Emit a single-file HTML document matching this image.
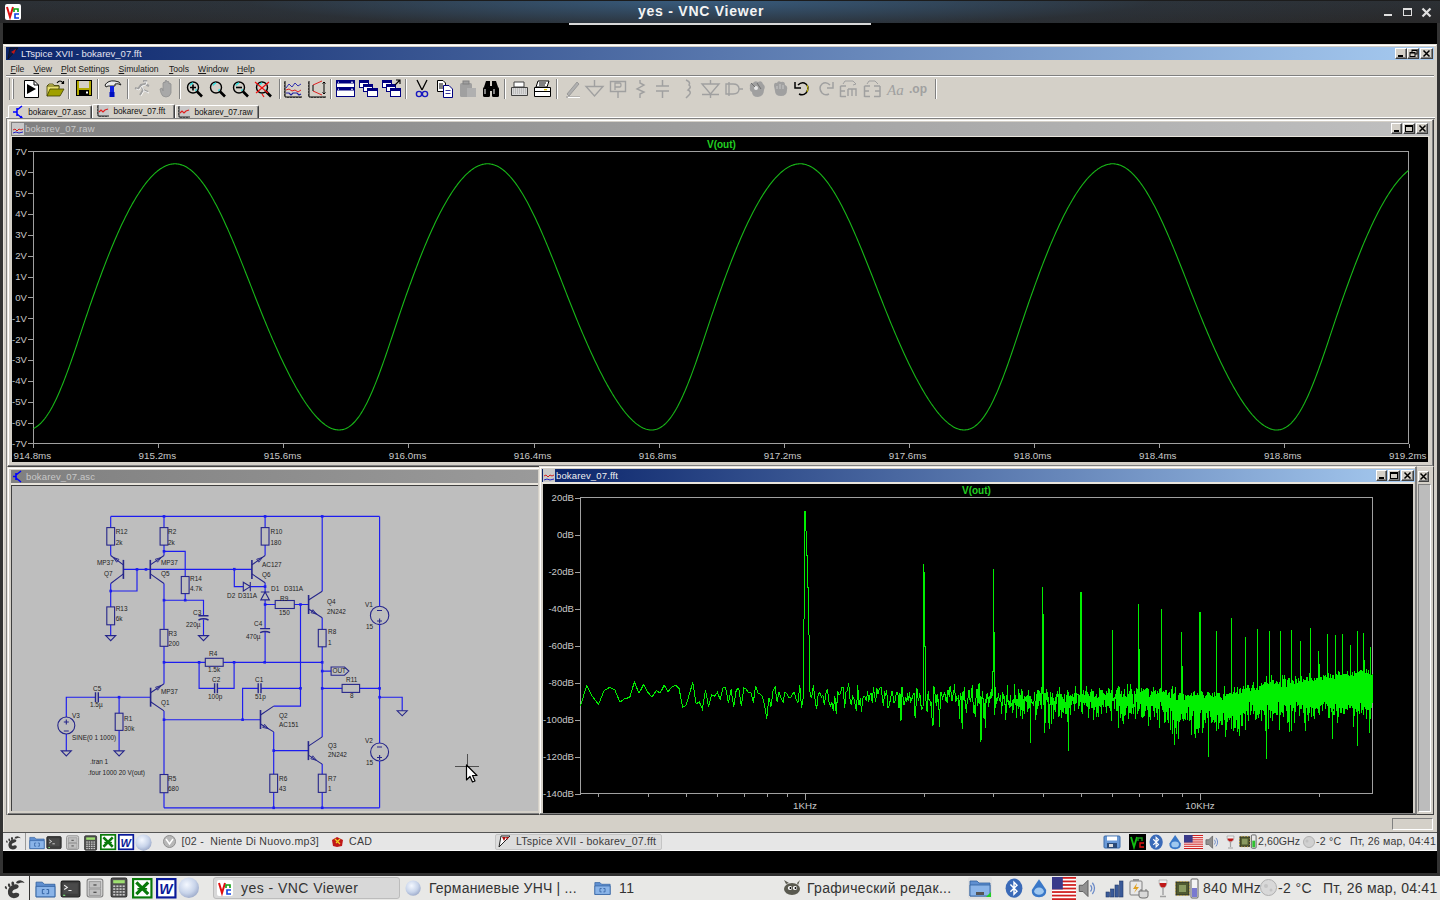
<!DOCTYPE html><html><head><meta charset="utf-8"><style>
*{margin:0;padding:0;box-sizing:border-box}
html,body{width:1440px;height:900px;overflow:hidden;background:#000;font-family:"Liberation Sans",sans-serif;position:relative}
.a{position:absolute;white-space:nowrap}
svg{position:absolute;overflow:visible}
.face{background:#d4d0c8}
.raised{background:#d4d0c8;border-top:1px solid #fff;border-left:1px solid #fff;border-right:1px solid #404040;border-bottom:1px solid #404040;box-shadow:inset -1px -1px 0 #808080}
.wbtn{position:absolute;width:11px;height:10px;background:#d4d0c8;border-top:1px solid #fff;border-left:1px solid #fff;border-right:1px solid #404040;border-bottom:1px solid #404040;box-shadow:inset -1px -1px 0 #808080}
.menu{position:absolute;top:63px;font-size:8.6px;color:#1a1a1a;line-height:12px;white-space:nowrap}
.menu u{text-decoration:underline;text-underline-offset:1px}
.ylab{position:absolute;color:#c8c8c8;font-size:9.6px;line-height:10px;text-align:right;white-space:nowrap}
.xlab{position:absolute;color:#c8c8c8;font-size:9.8px;line-height:10px;text-align:center;white-space:nowrap}
.sch{position:absolute;font-size:6.2px;line-height:7px;color:#303030;white-space:nowrap}
.tb{position:absolute;font-size:11px;line-height:13px;color:#333;white-space:nowrap}
</style></head><body><div class="a" style="left:0;top:0;width:1440px;height:23px;background:radial-gradient(ellipse 760px 46px at 700px 0px,rgba(58,100,140,0.85),rgba(45,60,75,0.3) 60%,rgba(0,0,0,0) 100%),linear-gradient(#2c3035,#29292a)"></div>
<div class="a" style="left:0;top:0;width:1440px;height:1px;background:#1c1c1c"></div>
<div class="a" style="left:638px;top:3px;font-weight:bold;font-size:14px;letter-spacing:0.75px;line-height:16px;color:#f4f4f4">yes - VNC Viewer</div>
<div class="a" style="left:5px;top:4px;width:16px;height:16px;background:#fff;border-radius:2px"></div>
<svg style="left:5px;top:4px" width="16" height="16"><path d="M2,3 L5,13 L8,3" stroke="#e01010" stroke-width="2" fill="none"/><path d="M9,8 V5 H13 V8" stroke="#10a010" stroke-width="1.6" fill="none"/><path d="M14,10 H10 V14 H14" stroke="#1040e0" stroke-width="1.6" fill="none"/></svg>
<div class="a" style="left:1384px;top:14px;width:8px;height:2px;background:#e0e0e0"></div>
<div class="a" style="left:1403px;top:8px;width:9px;height:8px;border:1.5px solid #e0e0e0;border-top-width:2.5px"></div>
<svg style="left:1421px;top:7px" width="11" height="11"><path d="M1.5,1.5 L9.5,9.5 M9.5,1.5 L1.5,9.5" stroke="#e0e0e0" stroke-width="2.2"/></svg>
<div class="a" style="left:569px;top:23px;width:302px;height:2px;background:#d8d8d8"></div>
<div class="a" style="left:0;top:23px;width:3px;height:851px;background:#333"></div>
<div class="a" style="left:1437px;top:23px;width:3px;height:851px;background:#333"></div>
<div class="a" style="left:3px;top:44px;width:1434px;height:788px;background:#d4d0c8;border-top:1px solid #e8e4dc;border-left:1px solid #e8e4dc"></div>
<div class="a" style="left:4px;top:45px;width:1432px;height:1px;background:#fff"></div>
<div class="a" style="left:6px;top:47px;width:1428px;height:13px;background:linear-gradient(to right,#0a246a,#a6caf0)"></div>
<svg style="left:7px;top:47px" width="12" height="13"><path d="M1,12 L3,1 L11,1 Z" fill="#0a1a50" stroke="#111" stroke-width="0.8"/><path d="M4,5 L9,2 L7,7 Z" fill="#c01818"/></svg>
<div class="a" style="left:21px;top:48px;font-size:9.5px;line-height:12px;color:#e4e4f0;letter-spacing:0px">LTspice XVII - bokarev_07.fft</div>
<div class="wbtn" style="left:1395px;top:48px;width:12px;height:11px"></div>
<div class="wbtn" style="left:1407px;top:48px;width:12px;height:11px"></div>
<div class="wbtn" style="left:1420px;top:48px;width:13px;height:11px"></div>
<div class="a" style="left:1398px;top:55px;width:5px;height:2px;background:#000"></div>
<svg style="left:1409px;top:49px" width="9" height="9"><rect x="3" y="1" width="5" height="4" fill="none" stroke="#000" stroke-width="1"/><rect x="1" y="3.5" width="5" height="4" fill="#d4d0c8" stroke="#000" stroke-width="1"/><line x1="3" y1="1.5" x2="8" y2="1.5" stroke="#000"/><line x1="1" y1="4" x2="6" y2="4" stroke="#000"/></svg>
<svg style="left:1422px;top:49px" width="9" height="9"><path d="M1.5,1.5 L7.5,7.5 M7.5,1.5 L1.5,7.5" stroke="#000" stroke-width="1.5"/></svg>
<div class="menu" style="left:10.5px"><u>F</u>ile</div>
<div class="menu" style="left:33.5px"><u>V</u>iew</div>
<div class="menu" style="left:61px"><u>P</u>lot Settings</div>
<div class="menu" style="left:118.5px"><u>S</u>imulation</div>
<div class="menu" style="left:169px"><u>T</u>ools</div>
<div class="menu" style="left:198px"><u>W</u>indow</div>
<div class="menu" style="left:237px"><u>H</u>elp</div>
<div class="a" style="left:6px;top:75px;width:1428px;height:1px;background:#808080"></div>
<div class="a" style="left:6px;top:76px;width:1428px;height:1px;background:#fff"></div>
<div class="a" style="left:9px;top:78px;width:1px;height:22px;background:#808080"></div><div class="a" style="left:12px;top:79px;width:2px;height:20px;background:#fff;border-right:1px solid #808080"></div><div class="a" style="left:68px;top:79px;width:1px;height:20px;background:#808080"></div><div class="a" style="left:69px;top:79px;width:1px;height:20px;background:#fff"></div><div class="a" style="left:97px;top:79px;width:1px;height:20px;background:#808080"></div><div class="a" style="left:98px;top:79px;width:1px;height:20px;background:#fff"></div><div class="a" style="left:127px;top:79px;width:1px;height:20px;background:#808080"></div><div class="a" style="left:128px;top:79px;width:1px;height:20px;background:#fff"></div><div class="a" style="left:179px;top:79px;width:1px;height:20px;background:#808080"></div><div class="a" style="left:180px;top:79px;width:1px;height:20px;background:#fff"></div><div class="a" style="left:279px;top:79px;width:1px;height:20px;background:#808080"></div><div class="a" style="left:280px;top:79px;width:1px;height:20px;background:#fff"></div><div class="a" style="left:330px;top:79px;width:1px;height:20px;background:#808080"></div><div class="a" style="left:331px;top:79px;width:1px;height:20px;background:#fff"></div><div class="a" style="left:405px;top:79px;width:1px;height:20px;background:#808080"></div><div class="a" style="left:406px;top:79px;width:1px;height:20px;background:#fff"></div><div class="a" style="left:504px;top:79px;width:1px;height:20px;background:#808080"></div><div class="a" style="left:505px;top:79px;width:1px;height:20px;background:#fff"></div><div class="a" style="left:556px;top:79px;width:1px;height:20px;background:#808080"></div><div class="a" style="left:557px;top:79px;width:1px;height:20px;background:#fff"></div><div class="a" style="left:935px;top:79px;width:1px;height:20px;background:#808080"></div><div class="a" style="left:936px;top:79px;width:1px;height:20px;background:#fff"></div><svg style="left:23px;top:79px" width="20" height="20" viewBox="0 0 20 20"><path d="M1.5,1.5 H11 L15.5,6 V18.5 H1.5 Z" fill="#fff" stroke="#000"/><path d="M11,1.5 V6 H15.5" fill="none" stroke="#000"/><path d="M4,5 L13,10 L4,15 Z" fill="#000"/></svg><svg style="left:46px;top:79px" width="20" height="20" viewBox="0 0 20 20"><path d="M1,7 L3,5 H7 L8,6.5 H13 V9 Z" fill="#e8e070" stroke="#404000" stroke-width="0.8"/><path d="M1,17 V7 H13 V10 Z" fill="#e8e070" stroke="#404000" stroke-width="0.8"/><path d="M1,17 L4,10 H18 L14,17 Z" fill="#a0a000" stroke="#404000" stroke-width="0.8"/><path d="M11,4 Q14,0 17,4 M15.5,4.5 L17.5,4.5 L17.5,2" fill="none" stroke="#000" stroke-width="1.2"/></svg><svg style="left:76px;top:79px" width="20" height="20" viewBox="0 0 20 20"><rect x="0.5" y="1.5" width="15" height="15" fill="#b0a800" stroke="#000"/><rect x="3" y="2" width="10" height="7" fill="#d4d0c8"/><rect x="3" y="11" width="10" height="5" fill="#000"/><rect x="10" y="12.5" width="2" height="2" fill="#fff"/></svg><svg style="left:103px;top:79px" width="20" height="20" viewBox="0 0 20 20"><path d="M2,6 Q5,1 12,2 Q17,2 18,6 Q15,4 12,5 V7 H5 L3,8 Z" fill="#e8e8e8" stroke="#202020" stroke-width="1"/><rect x="7" y="7" width="4" height="6" fill="#1020e0"/><rect x="6.5" y="13" width="5" height="5" fill="#0010c0"/></svg><svg style="left:132px;top:79px" width="20" height="20" viewBox="0 0 20 20"><path d="M11,2 L14,2 L13,5 L9,6 L6,10 L3,9 M9,6 L11,11 L8,16 M11,11 L16,13 M13,5 L17,7" fill="none" stroke="#a0a0a0" stroke-width="2"/><path d="M12,3 L15,3 L14,6 L10,7 L7,11 L4,10 M10,7 L12,12 L9,17 M12,12 L17,14" fill="none" stroke="#fff" stroke-width="0.8"/></svg><svg style="left:157px;top:79px" width="20" height="20" viewBox="0 0 20 20"><path d="M3,10 L5,9 L6,12 V4 Q7,2 8,4 V2 Q9,0.5 10,2 V3 Q11,1.5 12,3 V5 Q13,3.5 14,5 V14 Q13,18 9,18 Q5,18 4,14 Z" fill="#a8a8a8" stroke="#909090" stroke-width="0.8"/></svg><svg style="left:185px;top:79px" width="20" height="20" viewBox="0 0 20 20"><circle cx="8" cy="8.5" r="5.5" fill="#d4d0c8" stroke="#000" stroke-width="1.4"/><path d="M5,6.5 Q6,4.5 8,4" stroke="#30e0e0" stroke-width="1.5" fill="none"/><path d="M10.5,12 L11.5,10" stroke="#30e0e0" stroke-width="1.3"/><path d="M12,12.5 L17,17.5" stroke="#000" stroke-width="2.6"/><path d="M5,8.5 H11 M8,5.5 V11.5" stroke="#000" stroke-width="1.6"/></svg><svg style="left:208px;top:79px" width="20" height="20" viewBox="0 0 20 20"><circle cx="8" cy="8.5" r="5.5" fill="#d4d0c8" stroke="#000" stroke-width="1.4"/><path d="M5,6.5 Q6,4.5 8,4" stroke="#30e0e0" stroke-width="1.5" fill="none"/><path d="M10.5,12 L11.5,10" stroke="#30e0e0" stroke-width="1.3"/><path d="M12,12.5 L17,17.5" stroke="#000" stroke-width="2.6"/></svg><svg style="left:231px;top:79px" width="20" height="20" viewBox="0 0 20 20"><circle cx="8" cy="8.5" r="5.5" fill="#d4d0c8" stroke="#000" stroke-width="1.4"/><path d="M5,6.5 Q6,4.5 8,4" stroke="#30e0e0" stroke-width="1.5" fill="none"/><path d="M10.5,12 L11.5,10" stroke="#30e0e0" stroke-width="1.3"/><path d="M12,12.5 L17,17.5" stroke="#000" stroke-width="2.6"/><path d="M5,8.5 H11" stroke="#000" stroke-width="1.6"/></svg><svg style="left:254px;top:79px" width="20" height="20" viewBox="0 0 20 20"><circle cx="8" cy="8.5" r="5.5" fill="#d4d0c8" stroke="#000" stroke-width="1.4"/><path d="M5,6.5 Q6,4.5 8,4" stroke="#30e0e0" stroke-width="1.5" fill="none"/><path d="M10.5,12 L11.5,10" stroke="#30e0e0" stroke-width="1.3"/><path d="M12,12.5 L17,17.5" stroke="#000" stroke-width="2.6"/><path d="M1,3 L14,14 M2,14 L15,3 M8,15 L10,18" stroke="#f01010" stroke-width="1.2"/></svg><svg style="left:283px;top:79px" width="20" height="20" viewBox="0 0 20 20"><path d="M2,2 V18 H19" fill="none" stroke="#000"/><path d="M1,4 H2 M1,7 H2 M1,10 H2 M1,13 H2 M1,16 H2 M5,18 V19 M8,18 V19 M11,18 V19 M14,18 V19 M17,18 V19" stroke="#000"/><path d="M3,9 L6,5 L9,8 L12,4 L15,7 L18,5" fill="none" stroke="#3030b0"/><path d="M3,11 L6,10 L9,12 L12,11 L15,13 L18,11" fill="none" stroke="#e02020"/><path d="M3,14 L6,14 L8,16 L10,14 L14,14 L16,16 L18,15" fill="none" stroke="#2020a0" stroke-width="1.2"/></svg><svg style="left:307px;top:79px" width="20" height="20" viewBox="0 0 20 20"><path d="M2,2 V18 H19" fill="none" stroke="#000"/><path d="M1,4 H2 M1,7 H2 M1,10 H2 M1,13 H2 M1,16 H2 M5,18 V19 M8,18 V19 M11,18 V19 M14,18 V19 M17,18 V19" stroke="#000"/><path d="M6,6 L15,2 M6,12 L15,16" stroke="#e02020"/><path d="M6,6 V12 M17,3 V15 M15.5,4.5 L17,3 L18.5,4.5 M15.5,13.5 L17,15 L18.5,13.5" fill="none" stroke="#000"/></svg><svg style="left:336px;top:79px" width="20" height="20" viewBox="0 0 20 20"><rect x="0.5" y="1.5" width="18" height="16" fill="#fff" stroke="#000080"/><rect x="1" y="2" width="17" height="2.5" fill="#000080"/><rect x="2" y="2.7" width="1" height="1" fill="#fff"/><rect x="15" y="2.7" width="2" height="1" fill="#fff"/><line x1="1" y1="8.5" x2="18" y2="8.5" stroke="#000080"/><rect x="1" y="9" width="17" height="2.5" fill="#000080"/><rect x="2" y="9.7" width="1" height="1" fill="#fff"/><rect x="15" y="9.7" width="2" height="1" fill="#fff"/></svg><svg style="left:359px;top:79px" width="20" height="20" viewBox="0 0 20 20"><rect x="0.5" y="1.5" width="9" height="7" fill="#fff" stroke="#000080"/><rect x="1" y="2" width="8" height="2" fill="#000080"/><rect x="4.5" y="5.5" width="9" height="7" fill="#fff" stroke="#000080"/><rect x="5" y="6" width="8" height="2" fill="#000080"/><rect x="8.5" y="9.5" width="10" height="8" fill="#fff" stroke="#000080"/><rect x="9" y="10" width="9" height="2" fill="#000080"/></svg><svg style="left:382px;top:79px" width="20" height="20" viewBox="0 0 20 20"><rect x="0.5" y="1.5" width="9" height="7" fill="#fff" stroke="#000080"/><rect x="1" y="2" width="8" height="2" fill="#000080"/><rect x="4.5" y="5.5" width="9" height="7" fill="#fff" stroke="#000080"/><rect x="5" y="6" width="8" height="2" fill="#000080"/><rect x="8.5" y="9.5" width="10" height="8" fill="#fff" stroke="#000080"/><rect x="9" y="10" width="9" height="2" fill="#000080"/><path d="M13,6 L18,1 M14,1 H18 V5" fill="none" stroke="#000" stroke-width="1.1"/></svg><svg style="left:413px;top:79px" width="20" height="20" viewBox="0 0 20 20"><path d="M4,1 L9,11 M14,1 L9,11" stroke="#000" stroke-width="1.3"/><circle cx="6" cy="15" r="2.6" fill="none" stroke="#1818c0" stroke-width="1.4"/><circle cx="12" cy="15" r="2.6" fill="none" stroke="#1818c0" stroke-width="1.4"/></svg><svg style="left:436px;top:79px" width="20" height="20" viewBox="0 0 20 20"><path d="M1.5,1.5 H7 L9.5,4 V12.5 H1.5 Z" fill="#fff" stroke="#000"/><path d="M3,5 H7 M3,7 H7 M3,9 H7" stroke="#000"/><path d="M7.5,6.5 H13 L16.5,10 V18.5 H7.5 Z" fill="#fff" stroke="#000080"/><path d="M9.5,11.5 H14.5 M9.5,14.5 H14.5" stroke="#000080" stroke-width="0.8"/></svg><svg style="left:459px;top:79px" width="20" height="20" viewBox="0 0 20 20"><rect x="1" y="4" width="12" height="14" rx="1.5" fill="#a0a0a0"/><rect x="4" y="2" width="6" height="3" fill="#a0a0a0" stroke="#808080"/><rect x="8" y="9" width="9" height="9" fill="#b0b0b0"/></svg><svg style="left:482px;top:79px" width="20" height="20" viewBox="0 0 20 20"><path d="M2,8 L4,2 H8 V8 M16,8 L14,2 H10 V8" fill="#000"/><rect x="1" y="8" width="7" height="10" rx="1.5" fill="#000"/><rect x="10" y="8" width="7" height="10" rx="1.5" fill="#000"/><rect x="7" y="7" width="4" height="5" fill="#000"/><path d="M3,10 V15 M12,10 V15" stroke="#fff" stroke-width="1"/></svg><svg style="left:510px;top:79px" width="20" height="20" viewBox="0 0 20 20"><path d="M4,3 H14 V8 H4 Z" fill="#fff" stroke="#404040"/><path d="M1.5,8.5 H17.5 V16.5 H1.5 Z" fill="#d8d8d8" stroke="#404040"/><path d="M3,10 H16 M3,12 H16 M3,14 H16" stroke="#a0a0a0" stroke-dasharray="1 1"/></svg><svg style="left:533px;top:79px" width="20" height="20" viewBox="0 0 20 20"><path d="M5,2 H16 L14,8 H3 Z" fill="#fff" stroke="#000"/><path d="M6,4 H13 M6,6 H12" stroke="#000"/><path d="M1.5,8.5 H17.5 V17.5 H1.5 Z" fill="#fff" stroke="#000"/><path d="M1.5,12.5 H17.5" stroke="#000"/><rect x="11" y="10" width="3" height="1.3" fill="#e0c000"/></svg><svg style="left:563px;top:79px" width="20" height="20" viewBox="0 0 20 20"><path d="M4,15 L14,3 L16,5 L6,17 Z" fill="#b0b0b0" stroke="#909090" stroke-width="0.8"/><path d="M3,18 H17" stroke="#a0a0a0" stroke-width="1.2"/><path d="M5,18.5 H17" stroke="#fff"/></svg><svg style="left:585px;top:79px" width="20" height="20" viewBox="0 0 20 20"><path d="M9.5,1 V7 M1,7.5 H18 L9.5,17 Z" fill="none" stroke="#a0a0a0" stroke-width="1.4"/></svg><svg style="left:609px;top:79px" width="20" height="20" viewBox="0 0 20 20"><path d="M1.5,2.5 H16.5 V12.5 H1.5 Z M9,12.5 V19" fill="none" stroke="#a0a0a0" stroke-width="1.4"/><path d="M6,11 V4 H11 Q12,4 12,6 Q12,8 11,8 H6" fill="none" stroke="#a0a0a0" stroke-width="1.3"/></svg><svg style="left:633px;top:79px" width="20" height="20" viewBox="0 0 20 20"><path d="M7,1 V4 L11,6 L4,10 L11,13 L7,15 V19" fill="none" stroke="#a0a0a0" stroke-width="1.4"/></svg><svg style="left:655px;top:79px" width="20" height="20" viewBox="0 0 20 20"><path d="M7.5,1 V7 M1,7 H14 M1,12 H14 M7.5,12 V19" fill="none" stroke="#a0a0a0" stroke-width="1.5"/></svg><svg style="left:680px;top:79px" width="20" height="20" viewBox="0 0 20 20"><path d="M6,1 Q11,3 9,6 Q12,8 8,11 Q12,13 9,16 L6,19" fill="none" stroke="#a0a0a0" stroke-width="1.5"/></svg><svg style="left:701px;top:79px" width="20" height="20" viewBox="0 0 20 20"><path d="M1,5 H18 L9.5,15 Z M1,15.5 H18 M9.5,1 V5 M9.5,15 V19" fill="none" stroke="#a0a0a0" stroke-width="1.4"/></svg><svg style="left:724px;top:79px" width="20" height="20" viewBox="0 0 20 20"><path d="M2,5 H9 Q15,5 15,10 Q15,15 9,15 H2 Z M5,3 V17 M15,10 H19" fill="none" stroke="#a0a0a0" stroke-width="1.4"/></svg><svg style="left:747px;top:79px" width="20" height="20" viewBox="0 0 20 20"><path d="M3,8 Q2,4 6,4 Q8,1 11,3 Q15,1 16,5 Q19,7 17,11 Q17,17 11,18 Q5,18 5,13 Q2,12 3,8 Z" fill="#a0a0a0"/><circle cx="9" cy="9" r="2" fill="#e8e8e8"/><path d="M4,4 L8,8 M10,4 L14,10" stroke="#707070"/></svg><svg style="left:771px;top:79px" width="20" height="20" viewBox="0 0 20 20"><path d="M3,7 Q3,3 6,4 Q7,1 10,3 Q14,2 14,6 Q17,7 16,11 Q16,17 10,17 Q4,17 4,12 Z" fill="#a0a0a0"/><path d="M6,7 V10 M9,5 V10 M12,6 V10" stroke="#c8c8c8"/></svg><svg style="left:793px;top:79px" width="20" height="20" viewBox="0 0 20 20"><path d="M5,6 Q9,2 13,5 Q17,9 13,14 Q10,17 6,15" fill="none" stroke="#000" stroke-width="1.5"/><path d="M2,3 V9 H8" fill="none" stroke="#000" stroke-width="1.5"/><path d="M14,6 Q16,9 14,13" stroke="#d0c000" fill="none"/></svg><svg style="left:816px;top:79px" width="20" height="20" viewBox="0 0 20 20"><path d="M14,6 Q10,2 6,5 Q2,9 6,14 Q9,17 13,15" fill="none" stroke="#a0a0a0" stroke-width="1.5"/><path d="M17,3 V9 H11" fill="none" stroke="#a0a0a0" stroke-width="1.5"/></svg><svg style="left:839px;top:79px" width="20" height="20" viewBox="0 0 20 20"><path d="M1.5,7 V18 M1.5,7 H7 M1.5,12 H6 M1.5,17.5 H7" stroke="#a0a0a0" stroke-width="1.5" fill="none"/><path d="M9,10 V17 M9,10 H17 V17 M13,10 V17" stroke="#a0a0a0" stroke-width="1.4" fill="none"/><path d="M4,5 L6,2 H14 L17,5 M15,3 L17,5 L14,6" stroke="#a0a0a0" fill="none"/></svg><svg style="left:863px;top:79px" width="20" height="20" viewBox="0 0 20 20"><path d="M1.5,7 V18 M1.5,7 H7 M1.5,12 H6 M1.5,17.5 H7" stroke="#a0a0a0" stroke-width="1.5" fill="none"/><path d="M17,7 V18 M11,7 H17 M12,12 H17 M11,17.5 H17" stroke="#a0a0a0" stroke-width="1.5" fill="none"/><path d="M4,5 L6,2 H12 L15,5 M13,3 L15,5" stroke="#a0a0a0" fill="none"/></svg><svg style="left:886px;top:79px" width="20" height="20" viewBox="0 0 20 20"><text x="1" y="16" font-family="Liberation Serif" font-style="italic" font-size="15" fill="#a0a0a0">Aa</text></svg><svg style="left:909px;top:79px" width="20" height="20" viewBox="0 0 20 20"><text x="0" y="14" font-family="Liberation Sans" font-weight="bold" font-size="12" fill="#a0a0a0">.op</text></svg>
<div class="a" style="left:6px;top:117px;width:1429px;height:1px;background:#fff"></div><div class="a" style="left:7.5px;top:104.5px;width:84px;height:13.5px;background:#d4d0c8;border-top:1px solid #fff;border-left:1px solid #fff;border-right:1px solid #404040;box-shadow:inset -1px 0 0 #808080;border-radius:2px 2px 0 0"></div><svg style="left:13px;top:106.0px" width="12" height="13" viewBox="0 0 12 13"><path d="M4,2 V10 M0,6 H4 M4,4 L9,0 M4,8 L9,12 M7,11 L9,12 L8,10" stroke="#0000ff" stroke-width="1.5" fill="none"/></svg><div class="a" style="left:28.3px;top:107.0px;font-size:8.2px;line-height:12px;color:#111">bokarev_07.asc</div><div class="a" style="left:175px;top:104.5px;width:84px;height:13.5px;background:#d4d0c8;border-top:1px solid #fff;border-left:1px solid #fff;border-right:1px solid #404040;box-shadow:inset -1px 0 0 #808080;border-radius:2px 2px 0 0"></div><svg style="left:178px;top:106.0px" width="12" height="13" viewBox="0 0 12 13"><rect x="0" y="0" width="12" height="12" fill="#c8c8c8"/><path d="M1,0 V11 H12 M0,2 H1 M0,5 H1 M0,8 H1 M3,11 V12 M6,11 V12 M9,11 V12" stroke="#000" stroke-width="0.8" fill="none"/><path d="M2,7 L4,5 L6,7 L8,5 L11,4" stroke="#e02020" stroke-width="1.2" fill="none"/></svg><div class="a" style="left:194.5px;top:107.0px;font-size:8.2px;line-height:12px;color:#111">bokarev_07.raw</div><div class="a" style="left:92px;top:103.5px;width:83px;height:15.5px;background:#d4d0c8;border-top:1px solid #fff;border-left:1px solid #fff;border-right:1px solid #404040;box-shadow:inset -1px 0 0 #808080;border-radius:2px 2px 0 0"></div><svg style="left:97px;top:105.0px" width="12" height="13" viewBox="0 0 12 13"><rect x="0" y="0" width="12" height="12" fill="#c8c8c8"/><path d="M1,0 V11 H12 M0,2 H1 M0,5 H1 M0,8 H1 M3,11 V12 M6,11 V12 M9,11 V12" stroke="#000" stroke-width="0.8" fill="none"/><path d="M2,7 L4,5 L6,7 L8,5 L11,4" stroke="#e02020" stroke-width="1.2" fill="none"/></svg><div class="a" style="left:113.5px;top:106.0px;font-size:8.2px;line-height:12px;color:#111">bokarev_07.fft</div>
<div class="a" style="left:6px;top:118px;width:1429px;height:697px;background:#d4d0c8;border-top:1px solid #808080;border-left:1px solid #808080"></div>
<div class="a" style="left:7px;top:119px;width:1427px;height:348px;background:#d4d0c8;border-top:1px solid #e8e4dc;border-left:1px solid #e8e4dc;border-right:1px solid #404040;border-bottom:1px solid #404040"></div>
<div class="a" style="left:8px;top:120px;width:1425px;height:1px;background:#fff"></div>
<div class="a" style="left:8px;top:120px;width:1px;height:345px;background:#fff"></div>
<div class="a" style="left:1432px;top:120px;width:1px;height:346px;background:#808080"></div>
<div class="a" style="left:8px;top:465px;width:1425px;height:1px;background:#808080"></div>
<div class="a" style="left:11px;top:122px;width:1419px;height:14px;background:linear-gradient(to right,#808080,#c0c0c0)"></div>
<svg style="left:12px;top:122px" width="12" height="14"><rect x="0" y="1" width="12" height="12" fill="#c8c8c8"/><path d="M1,8 L3,7 L5,9 L7,7 L9,8 L11,7" stroke="#d02020" fill="none"/><path d="M1,11 L4,10 L7,11 L11,10" stroke="#2020c0" fill="none"/></svg>
<div class="a" style="left:25px;top:123px;font-size:9.5px;line-height:12px;color:#c8c8c8;letter-spacing:0.15px">bokarev_07.raw</div>
<div class="wbtn" style="left:1391px;top:123px;width:11px;height:11px"></div>
<div class="wbtn" style="left:1403px;top:123px;width:12px;height:11px"></div>
<div class="wbtn" style="left:1416px;top:123px;width:12px;height:11px"></div>
<div class="a" style="left:1394px;top:130px;width:5px;height:2px;background:#000"></div>
<div class="a" style="left:1405px;top:125px;width:8px;height:7px;border:1px solid #000;border-top-width:2px"></div>
<svg style="left:1418px;top:124px" width="9" height="9"><path d="M1.5,1.5 L7.5,7.5 M7.5,1.5 L1.5,7.5" stroke="#000" stroke-width="1.5"/></svg>
<div class="a" style="left:11px;top:136px;width:1418px;height:1px;background:#e8e4dc"></div>
<div class="a" style="left:12px;top:137px;width:1416px;height:325px;background:#000"></div>
<svg style="left:0;top:0" width="1440" height="900" viewBox="0 0 1440 900"><g stroke="#a0a0a0" stroke-width="1" fill="none" shape-rendering="crispEdges"><rect x="33.5" y="151.5" width="1375" height="292"/><line x1="28" y1="151.5" x2="33.5" y2="151.5"/><line x1="28" y1="172.5" x2="33.5" y2="172.5"/><line x1="28" y1="193.5" x2="33.5" y2="193.5"/><line x1="28" y1="214.5" x2="33.5" y2="214.5"/><line x1="28" y1="235.5" x2="33.5" y2="235.5"/><line x1="28" y1="256.5" x2="33.5" y2="256.5"/><line x1="28" y1="277.5" x2="33.5" y2="277.5"/><line x1="28" y1="297.5" x2="33.5" y2="297.5"/><line x1="28" y1="318.5" x2="33.5" y2="318.5"/><line x1="28" y1="339.5" x2="33.5" y2="339.5"/><line x1="28" y1="360.5" x2="33.5" y2="360.5"/><line x1="28" y1="381.5" x2="33.5" y2="381.5"/><line x1="28" y1="402.5" x2="33.5" y2="402.5"/><line x1="28" y1="423.5" x2="33.5" y2="423.5"/><line x1="28" y1="443.5" x2="33.5" y2="443.5"/><line x1="33.5" y1="443.5" x2="33.5" y2="448"/><line x1="158.5" y1="443.5" x2="158.5" y2="448"/><line x1="283.5" y1="443.5" x2="283.5" y2="448"/><line x1="408.5" y1="443.5" x2="408.5" y2="448"/><line x1="534.5" y1="443.5" x2="534.5" y2="448"/><line x1="659.5" y1="443.5" x2="659.5" y2="448"/><line x1="784.5" y1="443.5" x2="784.5" y2="448"/><line x1="909.5" y1="443.5" x2="909.5" y2="448"/><line x1="1034.5" y1="443.5" x2="1034.5" y2="448"/><line x1="1159.5" y1="443.5" x2="1159.5" y2="448"/><line x1="1284.5" y1="443.5" x2="1284.5" y2="448"/><line x1="1409.5" y1="443.5" x2="1409.5" y2="448"/></g><polyline points="33.5,428.4 34.5,427.9 35.5,427.4 36.5,426.7 37.5,426.0 38.5,425.2 39.5,424.4 40.5,423.5 41.5,422.4 42.5,421.4 43.5,420.2 44.5,419.0 45.5,417.7 46.5,416.3 47.5,414.8 48.5,413.3 49.5,411.7 50.5,410.0 51.5,408.2 52.5,406.4 53.5,404.5 54.5,402.5 55.5,400.5 56.5,398.4 57.5,396.2 58.5,394.0 59.5,391.7 60.5,389.3 61.5,386.9 62.5,384.5 63.5,382.0 64.5,379.4 65.5,376.8 66.5,374.1 67.5,371.4 68.5,368.7 69.5,365.9 70.5,363.1 71.5,360.3 72.5,357.4 73.5,354.5 74.5,351.6 75.5,348.6 76.5,345.7 77.5,342.7 78.5,339.7 79.5,336.7 80.5,333.7 81.5,330.7 82.5,327.7 83.5,324.7 84.5,321.7 85.5,318.7 86.5,315.8 87.5,312.8 88.5,309.9 89.5,306.9 90.5,304.0 91.5,301.2 92.5,298.3 93.5,295.5 94.5,292.7 95.5,289.9 96.5,287.1 97.5,284.3 98.5,281.6 99.5,278.9 100.5,276.2 101.5,273.5 102.5,270.8 103.5,268.2 104.5,265.6 105.5,263.0 106.5,260.4 107.5,257.9 108.5,255.4 109.5,252.9 110.5,250.4 111.5,248.0 112.5,245.5 113.5,243.2 114.5,240.8 115.5,238.5 116.5,236.2 117.5,233.9 118.5,231.7 119.5,229.4 120.5,227.3 121.5,225.1 122.5,223.0 123.5,220.9 124.5,218.9 125.5,216.8 126.5,214.9 127.5,212.9 128.5,211.0 129.5,209.1 130.5,207.2 131.5,205.4 132.5,203.6 133.5,201.9 134.5,200.2 135.5,198.5 136.5,196.8 137.5,195.2 138.5,193.7 139.5,192.1 140.5,190.6 141.5,189.2 142.5,187.7 143.5,186.3 144.5,185.0 145.5,183.7 146.5,182.4 147.5,181.2 148.5,180.0 149.5,178.8 150.5,177.7 151.5,176.6 152.5,175.6 153.5,174.6 154.5,173.7 155.5,172.7 156.5,171.9 157.5,171.0 158.5,170.3 159.5,169.5 160.5,168.8 161.5,168.2 162.5,167.6 163.5,167.0 164.5,166.5 165.5,166.0 166.5,165.6 167.5,165.2 168.5,164.8 169.5,164.5 170.5,164.3 171.5,164.1 172.5,164.0 173.5,163.9 174.5,163.8 175.5,163.8 176.5,163.9 177.5,164.0 178.5,164.1 179.5,164.3 180.5,164.6 181.5,164.9 182.5,165.2 183.5,165.6 184.5,166.1 185.5,166.6 186.5,167.1 187.5,167.7 188.5,168.4 189.5,169.1 190.5,169.8 191.5,170.6 192.5,171.5 193.5,172.4 194.5,173.3 195.5,174.3 196.5,175.4 197.5,176.5 198.5,177.6 199.5,178.8 200.5,180.0 201.5,181.3 202.5,182.6 203.5,184.0 204.5,185.4 205.5,186.9 206.5,188.4 207.5,189.9 208.5,191.5 209.5,193.1 210.5,194.8 211.5,196.5 212.5,198.3 213.5,200.0 214.5,201.9 215.5,203.7 216.5,205.6 217.5,207.6 218.5,209.5 219.5,211.5 220.5,213.5 221.5,215.6 222.5,217.7 223.5,219.8 224.5,222.0 225.5,224.2 226.5,226.4 227.5,228.6 228.5,230.9 229.5,233.1 230.5,235.5 231.5,237.8 232.5,240.1 233.5,242.5 234.5,244.9 235.5,247.3 236.5,249.7 237.5,252.2 238.5,254.6 239.5,257.1 240.5,259.6 241.5,262.1 242.5,264.6 243.5,267.1 244.5,269.6 245.5,272.2 246.5,274.7 247.5,277.2 248.5,279.8 249.5,282.3 250.5,284.9 251.5,287.4 252.5,290.0 253.5,292.6 254.5,295.1 255.5,297.7 256.5,300.2 257.5,302.7 258.5,305.3 259.5,307.8 260.5,310.3 261.5,312.7 262.5,315.2 263.5,317.7 264.5,320.1 265.5,322.5 266.5,325.0 267.5,327.4 268.5,329.7 269.5,332.1 270.5,334.4 271.5,336.8 272.5,339.1 273.5,341.4 274.5,343.6 275.5,345.9 276.5,348.1 277.5,350.3 278.5,352.5 279.5,354.7 280.5,356.9 281.5,359.0 282.5,361.1 283.5,363.2 284.5,365.3 285.5,367.3 286.5,369.3 287.5,371.3 288.5,373.3 289.5,375.2 290.5,377.2 291.5,379.1 292.5,380.9 293.5,382.8 294.5,384.6 295.5,386.4 296.5,388.2 297.5,389.9 298.5,391.6 299.5,393.3 300.5,394.9 301.5,396.6 302.5,398.1 303.5,399.7 304.5,401.2 305.5,402.7 306.5,404.2 307.5,405.6 308.5,407.0 309.5,408.4 310.5,409.7 311.5,411.0 312.5,412.3 313.5,413.5 314.5,414.7 315.5,415.8 316.5,416.9 317.5,418.0 318.5,419.0 319.5,420.0 320.5,421.0 321.5,421.9 322.5,422.7 323.5,423.5 324.5,424.3 325.5,425.1 326.5,425.7 327.5,426.4 328.5,427.0 329.5,427.5 330.5,428.0 331.5,428.4 332.5,428.8 333.5,429.1 334.5,429.4 335.5,429.6 336.5,429.8 337.5,429.9 338.5,430.0 339.5,430.0 340.5,429.9 341.5,429.8 342.5,429.6 343.5,429.4 344.5,429.1 345.5,428.7 346.5,428.2 347.5,427.7 348.5,427.1 349.5,426.4 350.5,425.7 351.5,424.9 352.5,424.0 353.5,423.0 354.5,422.0 355.5,420.9 356.5,419.7 357.5,418.4 358.5,417.1 359.5,415.7 360.5,414.2 361.5,412.6 362.5,411.0 363.5,409.2 364.5,407.5 365.5,405.6 366.5,403.7 367.5,401.7 368.5,399.6 369.5,397.5 370.5,395.3 371.5,393.0 372.5,390.7 373.5,388.3 374.5,385.9 375.5,383.4 376.5,380.9 377.5,378.3 378.5,375.7 379.5,373.0 380.5,370.3 381.5,367.5 382.5,364.7 383.5,361.9 384.5,359.1 385.5,356.2 386.5,353.3 387.5,350.3 388.5,347.4 389.5,344.4 390.5,341.4 391.5,338.5 392.5,335.5 393.5,332.5 394.5,329.5 395.5,326.5 396.5,323.5 397.5,320.5 398.5,317.5 399.5,314.5 400.5,311.6 401.5,308.6 402.5,305.7 403.5,302.8 404.5,300.0 405.5,297.1 406.5,294.3 407.5,291.5 408.5,288.7 409.5,285.9 410.5,283.2 411.5,280.5 412.5,277.7 413.5,275.0 414.5,272.4 415.5,269.7 416.5,267.1 417.5,264.5 418.5,261.9 419.5,259.3 420.5,256.8 421.5,254.3 422.5,251.8 423.5,249.4 424.5,246.9 425.5,244.5 426.5,242.2 427.5,239.8 428.5,237.5 429.5,235.2 430.5,233.0 431.5,230.7 432.5,228.5 433.5,226.4 434.5,224.2 435.5,222.1 436.5,220.1 437.5,218.0 438.5,216.0 439.5,214.0 440.5,212.1 441.5,210.2 442.5,208.3 443.5,206.5 444.5,204.7 445.5,202.9 446.5,201.2 447.5,199.5 448.5,197.8 449.5,196.2 450.5,194.6 451.5,193.0 452.5,191.5 453.5,190.0 454.5,188.6 455.5,187.1 456.5,185.8 457.5,184.4 458.5,183.1 459.5,181.9 460.5,180.7 461.5,179.5 462.5,178.4 463.5,177.3 464.5,176.2 465.5,175.2 466.5,174.2 467.5,173.3 468.5,172.4 469.5,171.5 470.5,170.7 471.5,169.9 472.5,169.2 473.5,168.5 474.5,167.9 475.5,167.3 476.5,166.8 477.5,166.3 478.5,165.8 479.5,165.4 480.5,165.0 481.5,164.7 482.5,164.4 483.5,164.2 484.5,164.0 485.5,163.9 486.5,163.8 487.5,163.8 488.5,163.8 489.5,163.9 490.5,164.0 491.5,164.2 492.5,164.4 493.5,164.7 494.5,165.0 495.5,165.4 496.5,165.8 497.5,166.3 498.5,166.8 499.5,167.4 500.5,168.0 501.5,168.7 502.5,169.4 503.5,170.2 504.5,171.0 505.5,171.9 506.5,172.8 507.5,173.8 508.5,174.8 509.5,175.8 510.5,177.0 511.5,178.1 512.5,179.3 513.5,180.6 514.5,181.9 515.5,183.2 516.5,184.6 517.5,186.0 518.5,187.5 519.5,189.0 520.5,190.6 521.5,192.2 522.5,193.8 523.5,195.5 524.5,197.2 525.5,199.0 526.5,200.8 527.5,202.6 528.5,204.5 529.5,206.4 530.5,208.4 531.5,210.4 532.5,212.4 533.5,214.4 534.5,216.5 535.5,218.6 536.5,220.7 537.5,222.9 538.5,225.1 539.5,227.3 540.5,229.5 541.5,231.8 542.5,234.1 543.5,236.4 544.5,238.8 545.5,241.1 546.5,243.5 547.5,245.9 548.5,248.3 549.5,250.8 550.5,253.2 551.5,255.7 552.5,258.1 553.5,260.6 554.5,263.1 555.5,265.6 556.5,268.2 557.5,270.7 558.5,273.2 559.5,275.8 560.5,278.3 561.5,280.9 562.5,283.4 563.5,286.0 564.5,288.5 565.5,291.1 566.5,293.6 567.5,296.2 568.5,298.7 569.5,301.3 570.5,303.8 571.5,306.3 572.5,308.8 573.5,311.3 574.5,313.8 575.5,316.3 576.5,318.7 577.5,321.1 578.5,323.6 579.5,326.0 580.5,328.4 581.5,330.7 582.5,333.1 583.5,335.4 584.5,337.7 585.5,340.0 586.5,342.3 587.5,344.6 588.5,346.8 589.5,349.1 590.5,351.3 591.5,353.5 592.5,355.6 593.5,357.8 594.5,359.9 595.5,362.0 596.5,364.1 597.5,366.1 598.5,368.2 599.5,370.2 600.5,372.2 601.5,374.1 602.5,376.1 603.5,378.0 604.5,379.9 605.5,381.7 606.5,383.5 607.5,385.4 608.5,387.1 609.5,388.9 610.5,390.6 611.5,392.3 612.5,394.0 613.5,395.6 614.5,397.2 615.5,398.8 616.5,400.3 617.5,401.9 618.5,403.3 619.5,404.8 620.5,406.2 621.5,407.6 622.5,408.9 623.5,410.3 624.5,411.5 625.5,412.8 626.5,414.0 627.5,415.2 628.5,416.3 629.5,417.4 630.5,418.4 631.5,419.4 632.5,420.4 633.5,421.3 634.5,422.2 635.5,423.1 636.5,423.9 637.5,424.6 638.5,425.3 639.5,426.0 640.5,426.6 641.5,427.2 642.5,427.7 643.5,428.2 644.5,428.6 645.5,429.0 646.5,429.3 647.5,429.5 648.5,429.7 649.5,429.9 650.5,430.0 651.5,430.0 652.5,430.0 653.5,429.9 654.5,429.7 655.5,429.5 656.5,429.3 657.5,428.9 658.5,428.5 659.5,428.0 660.5,427.5 661.5,426.8 662.5,426.1 663.5,425.4 664.5,424.5 665.5,423.6 666.5,422.6 667.5,421.5 668.5,420.4 669.5,419.2 670.5,417.9 671.5,416.5 672.5,415.0 673.5,413.5 674.5,411.9 675.5,410.2 676.5,408.5 677.5,406.7 678.5,404.8 679.5,402.8 680.5,400.8 681.5,398.7 682.5,396.6 683.5,394.3 684.5,392.1 685.5,389.7 686.5,387.3 687.5,384.9 688.5,382.4 689.5,379.8 690.5,377.2 691.5,374.6 692.5,371.9 693.5,369.1 694.5,366.4 695.5,363.6 696.5,360.7 697.5,357.8 698.5,355.0 699.5,352.0 700.5,349.1 701.5,346.1 702.5,343.2 703.5,340.2 704.5,337.2 705.5,334.2 706.5,331.2 707.5,328.2 708.5,325.2 709.5,322.2 710.5,319.2 711.5,316.2 712.5,313.3 713.5,310.3 714.5,307.4 715.5,304.5 716.5,301.6 717.5,298.8 718.5,295.9 719.5,293.1 720.5,290.3 721.5,287.6 722.5,284.8 723.5,282.0 724.5,279.3 725.5,276.6 726.5,273.9 727.5,271.3 728.5,268.6 729.5,266.0 730.5,263.4 731.5,260.8 732.5,258.3 733.5,255.8 734.5,253.3 735.5,250.8 736.5,248.3 737.5,245.9 738.5,243.5 739.5,241.2 740.5,238.8 741.5,236.5 742.5,234.3 743.5,232.0 744.5,229.8 745.5,227.6 746.5,225.5 747.5,223.3 748.5,221.2 749.5,219.2 750.5,217.2 751.5,215.2 752.5,213.2 753.5,211.3 754.5,209.4 755.5,207.5 756.5,205.7 757.5,203.9 758.5,202.2 759.5,200.4 760.5,198.7 761.5,197.1 762.5,195.5 763.5,193.9 764.5,192.4 765.5,190.9 766.5,189.4 767.5,188.0 768.5,186.6 769.5,185.2 770.5,183.9 771.5,182.6 772.5,181.4 773.5,180.2 774.5,179.0 775.5,177.9 776.5,176.8 777.5,175.8 778.5,174.8 779.5,173.8 780.5,172.9 781.5,172.0 782.5,171.2 783.5,170.4 784.5,169.6 785.5,168.9 786.5,168.3 787.5,167.6 788.5,167.1 789.5,166.5 790.5,166.1 791.5,165.6 792.5,165.2 793.5,164.9 794.5,164.6 795.5,164.3 796.5,164.1 797.5,164.0 798.5,163.9 799.5,163.8 800.5,163.8 801.5,163.8 802.5,163.9 803.5,164.1 804.5,164.3 805.5,164.5 806.5,164.8 807.5,165.2 808.5,165.5 809.5,166.0 810.5,166.5 811.5,167.0 812.5,167.6 813.5,168.3 814.5,169.0 815.5,169.7 816.5,170.5 817.5,171.4 818.5,172.2 819.5,173.2 820.5,174.2 821.5,175.2 822.5,176.3 823.5,177.4 824.5,178.6 825.5,179.8 826.5,181.1 827.5,182.4 828.5,183.8 829.5,185.2 830.5,186.7 831.5,188.1 832.5,189.7 833.5,191.3 834.5,192.9 835.5,194.5 836.5,196.2 837.5,198.0 838.5,199.8 839.5,201.6 840.5,203.4 841.5,205.3 842.5,207.2 843.5,209.2 844.5,211.2 845.5,213.2 846.5,215.3 847.5,217.4 848.5,219.5 849.5,221.6 850.5,223.8 851.5,226.0 852.5,228.2 853.5,230.5 854.5,232.8 855.5,235.1 856.5,237.4 857.5,239.8 858.5,242.1 859.5,244.5 860.5,246.9 861.5,249.3 862.5,251.8 863.5,254.2 864.5,256.7 865.5,259.2 866.5,261.7 867.5,264.2 868.5,266.7 869.5,269.2 870.5,271.7 871.5,274.3 872.5,276.8 873.5,279.4 874.5,281.9 875.5,284.5 876.5,287.0 877.5,289.6 878.5,292.2 879.5,294.7 880.5,297.3 881.5,299.8 882.5,302.3 883.5,304.9 884.5,307.4 885.5,309.9 886.5,312.4 887.5,314.8 888.5,317.3 889.5,319.7 890.5,322.2 891.5,324.6 892.5,327.0 893.5,329.4 894.5,331.7 895.5,334.1 896.5,336.4 897.5,338.7 898.5,341.0 899.5,343.3 900.5,345.5 901.5,347.8 902.5,350.0 903.5,352.2 904.5,354.4 905.5,356.5 906.5,358.7 907.5,360.8 908.5,362.9 909.5,364.9 910.5,367.0 911.5,369.0 912.5,371.0 913.5,373.0 914.5,374.9 915.5,376.9 916.5,378.8 917.5,380.6 918.5,382.5 919.5,384.3 920.5,386.1 921.5,387.9 922.5,389.6 923.5,391.3 924.5,393.0 925.5,394.7 926.5,396.3 927.5,397.9 928.5,399.5 929.5,401.0 930.5,402.5 931.5,404.0 932.5,405.4 933.5,406.8 934.5,408.2 935.5,409.5 936.5,410.8 937.5,412.1 938.5,413.3 939.5,414.5 940.5,415.6 941.5,416.8 942.5,417.8 943.5,418.9 944.5,419.9 945.5,420.8 946.5,421.7 947.5,422.6 948.5,423.4 949.5,424.2 950.5,424.9 951.5,425.6 952.5,426.3 953.5,426.9 954.5,427.4 955.5,427.9 956.5,428.4 957.5,428.7 958.5,429.1 959.5,429.4 960.5,429.6 961.5,429.8 962.5,429.9 963.5,430.0 964.5,430.0 965.5,429.9 966.5,429.8 967.5,429.7 968.5,429.4 969.5,429.1 970.5,428.7 971.5,428.3 972.5,427.8 973.5,427.2 974.5,426.6 975.5,425.8 976.5,425.0 977.5,424.2 978.5,423.2 979.5,422.2 980.5,421.1 981.5,419.9 982.5,418.6 983.5,417.3 984.5,415.9 985.5,414.4 986.5,412.9 987.5,411.2 988.5,409.5 989.5,407.7 990.5,405.9 991.5,404.0 992.5,402.0 993.5,399.9 994.5,397.8 995.5,395.6 996.5,393.4 997.5,391.1 998.5,388.7 999.5,386.3 1000.5,383.8 1001.5,381.3 1002.5,378.7 1003.5,376.1 1004.5,373.4 1005.5,370.7 1006.5,368.0 1007.5,365.2 1008.5,362.4 1009.5,359.5 1010.5,356.6 1011.5,353.7 1012.5,350.8 1013.5,347.9 1014.5,344.9 1015.5,341.9 1016.5,338.9 1017.5,335.9 1018.5,332.9 1019.5,329.9 1020.5,326.9 1021.5,323.9 1022.5,321.0 1023.5,318.0 1024.5,315.0 1025.5,312.0 1026.5,309.1 1027.5,306.2 1028.5,303.3 1029.5,300.4 1030.5,297.6 1031.5,294.8 1032.5,292.0 1033.5,289.2 1034.5,286.4 1035.5,283.6 1036.5,280.9 1037.5,278.2 1038.5,275.5 1039.5,272.8 1040.5,270.1 1041.5,267.5 1042.5,264.9 1043.5,262.3 1044.5,259.8 1045.5,257.2 1046.5,254.7 1047.5,252.2 1048.5,249.8 1049.5,247.3 1050.5,244.9 1051.5,242.5 1052.5,240.2 1053.5,237.9 1054.5,235.6 1055.5,233.3 1056.5,231.1 1057.5,228.9 1058.5,226.7 1059.5,224.6 1060.5,222.5 1061.5,220.4 1062.5,218.3 1063.5,216.3 1064.5,214.3 1065.5,212.4 1066.5,210.5 1067.5,208.6 1068.5,206.8 1069.5,204.9 1070.5,203.2 1071.5,201.4 1072.5,199.7 1073.5,198.1 1074.5,196.4 1075.5,194.8 1076.5,193.3 1077.5,191.7 1078.5,190.2 1079.5,188.8 1080.5,187.4 1081.5,186.0 1082.5,184.7 1083.5,183.3 1084.5,182.1 1085.5,180.9 1086.5,179.7 1087.5,178.5 1088.5,177.4 1089.5,176.4 1090.5,175.3 1091.5,174.4 1092.5,173.4 1093.5,172.5 1094.5,171.7 1095.5,170.8 1096.5,170.1 1097.5,169.3 1098.5,168.6 1099.5,168.0 1100.5,167.4 1101.5,166.8 1102.5,166.3 1103.5,165.9 1104.5,165.5 1105.5,165.1 1106.5,164.8 1107.5,164.5 1108.5,164.2 1109.5,164.1 1110.5,163.9 1111.5,163.8 1112.5,163.8 1113.5,163.8 1114.5,163.9 1115.5,164.0 1116.5,164.2 1117.5,164.4 1118.5,164.6 1119.5,164.9 1120.5,165.3 1121.5,165.7 1122.5,166.2 1123.5,166.7 1124.5,167.3 1125.5,167.9 1126.5,168.6 1127.5,169.3 1128.5,170.0 1129.5,170.9 1130.5,171.7 1131.5,172.6 1132.5,173.6 1133.5,174.6 1134.5,175.7 1135.5,176.8 1136.5,177.9 1137.5,179.1 1138.5,180.4 1139.5,181.7 1140.5,183.0 1141.5,184.4 1142.5,185.8 1143.5,187.3 1144.5,188.8 1145.5,190.3 1146.5,191.9 1147.5,193.6 1148.5,195.3 1149.5,197.0 1150.5,198.7 1151.5,200.5 1152.5,202.4 1153.5,204.2 1154.5,206.1 1155.5,208.1 1156.5,210.0 1157.5,212.0 1158.5,214.1 1159.5,216.2 1160.5,218.3 1161.5,220.4 1162.5,222.5 1163.5,224.7 1164.5,226.9 1165.5,229.2 1166.5,231.5 1167.5,233.7 1168.5,236.1 1169.5,238.4 1170.5,240.7 1171.5,243.1 1172.5,245.5 1173.5,247.9 1174.5,250.4 1175.5,252.8 1176.5,255.3 1177.5,257.7 1178.5,260.2 1179.5,262.7 1180.5,265.2 1181.5,267.8 1182.5,270.3 1183.5,272.8 1184.5,275.4 1185.5,277.9 1186.5,280.4 1187.5,283.0 1188.5,285.6 1189.5,288.1 1190.5,290.7 1191.5,293.2 1192.5,295.8 1193.5,298.3 1194.5,300.9 1195.5,303.4 1196.5,305.9 1197.5,308.4 1198.5,310.9 1199.5,313.4 1200.5,315.9 1201.5,318.3 1202.5,320.7 1203.5,323.2 1204.5,325.6 1205.5,328.0 1206.5,330.3 1207.5,332.7 1208.5,335.0 1209.5,337.4 1210.5,339.7 1211.5,342.0 1212.5,344.2 1213.5,346.5 1214.5,348.7 1215.5,350.9 1216.5,353.1 1217.5,355.3 1218.5,357.4 1219.5,359.6 1220.5,361.7 1221.5,363.7 1222.5,365.8 1223.5,367.8 1224.5,369.9 1225.5,371.8 1226.5,373.8 1227.5,375.7 1228.5,377.7 1229.5,379.6 1230.5,381.4 1231.5,383.3 1232.5,385.1 1233.5,386.9 1234.5,388.6 1235.5,390.3 1236.5,392.0 1237.5,393.7 1238.5,395.4 1239.5,397.0 1240.5,398.6 1241.5,400.1 1242.5,401.6 1243.5,403.1 1244.5,404.6 1245.5,406.0 1246.5,407.4 1247.5,408.7 1248.5,410.1 1249.5,411.3 1250.5,412.6 1251.5,413.8 1252.5,415.0 1253.5,416.1 1254.5,417.2 1255.5,418.3 1256.5,419.3 1257.5,420.3 1258.5,421.2 1259.5,422.1 1260.5,422.9 1261.5,423.8 1262.5,424.5 1263.5,425.2 1264.5,425.9 1265.5,426.5 1266.5,427.1 1267.5,427.6 1268.5,428.1 1269.5,428.5 1270.5,428.9 1271.5,429.2 1272.5,429.5 1273.5,429.7 1274.5,429.9 1275.5,430.0 1276.5,430.0 1277.5,430.0 1278.5,429.9 1279.5,429.8 1280.5,429.6 1281.5,429.3 1282.5,429.0 1283.5,428.6 1284.5,428.1 1285.5,427.6 1286.5,426.9 1287.5,426.3 1288.5,425.5 1289.5,424.7 1290.5,423.8 1291.5,422.8 1292.5,421.7 1293.5,420.6 1294.5,419.4 1295.5,418.1 1296.5,416.7 1297.5,415.3 1298.5,413.8 1299.5,412.2 1300.5,410.5 1301.5,408.8 1302.5,407.0 1303.5,405.1 1304.5,403.2 1305.5,401.1 1306.5,399.1 1307.5,396.9 1308.5,394.7 1309.5,392.4 1310.5,390.1 1311.5,387.7 1312.5,385.3 1313.5,382.8 1314.5,380.2 1315.5,377.6 1316.5,375.0 1317.5,372.3 1318.5,369.6 1319.5,366.8 1320.5,364.0 1321.5,361.2 1322.5,358.3 1323.5,355.4 1324.5,352.5 1325.5,349.6 1326.5,346.6 1327.5,343.7 1328.5,340.7 1329.5,337.7 1330.5,334.7 1331.5,331.7 1332.5,328.7 1333.5,325.7 1334.5,322.7 1335.5,319.7 1336.5,316.7 1337.5,313.8 1338.5,310.8 1339.5,307.9 1340.5,305.0 1341.5,302.1 1342.5,299.2 1343.5,296.4 1344.5,293.6 1345.5,290.8 1346.5,288.0 1347.5,285.2 1348.5,282.5 1349.5,279.8 1350.5,277.0 1351.5,274.4 1352.5,271.7 1353.5,269.0 1354.5,266.4 1355.5,263.8 1356.5,261.2 1357.5,258.7 1358.5,256.2 1359.5,253.7 1360.5,251.2 1361.5,248.7 1362.5,246.3 1363.5,243.9 1364.5,241.5 1365.5,239.2 1366.5,236.9 1367.5,234.6 1368.5,232.4 1369.5,230.2 1370.5,228.0 1371.5,225.8 1372.5,223.7 1373.5,221.6 1374.5,219.5 1375.5,217.5 1376.5,215.5 1377.5,213.5 1378.5,211.6 1379.5,209.7 1380.5,207.8 1381.5,206.0 1382.5,204.2 1383.5,202.4 1384.5,200.7 1385.5,199.0 1386.5,197.4 1387.5,195.7 1388.5,194.2 1389.5,192.6 1390.5,191.1 1391.5,189.6 1392.5,188.2 1393.5,186.8 1394.5,185.4 1395.5,184.1 1396.5,182.8 1397.5,181.6 1398.5,180.4 1399.5,179.2 1400.5,178.1 1401.5,177.0 1402.5,175.9 1403.5,174.9 1404.5,174.0 1405.5,173.0 1406.5,172.1 1407.5,171.3 1408.5,170.5" fill="none" stroke="#18b818" stroke-width="1.1"/></svg>
<div class="ylab" style="left:0px;width:27px;top:146.8px">7V</div>
<div class="ylab" style="left:0px;width:27px;top:167.7px">6V</div>
<div class="ylab" style="left:0px;width:27px;top:188.5px">5V</div>
<div class="ylab" style="left:0px;width:27px;top:209.4px">4V</div>
<div class="ylab" style="left:0px;width:27px;top:230.2px">3V</div>
<div class="ylab" style="left:0px;width:27px;top:251.1px">2V</div>
<div class="ylab" style="left:0px;width:27px;top:271.9px">1V</div>
<div class="ylab" style="left:0px;width:27px;top:292.8px">0V</div>
<div class="ylab" style="left:0px;width:27px;top:313.7px">-1V</div>
<div class="ylab" style="left:0px;width:27px;top:334.5px">-2V</div>
<div class="ylab" style="left:0px;width:27px;top:355.4px">-3V</div>
<div class="ylab" style="left:0px;width:27px;top:376.2px">-4V</div>
<div class="ylab" style="left:0px;width:27px;top:397.1px">-5V</div>
<div class="ylab" style="left:0px;width:27px;top:417.9px">-6V</div>
<div class="ylab" style="left:0px;width:27px;top:438.8px">-7V</div>
<div class="xlab" style="left:2.4px;width:60px;top:451px">914.8ms</div>
<div class="xlab" style="left:127.4px;width:60px;top:451px">915.2ms</div>
<div class="xlab" style="left:252.5px;width:60px;top:451px">915.6ms</div>
<div class="xlab" style="left:377.5px;width:60px;top:451px">916.0ms</div>
<div class="xlab" style="left:502.5px;width:60px;top:451px">916.4ms</div>
<div class="xlab" style="left:627.5px;width:60px;top:451px">916.8ms</div>
<div class="xlab" style="left:752.6px;width:60px;top:451px">917.2ms</div>
<div class="xlab" style="left:877.6px;width:60px;top:451px">917.6ms</div>
<div class="xlab" style="left:1002.6px;width:60px;top:451px">918.0ms</div>
<div class="xlab" style="left:1127.7px;width:60px;top:451px">918.4ms</div>
<div class="xlab" style="left:1252.7px;width:60px;top:451px">918.8ms</div>
<div class="xlab" style="left:1377.7px;width:60px;top:451px">919.2ms</div>
<div class="a" style="left:707px;top:139px;font-size:10px;line-height:11px;font-weight:bold;color:#22d022">V(out)</div>
<div class="a" style="left:7px;top:467px;width:534px;height:348px;background:#d4d0c8;border-top:1px solid #e8e4dc;border-left:1px solid #e8e4dc;border-right:1px solid #404040;border-bottom:1px solid #404040"></div>
<div class="a" style="left:8px;top:468px;width:532px;height:1px;background:#fff"></div>
<div class="a" style="left:8px;top:468px;width:1px;height:345px;background:#fff"></div>
<div class="a" style="left:539px;top:468px;width:1px;height:346px;background:#808080"></div>
<div class="a" style="left:8px;top:813px;width:532px;height:1px;background:#808080"></div>
<div class="a" style="left:11px;top:470px;width:527px;height:13px;background:linear-gradient(to right,#808080,#9a9a9a)"></div>
<svg style="left:12px;top:470px" width="12" height="13"><path d="M4,3 V10 M1,6.5 H4 M4,5 L9,1 M4,8 L9,12" stroke="#0000ff" stroke-width="1.6" fill="none"/></svg>
<div class="a" style="left:26px;top:471px;font-size:9.5px;line-height:12px;color:#c8c8c8;letter-spacing:0.15px">bokarev_07.asc</div>
<div class="a" style="left:11px;top:483px;width:527px;height:2px;background:#e8e4dc"></div>
<div class="a" style="left:11px;top:485px;width:527px;height:326px;background:#bebebe;border-top:1px solid #404040;border-left:1px solid #404040"></div>
<svg style="left:0;top:0" width="1440" height="900" viewBox="0 0 1440 900"><defs><clipPath id="schclip"><rect x="12" y="486" width="526" height="325"/></clipPath></defs><g clip-path="url(#schclip)"><path d="M110.7,516.4 L379.6,516.4 M164,807.8 L379.6,807.8 M110.7,516.4 L110.7,527.6 M110.7,545.1 L110.7,555.5 M110.7,583.5 L110.7,606.9 M110.7,624.8 L110.7,635.6 M110.7,591 L137,591 L137,569.4 M123.4,569.4 L251.9,569.4 M164,516.4 L164,527.6 M164,545.1 L164,555.5 M164,551.3 L185.2,551.3 L185.2,576.5 M185.2,593.6 L185.2,600.2 M164,583.5 L164,629.4 M164,600.2 L203.5,600.2 L203.5,615.2 M203.5,619.5 L203.5,635.6 M164,646.3 L164,683.7 M164,710.9 L164,774.5 M164,792.7 L164,807.8 M164,662.3 L205.3,662.3 M223.2,662.3 L322.2,662.3 M199.1,662.3 L199.1,688.3 L214.6,688.3 M217.4,688.3 L234.1,688.3 L234.1,662.3 M66.3,717 L66.3,697.2 L95.5,697.2 M98.3,697.2 L150.6,697.2 M119.1,697.2 L119.1,713.2 M119.1,730.4 L119.1,750.9 M66.3,734 L66.3,750.9 M164,719.7 L260.5,719.7 M242.6,719.7 L242.6,688.3 L258.2,688.3 M261,688.3 L300.5,688.3 M273.7,706.1 L300.5,706.1 L300.5,604.5 M273.7,731.9 L273.7,774.2 M273.7,792.4 L273.7,807.8 M273.7,750.6 L308.4,750.6 M265.1,516.4 L265.1,527.6 M265.1,545.1 L265.1,555.5 M265.1,582.8 L265.1,592 M265.1,599.9 L265.1,628.3 M265.1,632 L265.1,662.3 M234.3,569.2 L234.3,586.6 L243.3,586.6 M250.3,586.6 L265.1,586.6 M265.1,604.5 L275.2,604.5 M294.3,604.5 L308.6,604.5 M322.2,516.4 L322.2,591.3 M322.2,617.8 L322.2,629.4 M322.2,646.8 L322.2,736.9 M322.2,764.1 L322.2,774.2 M322.2,792.4 L322.2,807.8 M322.2,671.1 L331.1,671.1 M322.2,688.4 L342.1,688.4 M359.6,688.4 L379.6,688.4 M379.6,697.2 L402.2,697.2 L402.2,710.8" stroke="#1c1cf0" stroke-width="1.15" fill="none"/><g fill="#1c1cf0"><rect x="162.7" y="515.1" width="2.6" height="2.6"/><rect x="263.8" y="515.1" width="2.6" height="2.6"/><rect x="320.9" y="515.1" width="2.6" height="2.6"/><rect x="109.4" y="589.7" width="2.6" height="2.6"/><rect x="135.7" y="568.1" width="2.6" height="2.6"/><rect x="144.7" y="568.1" width="2.6" height="2.6"/><rect x="233.0" y="567.9000000000001" width="2.6" height="2.6"/><rect x="162.7" y="550.0" width="2.6" height="2.6"/><rect x="162.7" y="598.9000000000001" width="2.6" height="2.6"/><rect x="183.89999999999998" y="598.9000000000001" width="2.6" height="2.6"/><rect x="162.7" y="661.0" width="2.6" height="2.6"/><rect x="162.7" y="718.4000000000001" width="2.6" height="2.6"/><rect x="197.79999999999998" y="661.0" width="2.6" height="2.6"/><rect x="232.79999999999998" y="661.0" width="2.6" height="2.6"/><rect x="263.4" y="661.0" width="2.6" height="2.6"/><rect x="320.9" y="661.0" width="2.6" height="2.6"/><rect x="117.8" y="695.9000000000001" width="2.6" height="2.6"/><rect x="241.29999999999998" y="718.4000000000001" width="2.6" height="2.6"/><rect x="299.2" y="687.0" width="2.6" height="2.6"/><rect x="299.2" y="603.2" width="2.6" height="2.6"/><rect x="272.4" y="749.3000000000001" width="2.6" height="2.6"/><rect x="272.4" y="806.5" width="2.6" height="2.6"/><rect x="263.8" y="585.3000000000001" width="2.6" height="2.6"/><rect x="263.8" y="603.2" width="2.6" height="2.6"/><rect x="320.9" y="669.8000000000001" width="2.6" height="2.6"/><rect x="320.9" y="687.1" width="2.6" height="2.6"/><rect x="320.9" y="806.5" width="2.6" height="2.6"/><rect x="378.3" y="687.1" width="2.6" height="2.6"/><rect x="378.3" y="695.9000000000001" width="2.6" height="2.6"/></g><g stroke="#26268a" stroke-width="1.1" fill="none"><rect x="106.8" y="527.6" width="7.8" height="17.5"/><rect x="160.1" y="527.6" width="7.8" height="17.5"/><rect x="261.20000000000005" y="527.6" width="7.8" height="17.5"/><rect x="106.8" y="606.9" width="7.8" height="17.899999999999977"/><rect x="181.29999999999998" y="576.5" width="7.8" height="17.100000000000023"/><rect x="160.1" y="629.4" width="7.8" height="16.899999999999977"/><rect x="160.1" y="774.5" width="7.8" height="18.200000000000045"/><rect x="269.8" y="774.2" width="7.8" height="18.199999999999932"/><rect x="318.3" y="774.2" width="7.8" height="18.199999999999932"/><rect x="318.3" y="629.4" width="7.8" height="17.399999999999977"/><rect x="115.19999999999999" y="713.2" width="7.8" height="17.199999999999932"/><rect x="205.3" y="658.3" width="17.899999999999977" height="8"/><rect x="275.2" y="600.5" width="19.100000000000023" height="8"/><rect x="342.1" y="684.4" width="17.5" height="8"/><path d="M105.7,635.6 H115.7 L110.7,640.6 Z" fill="none"/><path d="M198.5,635.6 H208.5 L203.5,640.6 Z" fill="none"/><path d="M61.3,750.9 H71.3 L66.3,755.9 Z" fill="none"/><path d="M114.1,750.9 H124.1 L119.1,755.9 Z" fill="none"/><path d="M397.2,710.8 H407.2 L402.2,715.8 Z" fill="none"/><path d="M123.4,559.9 V578.9" stroke-width="1.6"/><path d="M123.4,564.9 L110.7,555.5 M123.4,573.9 L110.7,583.5"/><path d="M118.9,559.3 L113.4,557.5 L116.7,562.2 Z" fill="none" stroke-width="0.9"/><path d="M150.3,559.9 V578.9" stroke-width="1.6"/><path d="M150.3,564.9 L164,555.5 M150.3,573.9 L164,583.5"/><path d="M157.5,562.2 L161.0,557.6 L155.4,559.2 Z" fill="none" stroke-width="0.9"/><path d="M251.9,559.9 V578.9" stroke-width="1.6"/><path d="M251.9,564.9 L265.1,555.5 M251.9,573.9 L265.1,582.8"/><path d="M258.8,562.2 L262.3,557.5 L256.7,559.2 Z" fill="none" stroke-width="0.9"/><path d="M308.6,595.0 V614.0" stroke-width="1.6"/><path d="M308.6,600.0 L322.2,591.3 M308.6,609.0 L322.2,617.8"/><path d="M311.0,612.7 L316.6,614.1 L312.9,609.7 Z" fill="none" stroke-width="0.9"/><path d="M150.6,687.7 V706.7" stroke-width="1.6"/><path d="M150.6,692.7 L164,683.7 M150.6,701.7 L164,710.9"/><path d="M157.6,690.2 L161.1,685.6 L155.6,687.2 Z" fill="none" stroke-width="0.9"/><path d="M260.5,710.0 V729.0" stroke-width="1.6"/><path d="M260.5,715.0 L273.7,706.1 M260.5,724.0 L273.7,731.9"/><path d="M262.7,727.4 L268.4,728.7 L264.6,724.3 Z" fill="none" stroke-width="0.9"/><path d="M308.4,741.1 V760.1" stroke-width="1.6"/><path d="M308.4,746.1 L322.2,736.9 M308.4,755.1 L322.2,764.1"/><path d="M310.8,758.8 L316.4,760.3 L312.8,755.8 Z" fill="none" stroke-width="0.9"/><path d="M243.3,582.3 L250.3,586.6 L243.3,590.9 Z M250.3,582 V591.2" fill="none"/><path d="M260.8,599.9 L269.4,599.9 L265.1,592 Z M260.8,592 H269.4" fill="none"/><path d="M198.5,615.7 H208.5 M198.5,620 Q203.5,617.5 208.5,620" stroke-width="1.4" fill="none"/><path d="M260.1,628.6 H270.1 M260.1,632.7 Q265.1,630.2 270.1,632.7" stroke-width="1.4" fill="none"/><path d="M214.6,683.3 V693.3 M217.4,683.3 V693.3" stroke-width="1.4"/><path d="M258.2,683.3 V693.3 M261,683.3 V693.3" stroke-width="1.4"/><path d="M95.5,692.2 V702.2 M98.3,692.2 V702.2" stroke-width="1.4"/><circle cx="379.6" cy="615.4" r="9.2" fill="none"/><circle cx="379.6" cy="752" r="9.0" fill="none"/><circle cx="66.3" cy="725.5" r="8.5" fill="none"/><path d="M379.6,516.4 V606.2 M379.6,624.6 V743 M379.6,761 V807.8" stroke="#1c1cf0" stroke-width="1.15"/><path d="M377,610.5 H382 M377,621 H382 M379.6,618.5 V623.5 M377,747 H382 M377,757.5 H382 M379.6,755 V760 M63.8,722 H68.8 M66.3,719.5 V724.5 M63.8,731 H68.8" stroke-width="1.1"/><path d="M331.1,667 H344.5 L348.9,671.1 L344.5,675.2 H331.1 Z" fill="none"/></g><g font-family="Liberation Sans" font-size="7.3" fill="#222222"><text transform="translate(115.7,533.8) scale(0.88,1)">R12</text><text transform="translate(115.7,544.8) scale(0.88,1)">2k</text><text transform="translate(168,533.8) scale(0.88,1)">R2</text><text transform="translate(168,544.8) scale(0.88,1)">2k</text><text transform="translate(270.5,533.8) scale(0.88,1)">R10</text><text transform="translate(270.5,544.8) scale(0.88,1)">180</text><text transform="translate(97,564.8) scale(0.88,1)">MP37</text><text transform="translate(104,575.8) scale(0.88,1)">Q7</text><text transform="translate(161,564.8) scale(0.88,1)">MP37</text><text transform="translate(161,575.8) scale(0.88,1)">Q5</text><text transform="translate(262,566.8) scale(0.88,1)">AC127</text><text transform="translate(262,576.8) scale(0.88,1)">Q6</text><text transform="translate(190,580.8) scale(0.88,1)">R14</text><text transform="translate(190,591.3) scale(0.88,1)">4.7k</text><text transform="translate(115.7,610.8) scale(0.88,1)">R13</text><text transform="translate(115.7,621.3) scale(0.88,1)">6k</text><text transform="translate(193,614.8) scale(0.88,1)">C3</text><text transform="translate(186,626.8) scale(0.88,1)">220µ</text><text transform="translate(271,590.8) scale(0.88,1)">D1</text><text transform="translate(284,590.8) scale(0.88,1)">D311A</text><text transform="translate(227,597.8) scale(0.88,1)">D2</text><text transform="translate(238,597.8) scale(0.88,1)">D311A</text><text transform="translate(280,600.8) scale(0.88,1)">R9</text><text transform="translate(279,614.8) scale(0.88,1)">150</text><text transform="translate(327,603.8) scale(0.88,1)">Q4</text><text transform="translate(327,613.8) scale(0.88,1)">2N242</text><text transform="translate(328,633.8) scale(0.88,1)">R8</text><text transform="translate(328,644.8) scale(0.88,1)">1</text><text transform="translate(365,606.8) scale(0.88,1)">V1</text><text transform="translate(366,628.8) scale(0.88,1)">15</text><text transform="translate(254,625.8) scale(0.88,1)">C4</text><text transform="translate(246,638.8) scale(0.88,1)">470µ</text><text transform="translate(168.6,635.8) scale(0.88,1)">R3</text><text transform="translate(168.6,645.8) scale(0.88,1)">200</text><text transform="translate(209,655.8) scale(0.88,1)">R4</text><text transform="translate(208,671.8) scale(0.88,1)">1.5k</text><text transform="translate(212,681.8) scale(0.88,1)">C2</text><text transform="translate(208,698.8) scale(0.88,1)">100p</text><text transform="translate(255,681.8) scale(0.88,1)">C1</text><text transform="translate(255,698.8) scale(0.88,1)">51p</text><text transform="translate(161,693.8) scale(0.88,1)">MP37</text><text transform="translate(161,704.8) scale(0.88,1)">Q1</text><text transform="translate(279,717.8) scale(0.88,1)">Q2</text><text transform="translate(279,726.8) scale(0.88,1)">AC151</text><text transform="translate(328,747.8) scale(0.88,1)">Q3</text><text transform="translate(328,756.8) scale(0.88,1)">2N242</text><text transform="translate(279,780.8) scale(0.88,1)">R6</text><text transform="translate(279,791.3) scale(0.88,1)">43</text><text transform="translate(328,780.8) scale(0.88,1)">R7</text><text transform="translate(328,791.3) scale(0.88,1)">1</text><text transform="translate(365,742.8) scale(0.88,1)">V2</text><text transform="translate(366,764.8) scale(0.88,1)">15</text><text transform="translate(346,682.3) scale(0.88,1)">R11</text><text transform="translate(350,697.8) scale(0.88,1)">8</text><text transform="translate(93,690.8) scale(0.88,1)">C5</text><text transform="translate(90,706.8) scale(0.88,1)">1.5µ</text><text transform="translate(72,717.8) scale(0.88,1)">V3</text><text transform="translate(124,720.8) scale(0.88,1)">R1</text><text transform="translate(124,730.8) scale(0.88,1)">30k</text><text transform="translate(72,739.8) scale(0.88,1)">SINE(0 1 1000)</text><text transform="translate(90,763.8) scale(0.88,1)">.tran 1</text><text transform="translate(88,774.8) scale(0.88,1)">.four 1000 20 V(out)</text><text transform="translate(168,780.8) scale(0.88,1)">R5</text><text transform="translate(168,790.8) scale(0.88,1)">680</text><text transform="translate(332.5,673.3) scale(0.88,1)">OUT</text></g></g></svg>
<div class="a" style="left:539px;top:466px;width:878px;height:349px;background:#d4d0c8;border-top:1px solid #e8e4dc;border-left:1px solid #e8e4dc;border-right:1px solid #404040;border-bottom:1px solid #404040"></div>
<div class="a" style="left:540px;top:467px;width:876px;height:1px;background:#fff"></div>
<div class="a" style="left:540px;top:467px;width:1px;height:346px;background:#fff"></div>
<div class="a" style="left:1415px;top:467px;width:1px;height:347px;background:#808080"></div>
<div class="a" style="left:540px;top:813px;width:876px;height:1px;background:#808080"></div>
<div class="a" style="left:542px;top:469px;width:873px;height:13px;background:linear-gradient(to right,#0a246a,#a6caf0)"></div>
<svg style="left:543px;top:469px" width="12" height="13"><rect x="0" y="0" width="12" height="13" fill="#c8c8c8"/><path d="M1,7 L3,6 L5,8 L7,6 L9,7 L11,6" stroke="#d02020" fill="none"/><path d="M1,11 L4,10 L7,11 L11,10" stroke="#2020c0" fill="none"/></svg>
<div class="a" style="left:556px;top:470px;font-size:9.5px;line-height:12px;color:#f0f0f0;letter-spacing:0.15px">bokarev_07.fft</div>
<div class="wbtn" style="left:1376px;top:470px;width:11px;height:11px"></div>
<div class="wbtn" style="left:1388px;top:470px;width:12px;height:11px"></div>
<div class="wbtn" style="left:1401px;top:470px;width:13px;height:11px"></div>
<div class="a" style="left:1379px;top:477px;width:5px;height:2px;background:#000"></div>
<div class="a" style="left:1390px;top:472px;width:8px;height:7px;border:1px solid #000;border-top-width:2px"></div>
<svg style="left:1403px;top:471px" width="9" height="9"><path d="M1.5,1.5 L7.5,7.5 M7.5,1.5 L1.5,7.5" stroke="#000" stroke-width="1.5"/></svg>
<div class="a" style="left:542px;top:482px;width:872px;height:2px;background:#e8e4dc"></div>
<div class="a" style="left:543px;top:484px;width:870px;height:329px;background:#000"></div>
<svg style="left:0;top:0" width="1440" height="900" viewBox="0 0 1440 900"><g stroke="#a0a0a0" stroke-width="1" fill="none" shape-rendering="crispEdges"><rect x="580.5" y="497.5" width="792" height="296"/><line x1="575" y1="498.5" x2="580.5" y2="498.5"/><line x1="575" y1="535.5" x2="580.5" y2="535.5"/><line x1="575" y1="572.5" x2="580.5" y2="572.5"/><line x1="575" y1="609.5" x2="580.5" y2="609.5"/><line x1="575" y1="646.5" x2="580.5" y2="646.5"/><line x1="575" y1="683.5" x2="580.5" y2="683.5"/><line x1="575" y1="720.5" x2="580.5" y2="720.5"/><line x1="575" y1="757.5" x2="580.5" y2="757.5"/><line x1="575" y1="794.5" x2="580.5" y2="794.5"/><line x1="598.5" y1="793.5" x2="598.5" y2="796.5"/><line x1="648.5" y1="793.5" x2="648.5" y2="796.5"/><line x1="686.5" y1="793.5" x2="686.5" y2="796.5"/><line x1="717.5" y1="793.5" x2="717.5" y2="796.5"/><line x1="744.5" y1="793.5" x2="744.5" y2="796.5"/><line x1="767.5" y1="793.5" x2="767.5" y2="796.5"/><line x1="787.5" y1="793.5" x2="787.5" y2="796.5"/><line x1="805.5" y1="793.5" x2="805.5" y2="799.5"/><line x1="924.5" y1="793.5" x2="924.5" y2="796.5"/><line x1="993.5" y1="793.5" x2="993.5" y2="796.5"/><line x1="1043.5" y1="793.5" x2="1043.5" y2="796.5"/><line x1="1081.5" y1="793.5" x2="1081.5" y2="796.5"/><line x1="1112.5" y1="793.5" x2="1112.5" y2="796.5"/><line x1="1139.5" y1="793.5" x2="1139.5" y2="796.5"/><line x1="1162.5" y1="793.5" x2="1162.5" y2="796.5"/><line x1="1182.5" y1="793.5" x2="1182.5" y2="796.5"/><line x1="1200.5" y1="793.5" x2="1200.5" y2="799.5"/><line x1="1319.5" y1="793.5" x2="1319.5" y2="796.5"/></g><polyline points="580.6,705.7 586.6,685.8 592.6,696.7 598.5,704.4 604.1,690.5 609.5,687.4 614.8,689.7 619.9,702.1 624.9,698.6 629.7,697.5 634.4,682.0 639.0,693.3 643.5,684.7 647.8,692.3 652.0,696.9 656.2,690.7 660.2,693.0 664.2,685.1 668.0,691.8 671.8,687.1 675.5,685.1 679.1,688.6 682.6,707.5 686.1,705.1 689.5,693.8 692.8,682.3 696.1,703.8 699.3,701.9 702.4,709.2 705.5,690.3 708.6,706.7 711.6,695.0 714.5,696.0 717.4,692.3 720.2,699.6 723.0,687.9 725.7,688.0 728.4,702.7 731.1,689.5 733.7,706.8 736.3,689.7 738.8,688.2 741.3,706.3 743.8,688.0 746.2,689.3 748.6,692.7 751.0,692.6 753.3,702.6 755.6,686.3 757.9,692.8 760.2,694.0 762.4,696.5 764.6,704.8 766.7,719.2 768.9,697.7 771.0,706.6 773.0,691.3 775.1,687.2 777.1,701.6 779.1,691.7 781.1,698.5 783.1,702.3 785.0,692.0 786.9,693.6 788.8,697.7 790.7,697.7 792.6,693.5 794.4,692.6 796.2,699.8 798.0,702.5 799.8,685.3 801.5,707.8 803.3,697.2 805.0,511.0 806.7,545.0 808.4,600.0 810.1,696.3 811.7,697.3 813.4,685.5 815.0,698.7 816.6,709.4 818.2,694.5 819.8,692.4 821.4,697.3 822.9,694.9 824.4,705.1 826.0,693.2 827.5,689.1 829.0,702.0 830.5,705.8 831.9,702.6 833.4,710.7 834.8,695.8 836.3,714.2 837.7,691.5 839.1,695.0 840.5,693.1 841.9,687.3 843.3,687.5 844.6,708.4 846.0,691.8 847.3,690.5 848.7,683.4 850.0,699.3 851.3,704.6 852.6,696.4 853.9,698.6 855.2,705.3 856.5,711.2 857.7,685.4 859.0,704.8 860.3,698.3 861.5,711.8 862.7,698.8 863.9,696.2 865.2,697.0 866.4,700.9 867.6,691.4 868.7,701.7 869.9,695.1 871.1,693.5 872.3,703.2 873.4,687.0 874.6,696.4 875.7,701.7 876.8,687.8 878.0,694.2 879.1,689.8 880.2,687.4 881.3,687.9 882.4,698.9 883.5,705.7 884.6,690.8 885.6,696.1 886.7,689.6 887.8,707.4 888.8,706.7 889.9,702.1 890.9,696.7 891.9,690.8 893.0,695.7 894.0,702.6 895.0,701.2 896.0,695.4 897.0,691.9 898.0,695.1 899.0,708.4 900.0,693.5 901.0,720.7 902.0,687.2 902.9,695.7 903.9,705.2 904.9,701.9 905.8,696.7 906.8,701.7 907.7,693.5 908.7,701.1 909.6,691.7 910.5,702.6 911.5,699.1 912.4,698.4 913.3,693.3 914.2,693.5 915.1,718.1 916.0,706.1 916.9,687.9 917.8,697.0 918.7,701.1 919.6,693.0 920.4,697.5 921.3,709.2 922.2,707.9 923.0,709.2 923.9,564.4 924.8,628.5 925.6,695.6 926.5,707.8 927.3,712.4 928.1,691.3 929.0,700.2 929.8,699.1 930.6,704.6 931.5,703.3 932.3,725.9 933.1,724.2 933.9,686.2 934.7,690.2 935.5,699.6 936.3,705.5 937.1,694.1 937.9,700.9 938.7,699.1 939.5,727.2 940.3,699.1 941.0,692.4 941.8,694.6 942.6,700.4 943.3,694.5 944.1,694.3 944.9,692.7 945.6,700.5 946.4,698.6 947.1,702.5 947.9,689.8 948.6,693.8 949.4,696.8 950.1,685.8 950.8,688.9 951.6,700.2 952.3,700.4 953.0,694.7 953.7,693.5 954.5,684.2 955.2,696.1 955.9,702.0 956.6,696.1 957.3,698.9 958.0,699.1 958.7,694.7 959.4,719.0 960.1,697.1 960.8,693.0 961.5,702.9 962.2,729.2 962.9,691.8 963.6,700.3 964.2,687.0 964.9,700.2 965.6,702.2 966.3,713.4 966.9,704.4 967.6,702.2 968.3,695.3 968.9,689.7 969.6,694.9 970.2,701.9 970.9,698.3 971.5,696.7 972.2,684.8 972.8,701.3 973.5,703.5 974.1,714.0 974.8,705.5 975.4,716.9 976.0,698.2 976.7,689.9 977.3,689.4 977.9,705.8 978.5,689.1 979.2,682.8 979.8,704.0 980.4,696.3 981.0,741.8 981.6,697.0 982.2,699.4 982.8,690.6 983.5,714.1 984.1,718.9 984.7,703.4 985.3,728.3 985.9,700.7 986.5,701.6 987.1,692.9 987.6,698.2 988.2,698.0 988.8,706.7 989.4,696.4 990.0,696.0 990.6,699.0 991.2,688.6 991.7,697.5 992.3,693.5 992.9,696.3 993.5,569.5 994.0,632.2 994.6,714.9 995.2,686.6 995.7,707.8 996.3,700.0 996.9,698.3 997.4,699.7 998.0,696.6 998.5,693.5 999.1,698.4 999.6,701.2 1000.2,696.4 1000.7,695.7 1001.3,707.1 1001.8,714.0 1002.4,692.3 1002.9,692.3 1003.5,698.8 1004.0,695.8 1004.5,703.4 1005.1,704.7 1005.6,719.7 1006.1,703.0 1006.7,712.5 1007.2,685.4 1007.7,695.7 1008.2,704.6 1008.8,699.8 1009.3,702.5 1009.8,707.9 1010.3,694.8 1010.8,707.3 1011.4,704.1 1011.9,704.1 1012.4,699.8 1012.9,713.0 1013.4,699.1 1013.9,703.8 1014.4,684.4 1014.9,702.9 1015.4,705.1 1015.9,694.9 1016.4,718.3 1016.9,698.6 1017.4,700.7 1017.9,705.1 1018.4,709.2 1018.9,689.0 1019.4,706.8 1019.9,707.1 1020.4,695.3 1020.9,716.2 1021.4,689.4 1021.9,708.8 1022.3,691.0 1022.8,719.0 1023.3,700.8 1023.8,699.9 1024.3,713.8 1024.7,695.7 1025.2,699.4 1025.7,698.3 1026.2,702.4 1026.6,700.3 1027.1,695.4 1027.6,710.5 1028.0,709.8 1028.5,690.1 1029.0,698.4 1029.4,696.8 1029.9,697.4 1030.4,743.1 1030.8,696.2 1031.3,702.3 1031.7,702.5 1032.2,703.8 1032.7,702.4 1033.1,702.0 1033.6,706.2 1034.0,701.0 1034.5,691.9 1034.9,700.4 1035.4,701.8 1035.8,720.4 1036.3,707.1 1036.7,708.1 1037.1,690.3 1037.6,708.8 1038.0,689.8 1038.5,693.6 1038.9,705.5 1039.3,691.3 1039.8,694.4 1040.2,699.1 1040.7,693.5 1041.1,708.5 1041.5,686.8 1042.0,688.5 1042.4,694.2 1042.8,586.6 1043.2,637.7 1043.7,705.1 1044.1,697.7 1044.5,693.2 1044.9,733.0 1045.4,693.1 1045.8,699.6 1046.2,688.8 1046.6,696.9 1047.0,699.6 1047.5,700.6 1047.9,692.2 1048.3,710.1 1048.7,698.5 1049.1,729.3 1049.5,704.0 1049.9,708.5 1050.3,696.8 1050.7,692.3 1051.1,698.7 1051.5,723.6 1051.9,707.7 1052.3,699.8 1052.7,693.5 1053.1,699.4 1053.5,718.8 1053.9,706.0 1054.3,701.4 1054.7,701.3 1055.1,712.1 1055.5,696.6 1055.9,701.5 1056.3,702.2 1056.7,703.7 1057.1,691.2 1057.4,697.0 1057.8,694.6 1058.2,697.2 1058.6,694.5 1059.0,717.1 1059.4,695.7 1059.7,687.5 1060.1,700.1 1060.5,694.0 1060.9,705.2 1061.2,718.1 1061.6,693.6 1062.0,712.4 1062.4,701.9 1062.7,697.5 1063.1,699.8 1063.5,712.8 1063.8,701.1 1064.2,707.8 1064.6,694.3 1064.9,705.5 1065.3,702.4 1065.7,704.0 1066.0,714.1 1066.4,701.0 1066.7,695.5 1067.1,706.8 1067.5,702.7 1067.8,689.7 1068.2,750.6 1068.5,698.3 1068.9,691.6 1069.2,702.3 1069.6,707.8 1069.9,696.0 1070.3,704.7 1070.6,714.6 1071.0,695.2 1071.3,704.9 1071.7,701.3 1072.0,699.8 1072.4,700.0 1072.7,694.0 1073.1,698.2 1073.4,702.0 1073.7,704.0 1074.1,698.5 1074.4,701.7 1074.8,710.6 1075.1,685.6 1075.4,703.5 1075.8,700.4 1076.1,693.0 1076.4,702.7 1076.8,695.1 1077.1,694.6 1077.4,694.6 1077.8,694.4 1078.1,694.4 1078.4,708.7 1078.7,699.0 1079.1,706.0 1079.4,695.3 1079.7,701.6 1080.0,700.3 1080.4,701.6 1080.7,695.0 1081.0,592.0 1081.3,642.3 1081.7,712.4 1082.0,693.0 1082.3,704.8 1082.6,714.4 1082.9,708.9 1083.3,690.4 1083.6,698.4 1083.9,694.4 1084.2,701.1 1084.5,697.8 1084.8,705.4 1085.1,691.5 1085.4,694.6 1085.8,695.5 1086.1,706.1 1086.4,689.7 1086.7,685.8 1087.0,696.1 1087.3,691.9 1087.6,699.7 1087.9,700.3 1088.2,718.0 1088.5,693.8 1088.8,697.4 1089.1,696.7 1089.4,699.3 1089.7,709.0 1090.0,703.3 1090.3,691.9 1090.6,697.1 1090.9,696.0 1091.2,689.0 1091.5,707.8 1091.8,698.6 1092.1,697.4 1092.4,708.1 1092.7,693.0 1093.0,691.1 1093.3,719.8 1093.6,697.8 1093.9,710.4 1094.2,708.3 1094.5,705.1 1094.7,697.3 1095.0,699.8 1095.3,696.1 1095.6,707.4 1095.9,699.2 1096.2,716.6 1096.5,703.4 1096.7,693.9 1097.0,697.4 1097.3,709.7 1097.6,712.5 1097.9,703.5 1098.2,697.5 1098.4,717.0 1098.7,697.4 1099.0,708.1 1099.3,690.5 1099.6,687.9 1099.8,700.4 1100.1,690.1 1100.4,702.4 1100.7,702.9 1100.9,707.1 1101.2,697.9 1101.5,714.0 1101.8,700.5 1102.0,689.7 1102.3,697.8 1102.6,691.5 1102.8,701.6 1103.1,706.7 1103.4,701.2 1103.7,704.6 1103.9,693.1 1104.2,694.6 1104.5,699.9 1104.7,699.4 1105.0,695.7 1105.3,702.2 1105.5,702.0 1105.8,695.4 1106.1,712.8 1106.3,708.7 1106.6,691.5 1106.8,705.4 1107.1,699.6 1107.4,701.3 1107.6,706.1 1107.9,693.5 1108.1,698.4 1108.4,706.4 1108.7,687.6 1108.9,691.2 1109.2,689.2 1109.4,697.6 1109.7,707.7 1109.9,693.6 1110.2,703.6 1110.5,711.4 1110.7,693.6 1111.0,693.7 1111.2,721.0 1111.5,695.2 1111.7,697.4 1112.0,690.6 1112.2,689.0 1112.5,630.0 1112.7,664.4 1113.0,701.2 1113.2,698.5 1113.5,698.3 1113.7,698.6 1114.0,700.5 1114.2,697.1 1114.5,708.9 1114.7,708.4 1114.9,698.9 1115.2,695.9 1115.4,694.1 1115.7,699.2 1115.9,697.5 1116.2,693.3 1116.4,689.6 1116.7,710.5 1116.9,705.6 1117.1,703.7 1117.4,688.1 1117.6,711.0 1117.9,696.9 1118.1,710.8 1118.3,690.3 1118.6,728.2 1118.8,697.3 1119.0,686.2 1119.3,704.9 1119.5,705.9 1119.7,701.8 1120.0,694.0 1120.2,697.1 1120.5,714.8 1120.7,717.7 1120.9,696.2 1121.2,693.9 1121.4,713.5 1121.6,699.5 1121.8,690.7 1122.1,720.9 1122.3,697.2 1122.5,714.6 1122.8,697.7 1123.0,705.4 1123.2,693.9 1123.5,701.6 1123.7,724.2 1123.9,722.2 1124.1,692.6 1124.4,701.0 1124.6,689.4 1124.8,695.6 1125.0,716.4 1125.3,700.4 1125.5,695.8 1125.7,697.9 1125.9,709.6 1126.2,701.3 1126.4,706.6 1126.6,701.3 1126.8,708.3 1127.0,697.4 1127.3,683.6 1127.5,703.0 1127.7,693.0 1127.9,706.2 1128.1,700.3 1128.4,719.1 1128.6,694.5 1128.8,694.0 1129.0,714.2 1129.2,702.9 1129.4,691.5 1129.7,705.1 1129.9,699.1 1130.1,689.2 1130.3,690.5 1130.5,683.8 1130.7,712.6 1131.0,688.7 1131.2,702.6 1131.4,701.2 1131.6,714.2 1131.8,712.4 1132.0,697.8 1132.2,693.7 1132.4,695.9 1132.6,695.9 1132.9,700.3 1133.1,713.9 1133.3,703.6 1133.5,705.0 1133.7,711.9 1133.9,711.2 1134.1,702.9 1134.3,690.9 1134.5,699.3 1134.7,699.0 1134.9,706.1 1135.1,699.2 1135.4,714.2 1135.6,719.3 1135.8,704.0 1136.0,694.1 1136.2,696.5 1136.4,699.3 1136.6,687.6 1136.8,702.1 1137.0,688.8 1137.2,698.0 1137.4,690.9 1137.6,702.9 1137.8,714.4 1138.0,697.4 1138.2,710.6 1138.4,701.6 1138.6,697.3 1138.8,604.4 1139.0,649.1 1139.2,709.4 1139.4,704.9 1139.6,691.2 1139.8,698.2 1140.0,705.3 1140.2,693.5 1140.4,692.8 1140.6,697.9 1140.8,691.9 1141.0,695.4 1141.2,701.3 1141.4,716.7 1141.5,691.9 1141.7,700.1 1141.9,688.1 1142.1,698.7 1142.3,718.4 1142.5,697.0 1142.7,691.2 1142.9,712.2 1143.1,690.8 1143.3,695.9 1143.5,692.8 1143.7,706.4 1143.9,716.9 1144.0,689.0 1144.2,699.6 1144.4,695.9 1144.6,715.6 1144.8,694.5 1145.0,708.2 1145.2,710.5 1145.4,697.9 1145.6,700.3 1145.7,689.1 1145.9,698.0 1146.1,688.1 1146.3,688.5 1146.5,697.4 1146.7,697.3 1146.9,706.2 1147.0,695.9 1147.2,709.6 1147.4,687.7 1147.6,689.8 1147.8,698.9 1148.0,700.4 1148.1,725.5 1148.3,691.3 1148.5,708.3 1148.7,688.6 1148.9,720.3 1149.1,714.0 1149.2,706.8 1149.4,697.1 1149.6,700.1 1149.8,709.3 1150.0,702.9 1150.1,712.1 1150.3,702.9 1150.5,695.3 1150.7,705.9 1150.9,720.4 1151.0,701.0 1151.2,695.5 1151.4,690.6 1151.6,694.2 1151.7,705.6 1151.9,703.6 1152.1,701.9 1152.3,695.0 1152.4,691.9 1152.6,700.6 1152.8,705.6 1153.0,698.4 1153.1,710.6 1153.3,701.8 1153.5,687.4 1153.7,696.5 1153.8,689.3 1154.0,707.2 1154.2,715.9 1154.4,717.1 1154.5,694.2 1154.7,691.5 1154.9,696.0 1155.1,703.5 1155.2,692.3 1155.4,699.6 1155.6,703.1 1155.7,707.5 1155.9,690.1 1156.1,707.6 1156.2,696.8 1156.4,712.5 1156.6,701.9 1156.8,704.2 1156.9,696.7 1157.1,691.5 1157.3,712.2 1157.4,703.5 1157.6,692.6 1157.8,697.7 1157.9,719.9 1158.1,701.2 1158.3,702.8 1158.4,698.3 1158.6,695.0 1158.8,708.0 1158.9,699.1 1159.1,689.0 1159.3,706.3 1159.4,727.9 1159.6,705.9 1159.7,714.8 1159.9,694.1 1160.1,696.2 1160.2,693.3 1160.4,701.4 1160.6,701.1 1160.7,688.1 1160.9,696.9 1161.1,705.5 1161.2,693.2 1161.4,693.0 1161.5,697.1 1161.7,609.0 1161.9,666.5 1162.0,702.7 1162.2,703.1 1162.3,707.0 1162.5,691.7 1162.7,694.2 1162.8,709.7 1163.0,705.3 1163.1,700.0 1163.3,695.3 1163.5,708.2 1163.6,705.2 1163.8,691.1 1163.9,711.9 1164.1,697.0 1164.2,700.8 1164.4,696.6 1164.6,692.1 1164.7,706.0 1164.9,698.2 1165.0,723.2 1165.2,696.5 1165.3,703.9 1165.5,696.0 1165.6,707.8 1165.8,707.1 1166.0,690.2 1166.1,702.3 1166.3,707.1 1166.4,711.8 1166.6,707.8 1166.7,693.2 1166.9,701.1 1167.0,695.8 1167.2,710.1 1167.3,720.4 1167.5,694.6 1167.6,698.7 1167.8,707.3 1167.9,707.0 1168.1,696.1 1168.2,706.4 1168.4,692.9 1168.5,705.1 1168.7,722.5 1168.8,708.6 1169.0,695.6 1169.1,696.8 1169.3,692.0 1169.4,703.2 1169.6,706.2 1169.7,698.3 1169.9,707.8 1170.0,701.7 1170.2,730.4 1170.3,705.9 1170.5,702.0 1170.6,728.5 1170.8,706.5 1170.9,704.3 1171.1,693.3 1171.2,710.5 1171.4,699.9 1171.5,705.7 1171.7,701.0 1171.8,697.6 1171.9,688.6 1172.1,693.0 1172.2,704.0 1172.4,700.9 1172.5,733.9 1172.7,723.2 1172.8,686.4 1173.0,700.2 1173.1,694.3 1173.2,696.7 1173.4,699.5 1173.5,719.8 1173.7,706.9 1173.8,698.1 1174.0,695.8 1174.1,744.7 1174.2,705.5 1174.4,700.7 1174.5,694.1 1174.7,694.4 1174.8,699.9 1174.9,713.4 1175.1,690.9 1175.2,704.9 1175.4,712.5 1175.5,709.1 1175.7,727.6 1175.8,687.2 1175.9,701.0 1176.1,699.6 1176.2,710.8 1176.3,703.8 1176.5,702.1 1176.6,733.5 1176.8,699.9 1176.9,717.3 1177.0,699.9 1177.2,703.3 1177.3,711.9 1177.5,712.4 1177.6,701.7 1177.7,705.8 1177.9,705.2 1178.0,721.4 1178.1,695.2 1178.3,698.9 1178.4,739.2 1178.5,707.5 1178.7,707.8 1178.8,700.3 1179.0,703.1 1179.1,721.4 1179.2,705.8 1179.4,703.6 1179.5,711.6 1179.6,693.4 1179.8,706.9 1179.9,704.2 1180.0,721.6 1180.2,695.8 1180.3,692.7 1180.4,695.2 1180.6,698.3 1180.7,697.0 1180.8,708.9 1181.0,710.4 1181.1,703.1 1181.2,713.8 1181.4,706.2 1181.5,701.0 1181.6,704.3 1181.8,693.9 1181.9,632.0 1182.0,666.3 1182.1,705.2 1182.3,700.7 1182.4,698.6 1182.5,719.2 1182.7,701.2 1182.8,699.7 1182.9,696.8 1183.1,712.5 1183.2,694.5 1183.3,701.8 1183.4,721.3 1183.6,700.3 1183.7,694.5 1183.8,706.7 1184.0,714.3 1184.1,706.1 1184.2,705.2 1184.3,719.0 1184.5,705.3 1184.6,707.3 1184.7,706.9 1184.9,700.2 1185.0,700.0 1185.1,702.3 1185.2,705.5 1185.4,717.1 1185.5,719.8 1185.6,708.6 1185.7,695.4 1185.9,717.1 1186.0,698.4 1186.1,707.7 1186.2,706.4 1186.4,710.3 1186.5,712.5 1186.6,696.5 1186.7,695.8 1186.9,707.3 1187.0,698.4 1187.1,719.5 1187.2,694.9 1187.4,706.4 1187.5,710.4 1187.6,711.3 1187.7,713.0 1187.9,701.9 1188.0,702.1 1188.1,698.5 1188.2,705.3 1188.3,696.9 1188.5,695.1 1188.6,700.8 1188.7,706.7 1188.8,703.1 1189.0,695.7 1189.1,716.8 1189.2,709.5 1189.3,717.3 1189.4,712.4 1189.6,698.5 1189.7,720.5 1189.8,701.9 1189.9,708.0 1190.0,713.2 1190.2,712.6 1190.3,708.5 1190.4,720.4 1190.5,697.9 1190.6,695.2 1190.8,710.5 1190.9,703.5 1191.0,715.3 1191.1,706.4 1191.2,708.9 1191.4,702.8 1191.5,735.1 1191.6,694.3 1191.7,692.9 1191.8,706.4 1191.9,709.1 1192.1,716.1 1192.2,707.7 1192.3,709.9 1192.4,703.9 1192.5,696.2 1192.6,709.0 1192.8,700.6 1192.9,705.9 1193.0,701.5 1193.1,703.7 1193.2,692.2 1193.3,710.3 1193.5,710.2 1193.6,704.6 1193.7,697.3 1193.8,705.6 1193.9,694.8 1194.0,709.7 1194.1,705.8 1194.3,708.0 1194.4,707.7 1194.5,733.7 1194.6,699.6 1194.7,701.7 1194.8,691.1 1194.9,706.4 1195.1,701.4 1195.2,725.3 1195.3,720.3 1195.4,707.6 1195.5,702.8 1195.6,703.6 1195.7,695.4 1195.9,738.3 1196.0,705.4 1196.1,707.4 1196.2,728.5 1196.3,708.9 1196.4,711.2 1196.5,711.1 1196.6,716.9 1196.7,710.5 1196.9,697.0 1197.0,695.3 1197.1,701.1 1197.2,702.0 1197.3,693.4 1197.4,708.9 1197.5,728.5 1197.6,705.4 1197.7,699.6 1197.9,726.9 1198.0,695.5 1198.1,704.5 1198.2,713.9 1198.3,695.4 1198.4,696.0 1198.5,732.8 1198.6,709.4 1198.7,729.0 1198.8,704.2 1198.9,696.2 1199.1,716.6 1199.2,708.9 1199.3,700.5 1199.4,714.3 1199.5,717.9 1199.6,703.2 1199.7,706.7 1199.8,702.4 1199.9,727.6 1200.0,612.0 1200.1,659.4 1200.2,712.9 1200.3,707.7 1200.5,707.4 1200.6,702.4 1200.7,710.0 1200.8,695.7 1200.9,708.3 1201.0,697.6 1201.1,702.0 1201.2,705.1 1201.3,706.2 1201.4,701.4 1201.5,699.5 1201.6,699.3 1201.7,710.4 1201.8,701.4 1201.9,706.8 1202.0,691.2 1202.1,696.5 1202.2,711.2 1202.4,698.8 1202.5,707.3 1202.6,707.1 1202.7,701.8 1202.8,723.1 1202.9,707.6 1203.0,732.5 1203.1,703.8 1203.2,694.8 1203.3,706.8 1203.4,717.5 1203.5,712.0 1203.6,710.3 1203.7,706.4 1203.8,714.5 1203.9,707.8 1204.0,700.6 1204.1,703.7 1204.2,698.1 1204.3,705.6 1204.4,703.1 1204.5,705.6 1204.6,704.1 1204.7,714.4 1204.8,709.3 1204.9,720.3 1205.0,699.3 1205.1,705.2 1205.2,700.5 1205.3,696.3 1205.4,704.7 1205.5,715.9 1205.6,721.5 1205.7,710.9 1205.8,722.7 1205.9,712.5 1206.0,715.2 1206.1,698.8 1206.2,701.3 1206.3,695.1 1206.4,697.7 1206.5,701.9 1206.6,698.4 1206.7,708.0 1206.8,701.9 1206.9,707.7 1207.0,697.8 1207.1,696.6 1207.2,700.7 1207.3,695.1 1207.4,714.1 1207.5,706.9 1207.6,702.9 1207.7,718.0 1207.8,703.5 1207.9,704.3 1208.0,691.9 1208.1,707.7 1208.2,757.2 1208.3,706.8 1208.4,708.2 1208.5,727.4 1208.6,719.3 1208.7,702.9 1208.8,703.0 1208.9,711.7 1209.0,713.5 1209.1,692.9 1209.2,707.3 1209.3,695.2 1209.4,708.3 1209.4,703.0 1209.5,699.8 1209.6,704.6 1209.7,696.8 1209.8,702.1 1209.9,699.9 1210.0,704.6 1210.1,705.7 1210.2,711.8 1210.3,703.7 1210.4,716.6 1210.5,712.3 1210.6,700.5 1210.7,695.5 1210.8,703.8 1210.9,703.6 1211.0,713.7 1211.1,701.9 1211.2,705.5 1211.2,723.2 1211.3,716.6 1211.4,708.3 1211.5,705.4 1211.6,709.3 1211.7,696.2 1211.8,706.3 1211.9,708.0 1212.0,708.8 1212.1,706.5 1212.2,714.1 1212.3,693.4 1212.4,699.1 1212.5,699.5 1212.5,708.0 1212.6,722.4 1212.7,694.8 1212.8,718.0 1212.9,705.0 1213.0,697.8 1213.1,704.7 1213.2,704.3 1213.3,720.2 1213.4,718.3 1213.5,711.9 1213.6,703.4 1213.6,697.2 1213.7,709.3 1213.8,720.0 1213.9,711.1 1214.0,697.7 1214.1,710.8 1214.2,711.1 1214.3,692.5 1214.4,710.5 1214.5,696.9 1214.5,720.3 1214.6,699.6 1214.7,706.3 1214.8,709.2 1214.9,705.1 1215.0,723.1 1215.1,715.1 1215.2,696.3 1215.3,713.4 1215.4,704.5 1215.4,702.5 1215.5,712.3 1215.6,707.4 1215.7,701.5 1215.8,710.8 1215.9,696.2 1216.0,706.1 1216.1,703.0 1216.1,701.6 1216.2,710.3 1216.3,631.0 1216.4,671.4 1216.5,697.6 1216.6,690.3 1216.7,721.8 1216.8,707.0 1216.8,698.0 1216.9,731.3 1217.0,700.1 1217.1,714.8 1217.2,700.7 1217.3,694.9 1217.4,714.5 1217.5,703.6 1217.5,705.4 1217.6,706.7 1217.7,708.2 1217.8,693.5 1217.9,698.5 1218.0,707.0 1218.1,702.4 1218.1,702.9 1218.2,717.4 1218.3,693.1 1218.4,712.1 1218.5,728.9 1218.6,702.1 1218.7,699.2 1218.7,707.6 1218.8,700.7 1218.9,703.1 1219.0,699.8 1219.1,723.1 1219.2,701.5 1219.3,700.9 1219.3,710.1 1219.4,693.1 1219.5,701.5 1219.6,704.1 1219.7,716.5 1219.8,708.4 1219.8,704.5 1219.9,703.2 1220.0,717.3 1220.1,720.2 1220.2,706.8 1220.3,718.6 1220.3,721.4 1220.4,709.6 1220.5,697.3 1220.6,704.9 1220.7,703.6 1220.8,702.0 1220.8,705.3 1220.9,705.4 1221.0,699.4 1221.1,701.6 1221.2,698.4 1221.3,725.1 1221.3,719.7 1221.4,698.1 1221.5,699.7 1221.6,707.2 1221.7,709.2 1221.7,702.7 1221.8,718.5 1221.9,700.7 1222.0,699.3 1222.1,705.6 1222.2,704.8 1222.2,705.0 1222.3,724.5 1222.4,704.2 1222.5,708.4 1222.6,702.4 1222.6,706.5 1222.7,711.5 1222.8,714.2 1222.9,705.7 1223.0,699.9 1223.0,703.0 1223.1,713.1 1223.2,706.6 1223.3,696.8 1223.4,702.2 1223.4,696.1 1223.5,701.6 1223.6,696.2 1223.7,693.9 1223.8,705.7 1223.8,708.1 1223.9,705.6 1224.0,707.0 1224.1,720.2 1224.2,704.5 1224.2,706.2 1224.3,706.1 1224.4,693.9 1224.5,686.0 1224.6,706.3 1224.6,699.7 1224.7,709.3 1224.8,697.2 1224.9,697.0 1224.9,701.9 1225.0,716.5 1225.1,705.9 1225.2,723.4 1225.3,696.0 1225.3,700.1 1225.4,721.0 1225.5,701.2 1225.6,715.6 1225.6,737.3 1225.7,696.9 1225.8,699.6 1225.9,708.2 1226.0,696.9 1226.0,705.8 1226.1,709.4 1226.2,709.6 1226.3,700.4 1226.3,724.7 1226.4,700.6 1226.5,729.9 1226.6,694.0 1226.6,701.8 1226.7,714.3 1226.8,710.1 1226.9,706.7 1226.9,705.3 1227.0,703.2 1227.1,694.1 1227.2,711.4 1227.3,706.5 1227.3,700.3 1227.4,705.4 1227.5,707.6 1227.6,721.7 1227.6,705.1 1227.7,712.8 1227.8,705.5 1227.9,720.9 1227.9,698.3 1228.0,715.5 1228.1,694.0 1228.2,714.7 1228.2,702.1 1228.3,717.0 1228.4,717.7 1228.5,703.0 1228.5,709.2 1228.6,701.1 1228.7,703.1 1228.8,699.4 1228.8,700.9 1228.9,702.5 1229.0,703.3 1229.0,702.5 1229.1,703.0 1229.2,711.4 1229.3,693.1 1229.3,693.8 1229.4,702.2 1229.5,702.8 1229.6,706.0 1229.6,704.5 1229.7,719.5 1229.8,703.2 1229.9,700.6 1229.9,710.8 1230.0,709.5 1230.1,705.7 1230.1,710.3 1230.2,693.4 1230.3,712.8 1230.4,706.5 1230.4,698.6 1230.5,697.6 1230.6,704.1 1230.7,708.5 1230.7,711.4 1230.8,711.7 1230.9,707.0 1230.9,709.1 1231.0,717.4 1231.1,717.5 1231.2,704.8 1231.2,707.1 1231.3,618.0 1231.4,663.4 1231.4,723.0 1231.5,729.2 1231.6,698.5 1231.7,688.5 1231.7,710.3 1231.8,720.9 1231.9,705.3 1231.9,704.1 1232.0,708.0 1232.1,703.6 1232.2,716.3 1232.2,698.6 1232.3,711.0 1232.4,705.5 1232.4,711.7 1232.5,702.8 1232.6,694.0 1232.7,715.9 1232.7,698.0 1232.8,709.1 1232.9,699.1 1232.9,716.3 1233.0,699.7 1233.1,692.4 1233.1,701.1 1233.2,702.3 1233.3,699.5 1233.4,694.2 1233.4,701.4 1233.5,698.6 1233.6,702.6 1233.6,698.3 1233.7,700.4 1233.8,705.6 1233.9,704.6 1233.9,720.4 1234.0,731.0 1234.1,708.5 1234.1,701.9 1234.2,696.5 1234.3,704.6 1234.3,702.4 1234.4,710.3 1234.5,698.9 1234.6,713.6 1234.6,709.5 1234.7,697.8 1234.8,708.1 1234.8,687.5 1234.9,697.3 1235.0,699.9 1235.0,709.2 1235.1,708.8 1235.2,700.0 1235.3,703.4 1235.3,721.2 1235.4,692.8 1235.5,728.4 1235.5,704.4 1235.6,706.1 1235.7,707.3 1235.7,699.9 1235.8,707.5 1235.9,702.2 1236.0,702.9 1236.0,711.1 1236.1,718.8 1236.2,691.6 1236.2,720.4 1236.3,701.9 1236.4,706.9 1236.4,699.1 1236.5,695.6 1236.6,702.5 1236.6,700.4 1236.7,692.9 1236.8,699.2 1236.9,712.9 1236.9,705.7 1237.0,705.4 1237.1,694.2 1237.1,698.1 1237.2,728.3 1237.3,701.6 1237.3,701.8 1237.4,703.3 1237.5,687.3 1237.5,707.7 1237.6,703.7 1237.7,704.0 1237.8,709.6 1237.8,701.1 1237.9,731.7 1238.0,701.9 1238.0,723.6 1238.1,697.8 1238.2,694.8 1238.2,703.5 1238.3,704.0 1238.4,716.3 1238.4,702.3 1238.5,711.0 1238.6,728.8 1238.6,693.8 1238.7,705.5 1238.8,711.7 1238.8,706.9 1238.9,717.2 1239.0,700.6 1239.1,711.0 1239.1,710.9 1239.2,694.9 1239.3,722.4 1239.3,720.8 1239.4,709.1 1239.5,697.7 1239.5,700.9 1239.6,689.3 1239.7,735.8 1239.7,694.9 1239.8,703.6 1239.9,697.3 1239.9,709.9 1240.0,696.6 1240.1,708.5 1240.1,710.0 1240.2,698.0 1240.3,698.3 1240.3,712.4 1240.4,715.1 1240.5,700.9 1240.6,688.4 1240.6,706.2 1240.7,703.8 1240.8,703.3 1240.8,706.4 1240.9,705.8 1241.0,705.8 1241.0,692.8 1241.1,695.6 1241.2,714.3 1241.2,706.4 1241.3,725.6 1241.4,694.9 1241.4,717.9 1241.5,707.7 1241.6,703.6 1241.6,705.3 1241.7,714.3 1241.8,703.9 1241.8,703.3 1241.9,703.4 1242.0,701.6 1242.0,707.5 1242.1,714.6 1242.2,703.6 1242.2,706.1 1242.3,702.8 1242.4,691.6 1242.4,704.9 1242.5,712.1 1242.6,705.1 1242.6,702.9 1242.7,706.7 1242.8,725.6 1242.8,689.4 1242.9,692.0 1243.0,696.4 1243.0,708.3 1243.1,696.5 1243.2,691.4 1243.2,712.3 1243.3,706.6 1243.4,696.1 1243.4,686.2 1243.5,705.3 1243.6,713.0 1243.6,706.9 1243.7,706.5 1243.8,697.1 1243.8,696.9 1243.9,694.7 1244.0,704.4 1244.0,706.0 1244.1,699.0 1244.2,696.2 1244.2,704.3 1244.3,705.5 1244.4,711.9 1244.4,697.4 1244.5,702.1 1244.6,688.6 1244.6,703.6 1244.7,713.5 1244.8,701.6 1244.8,697.6 1244.9,695.0 1245.0,698.8 1245.0,636.6 1245.1,668.6 1245.2,706.5 1245.2,696.6 1245.3,691.6 1245.4,695.4 1245.4,689.4 1245.5,694.6 1245.6,701.3 1245.6,700.7 1245.7,697.2 1245.8,696.8 1245.8,729.9 1245.9,706.2 1245.9,703.6 1246.0,698.0 1246.1,700.9 1246.1,703.9 1246.2,694.0 1246.3,691.3 1246.3,699.0 1246.4,707.7 1246.5,703.7 1246.5,705.5 1246.6,702.1 1246.7,699.7 1246.7,687.6 1246.8,711.1 1246.9,698.8 1246.9,692.1 1247.0,698.4 1247.1,695.2 1247.1,700.8 1247.2,707.5 1247.3,701.5 1247.3,712.4 1247.4,704.0 1247.5,695.6 1247.5,707.3 1247.6,701.2 1247.6,715.2 1247.7,684.7 1247.8,709.1 1247.8,708.1 1247.9,699.4 1248.0,698.2 1248.0,685.4 1248.1,692.3 1248.2,702.7 1248.2,693.9 1248.3,693.0 1248.4,695.9 1248.4,721.4 1248.5,704.1 1248.6,701.3 1248.6,699.7 1248.7,688.4 1248.7,702.7 1248.8,702.1 1248.9,713.4 1248.9,697.0 1249.0,695.5 1249.1,692.6 1249.1,701.4 1249.2,691.9 1249.3,692.9 1249.3,694.8 1249.4,693.0 1249.5,699.6 1249.5,698.9 1249.6,692.9 1249.6,697.1 1249.7,696.5 1249.8,693.9 1249.8,688.9 1249.9,688.9 1250.0,701.8 1250.0,699.2 1250.1,701.6 1250.2,690.9 1250.2,694.4 1250.3,697.8 1250.4,714.5 1250.4,696.5 1250.5,709.9 1250.5,701.0 1250.6,698.4 1250.7,698.6 1250.7,698.8 1250.8,695.7 1250.9,704.9 1250.9,694.7 1251.0,705.9 1251.1,693.9 1251.1,688.0 1251.2,694.3 1251.2,698.6 1251.3,699.0 1251.4,688.1 1251.4,697.6 1251.5,694.5 1251.6,698.7 1251.6,693.1 1251.7,690.4 1251.8,688.2 1251.8,700.3 1251.9,701.1 1251.9,711.0 1252.0,694.6 1252.1,687.6 1252.1,696.2 1252.2,703.8 1252.3,699.1 1252.3,685.5 1252.4,704.0 1252.5,695.3 1252.5,697.9 1252.6,704.4 1252.6,700.1 1252.7,693.7 1252.8,690.3 1252.8,688.6 1252.9,698.1 1253.0,705.4 1253.0,682.0 1253.1,695.9 1253.1,694.7 1253.2,703.4 1253.3,697.7 1253.3,699.4 1253.4,714.0 1253.5,686.1 1253.5,710.3 1253.6,702.3 1253.6,684.7 1253.7,711.7 1253.8,701.8 1253.8,702.5 1253.9,693.5 1254.0,697.4 1254.0,694.8 1254.1,705.8 1254.1,698.5 1254.2,703.2 1254.3,695.4 1254.3,698.8 1254.4,705.7 1254.5,687.7 1254.5,711.1 1254.6,702.7 1254.6,707.6 1254.7,698.1 1254.8,693.1 1254.8,701.9 1254.9,707.4 1255.0,696.6 1255.0,690.4 1255.1,697.2 1255.1,703.8 1255.2,691.6 1255.3,720.2 1255.3,697.6 1255.4,696.0 1255.5,693.1 1255.5,706.3 1255.6,690.5 1255.6,696.7 1255.7,691.6 1255.8,692.8 1255.8,703.7 1255.9,696.8 1256.0,694.5 1256.0,699.6 1256.1,708.5 1256.1,703.2 1256.2,718.6 1256.3,702.7 1256.3,694.1 1256.4,701.6 1256.4,687.7 1256.5,713.4 1256.6,698.1 1256.6,695.0 1256.7,700.3 1256.8,688.1 1256.8,696.4 1256.9,691.1 1256.9,702.8 1257.0,705.9 1257.1,683.5 1257.1,715.1 1257.2,694.8 1257.2,698.0 1257.3,706.1 1257.4,700.2 1257.4,686.8 1257.5,703.6 1257.6,701.3 1257.6,700.5 1257.7,694.6 1257.7,629.0 1257.8,672.0 1257.9,685.7 1257.9,705.0 1258.0,706.1 1258.0,697.7 1258.1,692.6 1258.2,692.4 1258.2,697.0 1258.3,691.1 1258.4,691.0 1258.4,696.2 1258.5,697.2 1258.5,717.2 1258.6,709.1 1258.7,701.4 1258.7,690.2 1258.8,691.9 1258.8,705.7 1258.9,718.1 1259.0,711.8 1259.0,696.1 1259.1,695.7 1259.1,696.1 1259.2,713.6 1259.3,705.0 1259.3,693.0 1259.4,697.6 1259.4,687.6 1259.5,694.0 1259.6,706.3 1259.6,689.6 1259.7,686.1 1259.7,707.2 1259.8,690.2 1259.9,704.5 1259.9,704.0 1260.0,687.5 1260.1,697.2 1260.1,686.5 1260.2,697.9 1260.2,702.4 1260.3,697.5 1260.4,687.5 1260.4,699.6 1260.5,710.1 1260.5,698.7 1260.6,687.2 1260.7,693.5 1260.7,704.2 1260.8,689.6 1260.8,693.6 1260.9,694.5 1261.0,700.4 1261.0,691.4 1261.1,709.4 1261.1,697.4 1261.2,685.8 1261.3,691.2 1261.3,683.4 1261.4,720.7 1261.4,709.4 1261.5,698.5 1261.6,693.8 1261.6,711.6 1261.7,695.3 1261.7,699.3 1261.8,692.0 1261.9,715.6 1261.9,686.4 1262.0,701.1 1262.0,690.7 1262.1,700.1 1262.2,700.2 1262.2,708.7 1262.3,697.2 1262.3,685.9 1262.4,694.8 1262.5,692.8 1262.5,691.0 1262.6,691.3 1262.6,699.0 1262.7,685.5 1262.8,701.3 1262.8,704.9 1262.9,689.8 1262.9,710.1 1263.0,693.7 1263.0,693.2 1263.1,697.8 1263.2,701.8 1263.2,684.4 1263.3,703.2 1263.3,697.1 1263.4,698.5 1263.5,710.6 1263.5,697.7 1263.6,688.5 1263.6,694.3 1263.7,695.8 1263.8,691.0 1263.8,696.8 1263.9,697.2 1263.9,688.2 1264.0,690.5 1264.1,705.4 1264.1,707.1 1264.2,693.6 1264.2,702.8 1264.3,699.4 1264.3,682.0 1264.4,714.2 1264.5,686.1 1264.5,685.4 1264.6,714.6 1264.6,688.2 1264.7,690.4 1264.8,690.8 1264.8,689.7 1264.9,700.2 1264.9,696.8 1265.0,694.4 1265.1,704.5 1265.1,700.7 1265.2,689.8 1265.2,697.2 1265.3,700.3 1265.3,684.0 1265.4,731.0 1265.5,684.4 1265.5,681.7 1265.6,693.4 1265.6,695.5 1265.7,690.1 1265.8,695.6 1265.8,704.1 1265.9,688.8 1265.9,692.4 1266.0,693.0 1266.1,689.0 1266.1,713.5 1266.2,693.9 1266.2,703.5 1266.3,704.3 1266.3,758.9 1266.4,703.0 1266.5,686.5 1266.5,694.3 1266.6,685.4 1266.6,694.9 1266.7,686.9 1266.7,692.6 1266.8,701.0 1266.9,676.3 1266.9,699.2 1267.0,703.7 1267.0,703.8 1267.1,683.4 1267.2,703.4 1267.2,700.5 1267.3,686.8 1267.3,690.9 1267.4,700.2 1267.4,700.5 1267.5,694.7 1267.6,700.4 1267.6,688.8 1267.7,685.8 1267.7,685.7 1267.8,704.2 1267.8,705.2 1267.9,690.7 1268.0,684.3 1268.0,687.6 1268.1,689.7 1268.1,701.9 1268.2,692.3 1268.3,708.4 1268.3,699.6 1268.4,690.5 1268.4,696.1 1268.5,694.0 1268.5,705.5 1268.6,691.0 1268.7,692.6 1268.7,698.1 1268.8,688.5 1268.8,696.7 1268.9,729.2 1268.9,698.8 1269.0,694.6 1269.1,692.1 1269.1,685.2 1269.2,692.2 1269.2,690.3 1269.3,690.0 1269.3,709.9 1269.4,689.7 1269.5,692.9 1269.5,688.0 1269.6,631.0 1269.6,663.6 1269.7,695.8 1269.7,692.1 1269.8,683.6 1269.9,695.4 1269.9,695.6 1270.0,684.9 1270.0,682.4 1270.1,698.8 1270.1,682.6 1270.2,718.1 1270.3,695.8 1270.3,686.8 1270.4,709.7 1270.4,707.1 1270.5,699.9 1270.5,684.8 1270.6,703.4 1270.7,692.3 1270.7,705.2 1270.8,712.8 1270.8,684.8 1270.9,684.8 1270.9,694.5 1271.0,684.7 1271.1,691.5 1271.1,693.9 1271.2,675.4 1271.2,710.9 1271.3,686.6 1271.3,692.8 1271.4,702.2 1271.5,698.1 1271.5,688.9 1271.6,696.2 1271.6,703.5 1271.7,704.7 1271.7,684.7 1271.8,694.7 1271.8,710.3 1271.9,701.7 1272.0,690.7 1272.0,699.8 1272.1,680.4 1272.1,720.6 1272.2,689.5 1272.2,695.3 1272.3,682.4 1272.4,690.4 1272.4,695.4 1272.5,708.8 1272.5,689.1 1272.6,701.2 1272.6,691.0 1272.7,692.7 1272.7,688.5 1272.8,694.1 1272.9,697.4 1272.9,692.1 1273.0,700.7 1273.0,680.0 1273.1,684.0 1273.1,706.6 1273.2,714.4 1273.3,690.7 1273.3,692.0 1273.4,682.1 1273.4,691.1 1273.5,693.2 1273.5,706.2 1273.6,685.3 1273.6,693.4 1273.7,696.0 1273.8,696.0 1273.8,686.0 1273.9,685.7 1273.9,691.7 1274.0,706.2 1274.0,712.7 1274.1,696.3 1274.1,686.0 1274.2,700.0 1274.3,700.7 1274.3,704.6 1274.4,690.5 1274.4,688.7 1274.5,688.2 1274.5,704.2 1274.6,695.7 1274.6,698.8 1274.7,688.8 1274.8,683.6 1274.8,685.5 1274.9,712.4 1274.9,686.5 1275.0,713.0 1275.0,682.7 1275.1,705.3 1275.1,683.7 1275.2,699.0 1275.3,691.9 1275.3,684.3 1275.4,690.9 1275.4,688.0 1275.5,683.7 1275.5,698.3 1275.6,692.4 1275.6,696.6 1275.7,698.3 1275.8,688.0 1275.8,697.1 1275.9,687.3 1275.9,695.6 1276.0,694.9 1276.0,693.1 1276.1,693.8 1276.1,691.0 1276.2,690.0 1276.2,699.2 1276.3,680.8 1276.4,695.1 1276.4,688.4 1276.5,713.9 1276.5,686.4 1276.6,713.0 1276.6,714.0 1276.7,692.4 1276.7,684.6 1276.8,680.6 1276.9,691.6 1276.9,690.7 1277.0,691.4 1277.0,715.2 1277.1,697.3 1277.1,701.6 1277.2,707.4 1277.2,689.8 1277.3,684.5 1277.3,689.4 1277.4,682.5 1277.5,694.5 1277.5,693.6 1277.6,683.0 1277.6,694.3 1277.7,698.3 1277.7,700.0 1277.8,692.5 1277.8,697.2 1277.9,704.2 1277.9,682.3 1278.0,694.5 1278.1,693.5 1278.1,699.2 1278.2,697.4 1278.2,685.5 1278.3,692.1 1278.3,693.7 1278.4,695.9 1278.4,688.2 1278.5,684.3 1278.5,696.5 1278.6,692.1 1278.6,694.1 1278.7,692.3 1278.8,692.1 1278.8,690.2 1278.9,690.6 1278.9,702.4 1279.0,696.8 1279.0,689.4 1279.1,684.5 1279.1,690.3 1279.2,693.0 1279.2,703.9 1279.3,698.0 1279.4,689.8 1279.4,692.3 1279.5,690.3 1279.5,686.6 1279.6,693.2 1279.6,685.4 1279.7,682.0 1279.7,699.3 1279.8,692.5 1279.8,702.0 1279.9,730.1 1279.9,693.8 1280.0,689.9 1280.1,693.1 1280.1,698.1 1280.2,700.5 1280.2,686.4 1280.3,682.7 1280.3,694.1 1280.4,694.2 1280.4,694.5 1280.5,700.4 1280.5,714.5 1280.6,695.2 1280.6,631.0 1280.7,669.1 1280.8,697.7 1280.8,692.3 1280.9,688.5 1280.9,685.8 1281.0,705.7 1281.0,704.3 1281.1,708.9 1281.1,703.7 1281.2,703.3 1281.2,688.1 1281.3,712.0 1281.3,688.8 1281.4,691.1 1281.4,687.1 1281.5,697.8 1281.6,697.6 1281.6,697.6 1281.7,692.7 1281.7,711.0 1281.8,693.0 1281.8,705.8 1281.9,692.8 1281.9,694.2 1282.0,696.5 1282.0,697.7 1282.1,700.6 1282.1,674.9 1282.2,696.6 1282.2,682.9 1282.3,713.3 1282.4,683.3 1282.4,704.7 1282.5,697.5 1282.5,692.1 1282.6,703.0 1282.6,695.8 1282.7,699.7 1282.7,695.3 1282.8,690.2 1282.8,690.6 1282.9,693.7 1282.9,711.4 1283.0,691.1 1283.0,703.6 1283.1,702.3 1283.1,696.4 1283.2,700.7 1283.3,700.0 1283.3,687.2 1283.4,687.4 1283.4,710.0 1283.5,704.0 1283.5,678.7 1283.6,685.4 1283.6,698.9 1283.7,698.3 1283.7,681.1 1283.8,706.2 1283.8,702.3 1283.9,717.3 1283.9,687.4 1284.0,688.5 1284.0,701.1 1284.1,704.8 1284.1,683.5 1284.2,692.5 1284.3,685.3 1284.3,698.8 1284.4,689.3 1284.4,686.9 1284.5,690.1 1284.5,677.6 1284.6,688.6 1284.6,699.8 1284.7,681.1 1284.7,675.3 1284.8,690.0 1284.8,705.3 1284.9,694.8 1284.9,686.8 1285.0,690.0 1285.0,687.8 1285.1,698.6 1285.1,689.1 1285.2,693.1 1285.2,692.9 1285.3,684.0 1285.3,685.8 1285.4,690.9 1285.5,693.3 1285.5,691.2 1285.6,704.7 1285.6,693.8 1285.7,696.9 1285.7,695.6 1285.8,679.5 1285.8,705.6 1285.9,686.1 1285.9,691.6 1286.0,700.7 1286.0,699.3 1286.1,700.2 1286.1,691.9 1286.2,700.9 1286.2,710.6 1286.3,701.1 1286.3,687.6 1286.4,695.7 1286.4,693.6 1286.5,688.0 1286.5,703.7 1286.6,687.1 1286.6,695.2 1286.7,703.4 1286.8,694.7 1286.8,689.4 1286.9,690.6 1286.9,688.4 1287.0,692.3 1287.0,699.8 1287.1,687.4 1287.1,696.1 1287.2,722.8 1287.2,694.7 1287.3,715.4 1287.3,702.2 1287.4,685.5 1287.4,699.1 1287.5,693.3 1287.5,695.8 1287.6,688.2 1287.6,701.4 1287.7,680.1 1287.7,694.2 1287.8,685.0 1287.8,687.4 1287.9,679.8 1287.9,705.8 1288.0,698.2 1288.0,686.1 1288.1,705.8 1288.1,696.7 1288.2,687.9 1288.2,686.8 1288.3,699.3 1288.3,722.4 1288.4,687.0 1288.5,712.6 1288.5,694.3 1288.6,679.4 1288.6,692.3 1288.7,700.3 1288.7,681.2 1288.8,693.9 1288.8,682.5 1288.9,678.5 1288.9,689.6 1289.0,712.4 1289.0,684.8 1289.1,697.2 1289.1,693.8 1289.2,689.5 1289.2,680.9 1289.3,699.4 1289.3,682.5 1289.4,703.9 1289.4,731.7 1289.5,686.2 1289.5,696.2 1289.6,696.0 1289.6,696.5 1289.7,686.4 1289.7,677.7 1289.8,680.7 1289.8,687.8 1289.9,698.2 1289.9,689.6 1290.0,688.3 1290.0,695.7 1290.1,691.9 1290.1,690.0 1290.2,696.8 1290.2,697.6 1290.3,688.3 1290.3,692.5 1290.4,693.3 1290.4,705.1 1290.5,701.6 1290.5,682.9 1290.6,690.4 1290.6,701.2 1290.7,699.7 1290.7,692.1 1290.8,691.3 1290.8,693.1 1290.9,690.4 1290.9,691.6 1291.0,690.0 1291.0,630.0 1291.1,659.5 1291.1,691.1 1291.2,707.7 1291.2,730.6 1291.3,695.3 1291.3,692.0 1291.4,686.2 1291.4,707.1 1291.5,695.6 1291.5,684.5 1291.6,690.4 1291.6,690.5 1291.7,675.7 1291.7,688.3 1291.8,711.3 1291.8,688.6 1291.9,702.0 1291.9,686.3 1292.0,679.8 1292.0,691.7 1292.1,683.3 1292.1,700.0 1292.2,698.5 1292.2,683.3 1292.3,689.1 1292.3,681.5 1292.4,711.1 1292.4,686.8 1292.5,697.4 1292.5,682.1 1292.6,689.3 1292.6,686.2 1292.7,683.1 1292.7,691.4 1292.8,694.5 1292.8,680.0 1292.9,687.4 1292.9,706.9 1293.0,691.2 1293.0,693.3 1293.1,688.1 1293.1,682.9 1293.2,702.5 1293.2,684.0 1293.3,680.7 1293.3,686.1 1293.4,691.9 1293.4,702.4 1293.5,684.1 1293.5,687.2 1293.6,688.7 1293.6,690.5 1293.7,695.0 1293.7,690.9 1293.8,681.5 1293.8,695.6 1293.9,694.5 1293.9,684.9 1294.0,707.7 1294.0,694.1 1294.1,689.3 1294.1,702.4 1294.2,712.9 1294.2,688.7 1294.3,722.5 1294.3,696.7 1294.4,693.6 1294.4,712.9 1294.5,690.0 1294.5,683.6 1294.6,689.2 1294.6,699.8 1294.7,686.8 1294.7,709.7 1294.8,695.3 1294.8,688.2 1294.9,694.1 1294.9,704.4 1295.0,711.9 1295.0,687.3 1295.1,681.4 1295.1,708.6 1295.2,686.3 1295.2,696.2 1295.3,704.5 1295.3,684.8 1295.4,688.9 1295.4,679.8 1295.5,684.3 1295.5,687.7 1295.6,685.0 1295.6,703.3 1295.7,685.5 1295.7,676.5 1295.8,690.3 1295.8,694.8 1295.9,695.8 1295.9,693.5 1296.0,679.5 1296.0,700.4 1296.1,686.4 1296.1,690.8 1296.2,688.6 1296.2,692.4 1296.3,689.3 1296.3,686.7 1296.4,689.5 1296.4,699.8 1296.5,692.4 1296.5,697.4 1296.6,701.8 1296.6,682.1 1296.7,686.1 1296.7,681.5 1296.7,686.4 1296.8,686.1 1296.8,697.4 1296.9,690.0 1296.9,690.3 1297.0,700.0 1297.0,697.0 1297.1,690.2 1297.1,694.6 1297.2,691.0 1297.2,686.8 1297.3,688.1 1297.3,697.8 1297.4,693.4 1297.4,696.8 1297.5,684.1 1297.5,693.5 1297.6,689.4 1297.6,691.1 1297.7,692.5 1297.7,691.1 1297.8,685.4 1297.8,693.7 1297.9,696.0 1297.9,705.6 1298.0,682.7 1298.0,692.7 1298.1,700.9 1298.1,704.8 1298.2,691.0 1298.2,688.4 1298.3,684.1 1298.3,691.6 1298.4,703.0 1298.4,681.7 1298.4,691.5 1298.5,690.9 1298.5,693.2 1298.6,695.2 1298.6,684.7 1298.7,677.8 1298.7,686.4 1298.8,694.0 1298.8,691.6 1298.9,683.9 1298.9,689.0 1299.0,689.1 1299.0,690.1 1299.1,688.3 1299.1,687.3 1299.2,683.2 1299.2,689.6 1299.3,713.0 1299.3,702.7 1299.4,683.0 1299.4,686.6 1299.5,696.1 1299.5,702.1 1299.6,691.1 1299.6,688.1 1299.7,688.4 1299.7,693.8 1299.7,683.3 1299.8,681.3 1299.8,681.0 1299.9,700.5 1299.9,715.5 1300.0,690.0 1300.0,692.3 1300.1,686.1 1300.1,685.8 1300.2,698.2 1300.2,688.2 1300.3,689.2 1300.3,696.1 1300.4,708.6 1300.4,695.6 1300.5,675.1 1300.5,696.1 1300.6,686.4 1300.6,676.4 1300.7,695.4 1300.7,685.2 1300.8,686.2 1300.8,688.9 1300.8,641.0 1300.9,667.8 1300.9,690.9 1301.0,683.8 1301.0,688.4 1301.1,700.8 1301.1,708.5 1301.2,690.7 1301.2,686.9 1301.3,699.2 1301.3,691.4 1301.4,686.8 1301.4,679.0 1301.5,685.5 1301.5,706.6 1301.6,676.4 1301.6,690.7 1301.7,682.6 1301.7,693.4 1301.8,696.5 1301.8,685.0 1301.8,686.9 1301.9,691.7 1301.9,692.0 1302.0,704.5 1302.0,700.9 1302.1,686.5 1302.1,702.7 1302.2,683.7 1302.2,682.8 1302.3,689.0 1302.3,682.0 1302.4,690.0 1302.4,695.9 1302.5,690.1 1302.5,687.7 1302.6,685.3 1302.6,690.2 1302.6,688.1 1302.7,689.8 1302.7,695.0 1302.8,683.8 1302.8,700.6 1302.9,699.3 1302.9,683.0 1303.0,684.2 1303.0,699.8 1303.1,686.0 1303.1,679.4 1303.2,681.5 1303.2,688.2 1303.3,690.8 1303.3,707.2 1303.4,690.8 1303.4,696.2 1303.4,685.1 1303.5,688.7 1303.5,689.7 1303.6,684.7 1303.6,702.7 1303.7,679.3 1303.7,699.3 1303.8,680.8 1303.8,689.4 1303.9,697.5 1303.9,712.8 1304.0,702.7 1304.0,691.4 1304.1,692.2 1304.1,708.1 1304.2,682.9 1304.2,679.6 1304.2,696.5 1304.3,690.2 1304.3,690.4 1304.4,689.8 1304.4,689.5 1304.5,690.0 1304.5,722.4 1304.6,708.6 1304.6,683.6 1304.7,696.9 1304.7,682.0 1304.8,692.2 1304.8,723.3 1304.9,683.1 1304.9,683.9 1304.9,686.3 1305.0,688.0 1305.0,686.7 1305.1,683.5 1305.1,681.7 1305.2,714.4 1305.2,689.4 1305.3,700.5 1305.3,687.4 1305.4,731.2 1305.4,692.3 1305.5,688.6 1305.5,688.2 1305.5,691.5 1305.6,694.5 1305.6,696.9 1305.7,689.4 1305.7,687.9 1305.8,691.2 1305.8,695.1 1305.9,684.1 1305.9,688.8 1306.0,679.9 1306.0,707.9 1306.1,681.9 1306.1,696.4 1306.1,689.6 1306.2,699.7 1306.2,693.6 1306.3,685.2 1306.3,689.8 1306.4,688.2 1306.4,693.6 1306.5,707.9 1306.5,691.4 1306.6,697.8 1306.6,695.9 1306.7,694.8 1306.7,685.8 1306.7,686.3 1306.8,677.2 1306.8,686.4 1306.9,691.0 1306.9,678.8 1307.0,698.9 1307.0,679.7 1307.1,683.0 1307.1,698.9 1307.2,690.9 1307.2,696.4 1307.3,688.2 1307.3,677.2 1307.3,695.0 1307.4,690.0 1307.4,692.3 1307.5,696.8 1307.5,684.4 1307.6,688.5 1307.6,679.7 1307.7,693.9 1307.7,694.6 1307.8,694.3 1307.8,681.9 1307.8,682.8 1307.9,714.5 1307.9,692.3 1308.0,683.0 1308.0,698.5 1308.1,691.3 1308.1,695.7 1308.2,720.8 1308.2,681.2 1308.3,686.3 1308.3,696.2 1308.4,686.0 1308.4,696.9 1308.4,694.2 1308.5,687.8 1308.5,690.4 1308.6,687.3 1308.6,688.0 1308.7,699.6 1308.7,689.1 1308.8,701.0 1308.8,699.8 1308.9,698.1 1308.9,691.7 1308.9,684.2 1309.0,705.1 1309.0,713.0 1309.1,686.4 1309.1,687.0 1309.2,702.6 1309.2,688.1 1309.3,689.8 1309.3,696.2 1309.4,679.3 1309.4,687.9 1309.4,673.3 1309.5,696.3 1309.5,694.6 1309.6,689.0 1309.6,688.4 1309.7,699.6 1309.7,691.2 1309.8,681.7 1309.8,703.7 1309.9,692.5 1309.9,691.9 1309.9,695.3 1310.0,693.6 1310.0,699.2 1310.1,689.7 1310.1,628.0 1310.2,662.5 1310.2,682.8 1310.3,694.5 1310.3,694.2 1310.3,689.7 1310.4,684.3 1310.4,694.7 1310.5,684.7 1310.5,676.9 1310.6,692.2 1310.6,692.7 1310.7,684.8 1310.7,676.9 1310.8,676.6 1310.8,685.7 1310.8,684.7 1310.9,691.4 1310.9,707.1 1311.0,688.2 1311.0,692.7 1311.1,693.4 1311.1,689.7 1311.2,683.5 1311.2,680.1 1311.2,690.2 1311.3,700.7 1311.3,716.5 1311.4,677.8 1311.4,685.5 1311.5,695.5 1311.5,683.8 1311.6,703.1 1311.6,694.0 1311.6,697.7 1311.7,715.5 1311.7,694.1 1311.8,690.4 1311.8,684.6 1311.9,687.7 1311.9,715.0 1312.0,681.4 1312.0,690.2 1312.1,690.5 1312.1,689.8 1312.1,696.0 1312.2,690.5 1312.2,679.7 1312.3,686.5 1312.3,691.1 1312.4,693.3 1312.4,704.8 1312.5,687.5 1312.5,686.7 1312.5,691.1 1312.6,686.2 1312.6,690.6 1312.7,686.6 1312.7,699.1 1312.8,708.4 1312.8,688.7 1312.9,698.1 1312.9,684.8 1312.9,694.8 1313.0,680.9 1313.0,683.7 1313.1,685.9 1313.1,687.2 1313.2,691.2 1313.2,695.8 1313.3,705.4 1313.3,703.5 1313.3,683.0 1313.4,700.1 1313.4,686.2 1313.5,706.5 1313.5,691.9 1313.6,716.2 1313.6,681.2 1313.7,694.4 1313.7,692.0 1313.7,707.6 1313.8,694.3 1313.8,691.7 1313.9,687.6 1313.9,686.4 1314.0,691.0 1314.0,695.7 1314.0,686.7 1314.1,692.3 1314.1,688.8 1314.2,688.3 1314.2,681.5 1314.3,682.5 1314.3,684.5 1314.4,684.2 1314.4,700.3 1314.4,682.2 1314.5,677.8 1314.5,685.1 1314.6,707.4 1314.6,718.7 1314.7,703.2 1314.7,708.9 1314.8,698.0 1314.8,680.7 1314.8,699.6 1314.9,687.8 1314.9,688.9 1315.0,699.7 1315.0,702.0 1315.1,696.0 1315.1,682.4 1315.1,698.9 1315.2,680.2 1315.2,689.6 1315.3,683.7 1315.3,709.2 1315.4,696.7 1315.4,685.4 1315.5,689.3 1315.5,689.1 1315.5,694.4 1315.6,690.0 1315.6,692.2 1315.7,696.7 1315.7,683.2 1315.8,697.7 1315.8,702.7 1315.8,691.1 1315.9,698.4 1315.9,683.6 1316.0,686.7 1316.0,684.4 1316.1,694.5 1316.1,687.0 1316.2,708.0 1316.2,696.6 1316.2,678.4 1316.3,697.1 1316.3,684.0 1316.4,677.6 1316.4,679.6 1316.5,679.2 1316.5,683.8 1316.5,682.6 1316.6,695.7 1316.6,680.3 1316.7,687.1 1316.7,695.9 1316.8,699.7 1316.8,699.6 1316.8,690.2 1316.9,693.0 1316.9,687.9 1317.0,688.6 1317.0,697.1 1317.1,689.5 1317.1,684.0 1317.2,685.8 1317.2,683.1 1317.2,681.7 1317.3,685.5 1317.3,687.1 1317.4,690.1 1317.4,695.5 1317.5,699.4 1317.5,687.7 1317.5,708.6 1317.6,683.7 1317.6,681.0 1317.7,694.3 1317.7,679.3 1317.8,679.4 1317.8,693.9 1317.8,702.9 1317.9,690.1 1317.9,687.1 1318.0,679.6 1318.0,694.1 1318.1,679.6 1318.1,699.9 1318.1,680.5 1318.2,693.2 1318.2,692.0 1318.3,689.3 1318.3,694.1 1318.4,688.2 1318.4,712.8 1318.4,685.0 1318.5,693.5 1318.5,687.2 1318.6,687.9 1318.6,687.7 1318.7,693.1 1318.7,702.2 1318.7,685.0 1318.8,684.3 1318.8,696.4 1318.9,691.4 1318.9,651.0 1319.0,664.3 1319.0,693.4 1319.0,673.7 1319.1,691.2 1319.1,697.9 1319.2,686.0 1319.2,675.0 1319.3,715.4 1319.3,713.4 1319.3,678.8 1319.4,686.1 1319.4,682.0 1319.5,705.5 1319.5,694.1 1319.6,677.4 1319.6,695.8 1319.6,706.1 1319.7,686.7 1319.7,696.2 1319.8,689.5 1319.8,684.4 1319.9,696.3 1319.9,693.1 1319.9,684.5 1320.0,687.9 1320.0,701.5 1320.1,679.6 1320.1,681.7 1320.2,685.7 1320.2,692.0 1320.2,687.2 1320.3,702.8 1320.3,706.3 1320.4,698.2 1320.4,702.8 1320.5,683.7 1320.5,677.1 1320.5,690.2 1320.6,693.2 1320.6,686.8 1320.7,683.8 1320.7,689.8 1320.8,689.4 1320.8,705.1 1320.8,691.2 1320.9,699.8 1320.9,680.6 1321.0,682.4 1321.0,704.8 1321.1,677.1 1321.1,689.6 1321.1,699.3 1321.2,684.0 1321.2,688.6 1321.3,685.8 1321.3,681.8 1321.3,697.3 1321.4,704.8 1321.4,680.0 1321.5,691.2 1321.5,690.4 1321.6,695.4 1321.6,694.3 1321.6,685.1 1321.7,692.8 1321.7,692.1 1321.8,701.3 1321.8,691.8 1321.9,690.7 1321.9,679.1 1321.9,690.2 1322.0,692.6 1322.0,683.6 1322.1,683.7 1322.1,710.5 1322.1,686.3 1322.2,687.4 1322.2,691.4 1322.3,695.7 1322.3,695.7 1322.4,685.6 1322.4,684.5 1322.4,690.8 1322.5,688.9 1322.5,696.5 1322.6,680.0 1322.6,696.4 1322.7,698.9 1322.7,695.1 1322.7,692.4 1322.8,695.2 1322.8,705.7 1322.9,682.3 1322.9,697.2 1322.9,699.7 1323.0,690.2 1323.0,684.2 1323.1,693.6 1323.1,692.1 1323.2,687.2 1323.2,691.2 1323.2,682.0 1323.3,686.1 1323.3,680.5 1323.4,689.8 1323.4,692.7 1323.4,695.7 1323.5,689.0 1323.5,692.7 1323.6,700.7 1323.6,674.8 1323.7,703.9 1323.7,687.1 1323.7,675.7 1323.8,686.0 1323.8,675.9 1323.9,702.5 1323.9,690.3 1323.9,682.2 1324.0,677.3 1324.0,685.8 1324.1,685.3 1324.1,696.6 1324.2,702.4 1324.2,677.0 1324.2,692.1 1324.3,684.6 1324.3,697.8 1324.4,702.1 1324.4,684.6 1324.4,692.6 1324.5,689.9 1324.5,690.0 1324.6,682.5 1324.6,698.6 1324.7,694.3 1324.7,685.1 1324.7,697.9 1324.8,689.6 1324.8,680.1 1324.9,692.9 1324.9,675.6 1324.9,688.6 1325.0,696.5 1325.0,695.2 1325.1,691.3 1325.1,675.3 1325.2,686.8 1325.2,682.6 1325.2,690.0 1325.3,688.7 1325.3,681.3 1325.4,688.9 1325.4,678.1 1325.4,681.4 1325.5,696.9 1325.5,691.6 1325.6,709.3 1325.6,680.5 1325.6,686.2 1325.7,681.3 1325.7,682.1 1325.8,699.6 1325.8,682.2 1325.9,685.7 1325.9,684.6 1325.9,687.5 1326.0,689.3 1326.0,684.5 1326.1,684.7 1326.1,699.1 1326.1,682.9 1326.2,693.9 1326.2,685.7 1326.3,691.8 1326.3,684.5 1326.3,688.0 1326.4,681.5 1326.4,692.6 1326.5,696.5 1326.5,701.6 1326.6,677.2 1326.6,682.9 1326.6,691.4 1326.7,692.9 1326.7,679.8 1326.8,680.4 1326.8,690.3 1326.8,681.5 1326.9,694.5 1326.9,696.7 1327.0,703.8 1327.0,683.9 1327.0,686.4 1327.1,689.8 1327.1,696.3 1327.2,686.6 1327.2,691.7 1327.2,687.9 1327.3,633.6 1327.3,656.0 1327.4,684.6 1327.4,694.9 1327.5,685.5 1327.5,682.9 1327.5,676.7 1327.6,690.6 1327.6,684.3 1327.7,686.0 1327.7,678.3 1327.7,684.3 1327.8,706.1 1327.8,696.6 1327.9,686.4 1327.9,679.7 1327.9,685.9 1328.0,687.9 1328.0,685.3 1328.1,691.0 1328.1,692.0 1328.1,703.5 1328.2,681.9 1328.2,691.3 1328.3,687.5 1328.3,684.4 1328.3,673.5 1328.4,699.2 1328.4,695.8 1328.5,682.6 1328.5,680.3 1328.6,702.7 1328.6,681.2 1328.6,718.4 1328.7,694.9 1328.7,692.2 1328.8,679.1 1328.8,701.3 1328.8,697.3 1328.9,688.2 1328.9,689.8 1329.0,691.8 1329.0,686.5 1329.0,693.2 1329.1,699.8 1329.1,690.8 1329.2,689.0 1329.2,693.4 1329.2,688.7 1329.3,694.2 1329.3,691.3 1329.4,689.2 1329.4,689.3 1329.4,699.3 1329.5,682.3 1329.5,683.3 1329.6,718.0 1329.6,712.0 1329.6,689.7 1329.7,680.0 1329.7,687.7 1329.8,678.5 1329.8,689.5 1329.8,693.4 1329.9,687.2 1329.9,686.3 1330.0,699.9 1330.0,687.9 1330.0,674.5 1330.1,685.3 1330.1,697.3 1330.2,686.6 1330.2,687.3 1330.2,683.2 1330.3,691.8 1330.3,693.7 1330.4,701.6 1330.4,687.9 1330.4,685.3 1330.5,686.8 1330.5,689.8 1330.6,685.9 1330.6,707.9 1330.6,692.0 1330.7,700.5 1330.7,689.2 1330.8,687.0 1330.8,682.4 1330.8,676.6 1330.9,692.0 1330.9,703.1 1331.0,689.1 1331.0,685.6 1331.0,686.0 1331.1,692.1 1331.1,683.0 1331.2,700.2 1331.2,686.5 1331.2,693.5 1331.3,691.1 1331.3,685.9 1331.4,696.9 1331.4,689.4 1331.4,694.6 1331.5,690.4 1331.5,685.7 1331.6,696.1 1331.6,695.0 1331.6,686.2 1331.7,711.6 1331.7,686.4 1331.8,680.2 1331.8,697.0 1331.8,684.3 1331.9,685.7 1331.9,678.0 1332.0,690.7 1332.0,681.6 1332.0,683.0 1332.1,683.3 1332.1,703.4 1332.2,685.7 1332.2,681.6 1332.2,682.5 1332.3,695.5 1332.3,697.0 1332.4,679.5 1332.4,704.6 1332.4,739.1 1332.5,695.5 1332.5,701.8 1332.6,680.7 1332.6,691.7 1332.6,712.9 1332.7,690.9 1332.7,684.7 1332.8,681.7 1332.8,689.2 1332.8,689.2 1332.9,686.8 1332.9,682.8 1333.0,674.9 1333.0,675.1 1333.0,686.1 1333.1,695.1 1333.1,676.7 1333.2,679.2 1333.2,686.2 1333.2,679.6 1333.3,691.4 1333.3,683.4 1333.3,691.0 1333.4,682.3 1333.4,704.2 1333.5,675.7 1333.5,685.1 1333.5,708.9 1333.6,683.4 1333.6,680.5 1333.7,696.3 1333.7,698.5 1333.7,684.3 1333.8,684.4 1333.8,679.0 1333.9,689.3 1333.9,677.2 1333.9,680.7 1334.0,684.7 1334.0,715.2 1334.1,687.8 1334.1,700.2 1334.1,700.1 1334.2,694.5 1334.2,692.2 1334.3,705.2 1334.3,693.4 1334.3,681.2 1334.4,705.9 1334.4,686.2 1334.4,683.9 1334.5,700.8 1334.5,698.0 1334.6,680.7 1334.6,688.9 1334.6,690.9 1334.7,680.0 1334.7,679.3 1334.8,687.5 1334.8,683.6 1334.8,692.2 1334.9,699.4 1334.9,707.7 1335.0,684.7 1335.0,681.4 1335.0,678.2 1335.1,691.4 1335.1,693.4 1335.2,684.1 1335.2,690.0 1335.2,677.7 1335.3,635.0 1335.3,667.0 1335.3,681.2 1335.4,691.2 1335.4,679.6 1335.5,689.9 1335.5,681.8 1335.5,692.4 1335.6,697.4 1335.6,688.7 1335.7,704.1 1335.7,696.5 1335.7,699.9 1335.8,703.3 1335.8,691.8 1335.9,694.4 1335.9,690.6 1335.9,690.8 1336.0,701.5 1336.0,705.0 1336.0,687.5 1336.1,681.8 1336.1,698.2 1336.2,704.0 1336.2,678.3 1336.2,711.4 1336.3,691.5 1336.3,676.0 1336.4,691.1 1336.4,697.3 1336.4,687.9 1336.5,699.6 1336.5,690.6 1336.6,694.0 1336.6,673.5 1336.6,689.9 1336.7,678.5 1336.7,704.5 1336.7,694.0 1336.8,678.4 1336.8,687.3 1336.9,689.5 1336.9,686.7 1336.9,687.8 1337.0,683.7 1337.0,687.1 1337.1,688.1 1337.1,682.9 1337.1,674.9 1337.2,683.2 1337.2,689.4 1337.2,684.7 1337.3,692.9 1337.3,692.2 1337.4,686.0 1337.4,723.0 1337.4,704.2 1337.5,690.1 1337.5,714.5 1337.6,692.6 1337.6,705.0 1337.6,689.8 1337.7,678.8 1337.7,690.8 1337.7,695.3 1337.8,706.3 1337.8,687.8 1337.9,692.3 1337.9,685.7 1337.9,711.4 1338.0,716.8 1338.0,688.9 1338.1,690.4 1338.1,695.9 1338.1,678.2 1338.2,687.0 1338.2,703.8 1338.2,684.3 1338.3,700.6 1338.3,681.8 1338.4,688.2 1338.4,689.4 1338.4,670.9 1338.5,697.8 1338.5,685.1 1338.6,703.7 1338.6,687.5 1338.6,686.5 1338.7,706.7 1338.7,711.9 1338.7,695.4 1338.8,695.2 1338.8,695.8 1338.9,691.0 1338.9,677.6 1338.9,687.4 1339.0,685.6 1339.0,690.2 1339.0,680.7 1339.1,678.9 1339.1,696.1 1339.2,677.1 1339.2,693.7 1339.2,688.5 1339.3,700.7 1339.3,681.2 1339.4,707.6 1339.4,685.6 1339.4,706.4 1339.5,695.9 1339.5,671.8 1339.5,693.5 1339.6,691.2 1339.6,679.0 1339.7,695.1 1339.7,693.7 1339.7,682.0 1339.8,702.7 1339.8,685.3 1339.8,695.6 1339.9,706.2 1339.9,707.0 1340.0,683.7 1340.0,695.1 1340.0,693.4 1340.1,698.0 1340.1,683.6 1340.2,690.4 1340.2,688.0 1340.2,679.6 1340.3,693.5 1340.3,692.2 1340.3,689.1 1340.4,674.9 1340.4,692.9 1340.5,682.9 1340.5,701.0 1340.5,684.5 1340.6,695.0 1340.6,706.2 1340.6,687.4 1340.7,679.9 1340.7,682.9 1340.8,687.8 1340.8,684.3 1340.8,687.6 1340.9,685.7 1340.9,712.5 1340.9,676.1 1341.0,698.7 1341.0,683.7 1341.1,693.6 1341.1,713.1 1341.1,688.0 1341.2,695.6 1341.2,688.9 1341.2,678.0 1341.3,687.7 1341.3,684.9 1341.4,689.6 1341.4,697.5 1341.4,695.1 1341.5,675.0 1341.5,686.0 1341.5,684.0 1341.6,709.1 1341.6,694.7 1341.7,683.5 1341.7,698.4 1341.7,691.3 1341.8,684.6 1341.8,689.4 1341.8,682.6 1341.9,684.0 1341.9,688.8 1342.0,679.1 1342.0,697.7 1342.0,683.0 1342.1,677.9 1342.1,682.1 1342.1,678.0 1342.2,682.3 1342.2,698.7 1342.3,683.7 1342.3,690.8 1342.3,683.1 1342.4,693.5 1342.4,690.1 1342.4,676.8 1342.5,682.2 1342.5,695.0 1342.6,688.1 1342.6,687.0 1342.6,698.4 1342.7,689.1 1342.7,699.9 1342.7,675.2 1342.8,707.5 1342.8,687.1 1342.9,675.0 1342.9,633.6 1342.9,658.9 1343.0,690.0 1343.0,686.3 1343.0,683.6 1343.1,673.8 1343.1,680.1 1343.2,684.8 1343.2,686.8 1343.2,706.4 1343.3,686.2 1343.3,696.3 1343.3,692.7 1343.4,677.4 1343.4,696.2 1343.5,714.0 1343.5,688.5 1343.5,687.1 1343.6,688.2 1343.6,688.0 1343.6,688.5 1343.7,680.6 1343.7,700.5 1343.7,686.3 1343.8,680.9 1343.8,678.9 1343.9,693.3 1343.9,680.4 1343.9,689.1 1344.0,687.5 1344.0,680.6 1344.0,679.2 1344.1,677.3 1344.1,693.6 1344.2,689.1 1344.2,689.3 1344.2,694.4 1344.3,688.5 1344.3,683.0 1344.3,689.9 1344.4,688.4 1344.4,692.9 1344.5,674.0 1344.5,679.6 1344.5,685.8 1344.6,692.1 1344.6,680.3 1344.6,697.4 1344.7,680.9 1344.7,692.8 1344.7,713.6 1344.8,689.8 1344.8,675.9 1344.9,695.2 1344.9,699.9 1344.9,677.4 1345.0,684.2 1345.0,692.2 1345.0,687.7 1345.1,705.8 1345.1,690.9 1345.2,677.4 1345.2,683.4 1345.2,693.1 1345.3,688.2 1345.3,679.7 1345.3,677.1 1345.4,695.7 1345.4,691.8 1345.4,700.8 1345.5,685.8 1345.5,698.6 1345.6,687.9 1345.6,673.5 1345.6,677.5 1345.7,689.6 1345.7,705.7 1345.7,709.0 1345.8,680.8 1345.8,681.2 1345.9,683.7 1345.9,686.3 1345.9,687.5 1346.0,694.0 1346.0,689.3 1346.0,681.3 1346.1,682.9 1346.1,700.5 1346.1,708.8 1346.2,702.3 1346.2,697.9 1346.3,685.5 1346.3,693.5 1346.3,674.1 1346.4,689.9 1346.4,704.2 1346.4,688.4 1346.5,703.1 1346.5,679.6 1346.5,689.7 1346.6,695.4 1346.6,700.3 1346.7,693.7 1346.7,693.4 1346.7,691.8 1346.8,679.6 1346.8,681.8 1346.8,688.2 1346.9,680.5 1346.9,694.9 1346.9,702.8 1347.0,684.9 1347.0,684.7 1347.1,695.5 1347.1,689.0 1347.1,681.2 1347.2,680.4 1347.2,690.4 1347.2,681.2 1347.3,703.3 1347.3,671.4 1347.3,677.6 1347.4,698.3 1347.4,706.8 1347.5,692.2 1347.5,695.5 1347.5,698.3 1347.6,681.7 1347.6,688.6 1347.6,684.1 1347.7,691.1 1347.7,678.0 1347.7,684.8 1347.8,703.3 1347.8,680.6 1347.9,709.9 1347.9,698.2 1347.9,683.0 1348.0,683.9 1348.0,689.6 1348.0,686.5 1348.1,676.4 1348.1,691.9 1348.1,682.6 1348.2,677.5 1348.2,684.4 1348.3,694.3 1348.3,691.7 1348.3,683.8 1348.4,676.5 1348.4,705.1 1348.4,689.0 1348.5,699.0 1348.5,693.4 1348.5,680.2 1348.6,690.9 1348.6,684.3 1348.7,675.0 1348.7,684.1 1348.7,683.5 1348.8,686.6 1348.8,681.3 1348.8,688.4 1348.9,691.4 1348.9,692.5 1348.9,677.2 1349.0,679.2 1349.0,680.4 1349.0,687.1 1349.1,676.4 1349.1,682.8 1349.2,687.5 1349.2,707.9 1349.2,685.7 1349.3,684.4 1349.3,684.0 1349.3,687.9 1349.4,685.2 1349.4,699.1 1349.4,707.8 1349.5,698.5 1349.5,683.2 1349.6,692.2 1349.6,682.4 1349.6,691.3 1349.7,689.7 1349.7,703.2 1349.7,688.7 1349.8,684.4 1349.8,678.6 1349.8,686.2 1349.9,685.7 1349.9,689.0 1349.9,693.5 1350.0,688.8 1350.0,691.1 1350.1,680.7 1350.1,707.5 1350.1,681.7 1350.2,692.0 1350.2,645.0 1350.2,673.9 1350.3,681.0 1350.3,700.6 1350.3,698.5 1350.4,679.4 1350.4,694.2 1350.4,679.5 1350.5,681.3 1350.5,682.4 1350.6,686.9 1350.6,703.2 1350.6,687.4 1350.7,695.3 1350.7,688.7 1350.7,682.3 1350.8,702.1 1350.8,687.9 1350.8,674.6 1350.9,705.3 1350.9,699.6 1350.9,685.2 1351.0,696.4 1351.0,684.9 1351.1,689.5 1351.1,705.8 1351.1,697.2 1351.2,694.7 1351.2,698.3 1351.2,679.5 1351.3,683.8 1351.3,680.2 1351.3,697.3 1351.4,687.2 1351.4,700.3 1351.4,690.3 1351.5,689.2 1351.5,682.9 1351.5,675.8 1351.6,683.8 1351.6,681.5 1351.7,689.4 1351.7,698.5 1351.7,690.7 1351.8,704.9 1351.8,684.9 1351.8,684.2 1351.9,690.5 1351.9,674.6 1351.9,691.2 1352.0,680.9 1352.0,671.6 1352.0,696.2 1352.1,708.4 1352.1,694.4 1352.1,688.0 1352.2,678.1 1352.2,688.7 1352.3,677.3 1352.3,696.9 1352.3,678.2 1352.4,680.1 1352.4,690.2 1352.4,701.2 1352.5,689.4 1352.5,697.4 1352.5,692.7 1352.6,688.8 1352.6,680.2 1352.6,689.5 1352.7,678.3 1352.7,680.1 1352.7,691.5 1352.8,675.9 1352.8,691.2 1352.9,691.9 1352.9,680.5 1352.9,679.1 1353.0,686.2 1353.0,690.5 1353.0,687.2 1353.1,694.3 1353.1,709.1 1353.1,682.1 1353.2,726.6 1353.2,685.9 1353.2,688.6 1353.3,681.9 1353.3,684.2 1353.3,711.3 1353.4,680.5 1353.4,677.2 1353.5,696.3 1353.5,681.4 1353.5,681.0 1353.6,701.6 1353.6,684.3 1353.6,695.0 1353.7,676.0 1353.7,680.6 1353.7,695.4 1353.8,676.5 1353.8,686.3 1353.8,696.1 1353.9,683.4 1353.9,694.8 1353.9,688.5 1354.0,682.1 1354.0,697.1 1354.0,671.3 1354.1,674.9 1354.1,692.7 1354.2,686.3 1354.2,684.8 1354.2,700.0 1354.3,679.0 1354.3,700.7 1354.3,693.1 1354.4,676.4 1354.4,676.8 1354.4,685.7 1354.5,680.9 1354.5,686.5 1354.5,710.7 1354.6,683.5 1354.6,716.1 1354.6,691.8 1354.7,708.8 1354.7,685.6 1354.7,698.3 1354.8,684.8 1354.8,682.9 1354.8,685.7 1354.9,688.3 1354.9,695.7 1355.0,703.9 1355.0,687.4 1355.0,682.1 1355.1,675.7 1355.1,697.4 1355.1,672.9 1355.2,700.8 1355.2,689.4 1355.2,679.7 1355.3,698.8 1355.3,704.2 1355.3,677.4 1355.4,688.6 1355.4,679.4 1355.4,685.0 1355.5,694.7 1355.5,691.7 1355.5,685.8 1355.6,695.1 1355.6,708.5 1355.6,701.4 1355.7,686.0 1355.7,694.6 1355.7,684.4 1355.8,682.3 1355.8,698.0 1355.9,681.1 1355.9,682.3 1355.9,676.8 1356.0,692.9 1356.0,698.0 1356.0,685.2 1356.1,686.9 1356.1,698.2 1356.1,680.2 1356.2,684.2 1356.2,674.5 1356.2,690.9 1356.3,678.4 1356.3,686.4 1356.3,712.0 1356.4,700.5 1356.4,686.7 1356.4,690.5 1356.5,684.7 1356.5,678.2 1356.5,678.7 1356.6,681.7 1356.6,676.3 1356.6,680.0 1356.7,698.8 1356.7,681.3 1356.8,699.2 1356.8,687.9 1356.8,690.3 1356.9,684.5 1356.9,689.4 1356.9,682.2 1357.0,673.5 1357.0,700.2 1357.0,690.5 1357.1,683.2 1357.1,683.0 1357.1,689.1 1357.2,686.4 1357.2,630.6 1357.2,657.7 1357.3,678.0 1357.3,695.8 1357.3,697.3 1357.4,745.9 1357.4,686.6 1357.4,697.7 1357.5,696.2 1357.5,680.5 1357.5,674.1 1357.6,690.3 1357.6,689.2 1357.6,682.1 1357.7,684.6 1357.7,687.3 1357.7,679.7 1357.8,684.6 1357.8,690.0 1357.8,682.2 1357.9,679.2 1357.9,682.8 1358.0,684.8 1358.0,695.1 1358.0,694.1 1358.1,676.9 1358.1,672.0 1358.1,693.5 1358.2,693.8 1358.2,694.6 1358.2,680.2 1358.3,683.0 1358.3,676.7 1358.3,709.1 1358.4,684.8 1358.4,690.5 1358.4,690.0 1358.5,685.4 1358.5,698.9 1358.5,682.8 1358.6,693.4 1358.6,678.9 1358.6,680.1 1358.7,680.9 1358.7,681.5 1358.7,681.1 1358.8,694.4 1358.8,676.1 1358.8,699.0 1358.9,681.2 1358.9,680.1 1358.9,682.9 1359.0,707.0 1359.0,714.3 1359.0,710.6 1359.1,694.2 1359.1,681.2 1359.1,677.6 1359.2,705.3 1359.2,685.2 1359.2,686.0 1359.3,692.5 1359.3,690.7 1359.3,696.1 1359.4,683.6 1359.4,688.2 1359.4,700.0 1359.5,691.9 1359.5,679.4 1359.5,671.1 1359.6,690.9 1359.6,684.9 1359.6,683.2 1359.7,670.8 1359.7,679.8 1359.8,678.7 1359.8,675.1 1359.8,693.1 1359.9,689.8 1359.9,698.5 1359.9,692.9 1360.0,679.1 1360.0,685.7 1360.0,684.2 1360.1,676.8 1360.1,675.4 1360.1,669.8 1360.2,683.4 1360.2,693.6 1360.2,691.5 1360.3,692.9 1360.3,690.5 1360.3,679.3 1360.4,690.2 1360.4,687.0 1360.4,702.9 1360.5,673.7 1360.5,677.3 1360.5,694.7 1360.6,682.9 1360.6,699.5 1360.6,677.8 1360.7,684.8 1360.7,703.2 1360.7,675.7 1360.8,682.0 1360.8,684.1 1360.8,692.4 1360.9,688.9 1360.9,695.9 1360.9,681.4 1361.0,686.4 1361.0,675.0 1361.0,681.6 1361.1,698.4 1361.1,687.9 1361.1,676.4 1361.2,682.6 1361.2,683.2 1361.2,688.3 1361.3,699.1 1361.3,693.2 1361.3,684.7 1361.4,696.9 1361.4,679.2 1361.4,688.5 1361.5,713.0 1361.5,680.7 1361.5,674.0 1361.6,680.9 1361.6,676.8 1361.6,689.0 1361.7,688.2 1361.7,670.1 1361.7,697.4 1361.8,692.0 1361.8,691.1 1361.8,685.3 1361.9,695.4 1361.9,693.3 1361.9,669.8 1362.0,692.4 1362.0,684.5 1362.0,701.2 1362.1,709.9 1362.1,695.3 1362.1,694.5 1362.2,687.2 1362.2,688.5 1362.2,685.3 1362.3,671.4 1362.3,684.1 1362.3,678.7 1362.4,677.8 1362.4,678.9 1362.4,688.5 1362.5,679.2 1362.5,689.9 1362.5,687.1 1362.6,688.9 1362.6,687.2 1362.6,680.4 1362.7,681.5 1362.7,682.8 1362.7,686.9 1362.8,682.1 1362.8,684.6 1362.8,686.8 1362.9,676.1 1362.9,685.2 1362.9,693.8 1363.0,690.7 1363.0,690.6 1363.0,680.0 1363.1,697.6 1363.1,714.5 1363.1,684.1 1363.2,685.4 1363.2,676.3 1363.2,696.0 1363.3,686.9 1363.3,681.3 1363.3,693.1 1363.4,683.5 1363.4,687.4 1363.4,682.4 1363.5,695.2 1363.5,697.6 1363.5,683.7 1363.6,678.9 1363.6,690.6 1363.6,680.8 1363.7,694.8 1363.7,686.0 1363.7,678.4 1363.8,690.9 1363.8,682.0 1363.8,688.4 1363.9,680.1 1363.9,709.8 1363.9,633.0 1364.0,660.0 1364.0,687.9 1364.0,695.3 1364.1,678.4 1364.1,677.6 1364.1,672.6 1364.2,696.9 1364.2,698.4 1364.2,684.7 1364.3,683.6 1364.3,680.6 1364.3,695.7 1364.4,694.0 1364.4,682.1 1364.4,690.5 1364.5,695.1 1364.5,691.0 1364.5,701.1 1364.6,689.8 1364.6,687.4 1364.6,687.2 1364.6,693.3 1364.7,705.6 1364.7,696.8 1364.7,701.8 1364.8,686.7 1364.8,690.0 1364.8,691.0 1364.9,684.3 1364.9,683.5 1364.9,685.7 1365.0,684.7 1365.0,698.4 1365.0,706.6 1365.1,689.6 1365.1,672.6 1365.1,703.8 1365.2,680.6 1365.2,678.7 1365.2,682.8 1365.3,690.3 1365.3,687.3 1365.3,686.7 1365.4,685.0 1365.4,696.1 1365.4,684.2 1365.5,693.6 1365.5,708.6 1365.5,706.6 1365.6,676.9 1365.6,692.8 1365.6,680.5 1365.7,682.9 1365.7,681.5 1365.7,690.5 1365.8,692.5 1365.8,687.6 1365.8,689.2 1365.9,688.6 1365.9,689.9 1365.9,682.9 1366.0,683.1 1366.0,689.6 1366.0,683.6 1366.1,675.1 1366.1,676.5 1366.1,680.6 1366.2,701.2 1366.2,719.3 1366.2,690.8 1366.3,707.0 1366.3,684.4 1366.3,683.8 1366.3,689.2 1366.4,678.0 1366.4,690.6 1366.4,687.0 1366.5,669.4 1366.5,681.8 1366.5,686.2 1366.6,701.1 1366.6,712.4 1366.6,688.7 1366.7,676.6 1366.7,684.8 1366.7,678.4 1366.8,708.8 1366.8,677.1 1366.8,679.5 1366.9,682.0 1366.9,681.7 1366.9,684.2 1367.0,675.8 1367.0,686.4 1367.0,682.6 1367.1,686.8 1367.1,697.1 1367.1,696.7 1367.2,682.8 1367.2,687.5 1367.2,673.1 1367.3,678.3 1367.3,690.0 1367.3,695.3 1367.4,682.2 1367.4,690.4 1367.4,678.3 1367.5,684.3 1367.5,685.7 1367.5,690.2 1367.5,681.3 1367.6,684.8 1367.6,693.9 1367.6,679.7 1367.7,698.3 1367.7,678.9 1367.7,709.7 1367.8,697.0 1367.8,703.6 1367.8,678.2 1367.9,694.9 1367.9,690.9 1367.9,705.1 1368.0,685.0 1368.0,684.2 1368.0,698.7 1368.1,692.2 1368.1,706.7 1368.1,700.0 1368.2,679.6 1368.2,694.7 1368.2,694.8 1368.3,685.3 1368.3,681.7 1368.3,696.7 1368.4,710.0 1368.4,680.8 1368.4,689.6 1368.4,702.0 1368.5,682.2 1368.5,678.7 1368.5,684.7 1368.6,670.5 1368.6,691.6 1368.6,686.4 1368.7,684.7 1368.7,701.7 1368.7,686.4 1368.8,680.7 1368.8,683.6 1368.8,682.0 1368.9,684.7 1368.9,677.4 1368.9,687.3 1369.0,678.2 1369.0,678.8 1369.0,687.6 1369.1,703.0 1369.1,689.9 1369.1,679.8 1369.2,691.1 1369.2,675.3 1369.2,694.7 1369.3,711.8 1369.3,687.3 1369.3,701.5 1369.3,694.8 1369.4,675.3 1369.4,685.6 1369.4,680.0 1369.5,732.6 1369.5,686.2 1369.5,675.7 1369.6,678.9 1369.6,687.8 1369.6,689.5 1369.7,690.3 1369.7,685.0 1369.7,686.7 1369.8,719.0 1369.8,674.3 1369.8,692.1 1369.9,686.1 1369.9,682.0 1369.9,697.0 1370.0,685.3 1370.0,692.6 1370.0,703.2 1370.0,714.5 1370.1,688.7 1370.1,681.7 1370.1,678.7 1370.2,690.7 1370.2,683.2 1370.2,678.3 1370.3,701.5 1370.3,686.5 1370.3,671.9 1370.4,683.6 1370.4,647.0 1370.4,668.2 1370.5,687.0 1370.5,676.0 1370.5,678.7 1370.6,689.7 1370.6,681.7 1370.6,683.2 1370.7,696.3 1370.7,686.8 1370.7,694.3 1370.7,686.4 1370.8,672.8 1370.8,676.5 1370.8,678.3 1370.9,686.8 1370.9,681.5 1370.9,718.5 1371.0,678.2 1371.0,685.6 1371.0,692.6 1371.1,689.7 1371.1,691.3 1371.1,700.7 1371.2,707.6 1371.2,674.8 1371.2,691.1 1371.3,681.0 1371.3,676.8 1371.3,696.1 1371.3,679.6 1371.4,687.3 1371.4,681.4 1371.4,675.7 1371.5,689.4 1371.5,696.8 1371.5,675.8 1371.6,678.0 1371.6,705.9 1371.6,679.1 1371.7,677.6 1371.7,699.5 1371.7,682.3 1371.8,675.7 1371.8,687.8 1371.8,688.7 1371.9,687.4 1371.9,689.0 1371.9,696.6 1371.9,682.0 1372.0,691.6 1372.0,679.5 1372.0,688.1 1372.1,693.5 1372.1,689.9 1372.1,673.6 1372.2,685.0 1372.2,679.2 1372.2,684.9 1372.3,677.6 1372.3,695.5 1372.3,673.8 1372.4,702.7 1372.4,697.1 1372.4,691.4 1372.5,675.4 1372.5,690.1 1372.5,679.5" fill="none" stroke="#00f000" stroke-width="1" shape-rendering="crispEdges"/></svg>
<div class="ylab" style="left:540px;width:34px;top:493.0px">20dB</div>
<div class="ylab" style="left:540px;width:34px;top:530.0px">0dB</div>
<div class="ylab" style="left:540px;width:34px;top:566.9px">-20dB</div>
<div class="ylab" style="left:540px;width:34px;top:603.9px">-40dB</div>
<div class="ylab" style="left:540px;width:34px;top:640.8px">-60dB</div>
<div class="ylab" style="left:540px;width:34px;top:677.8px">-80dB</div>
<div class="ylab" style="left:540px;width:34px;top:714.7px">-100dB</div>
<div class="ylab" style="left:540px;width:34px;top:751.7px">-120dB</div>
<div class="ylab" style="left:540px;width:34px;top:788.6px">-140dB</div>
<div class="xlab" style="left:775px;width:60px;top:801px">1KHz</div>
<div class="xlab" style="left:1170px;width:60px;top:801px">10KHz</div>
<div class="a" style="left:962px;top:485px;font-size:10px;line-height:11px;font-weight:bold;color:#22d022">V(out)</div>
<div class="a" style="left:1416px;top:466px;width:18px;height:349px;background:#d4d0c8;border-top:1px solid #e8e4dc;border-left:1px solid #808080;border-right:1px solid #404040;border-bottom:1px solid #404040"></div>
<div class="wbtn" style="left:1418px;top:471px;width:11px;height:11px"></div>
<svg style="left:1419px;top:472px" width="9" height="9"><path d="M1.5,1.5 L7.5,7.5 M7.5,1.5 L1.5,7.5" stroke="#000" stroke-width="1.5"/></svg>
<div class="a" style="left:1418px;top:484px;width:13px;height:328px;background:#bcbcbc;border-top:1px solid #808080;border-left:1px solid #808080;border-right:1px solid #fff;border-bottom:1px solid #fff"></div>
<div class="a" style="left:467px;top:754px;width:1px;height:12px;background:#505050"></div>
<div class="a" style="left:455px;top:766px;width:24px;height:1px;background:#505050"></div>
<svg style="left:465px;top:764px" width="14" height="20"><path d="M1.5,1 L1.5,16 L5,12.5 L7.5,18 L10,17 L7.5,11.5 L12,11.5 Z" fill="#fff" stroke="#000" stroke-width="1.2" stroke-linejoin="round"/></svg>
<div class="a" style="left:6px;top:815px;width:1429px;height:17px;background:#d4d0c8"></div>
<div class="a" style="left:1392px;top:818px;width:41px;height:12px;border-top:1px solid #808080;border-left:1px solid #808080;border-right:1px solid #fff;border-bottom:1px solid #fff"></div>
<div class="a" style="left:3px;top:832px;width:1434px;height:1px;background:#555"></div><div class="a" style="left:3px;top:833px;width:1434px;height:17px;background:#e6e6e6"></div><div class="a" style="left:3px;top:850px;width:1434px;height:1px;background:#fafafa"></div><div class="a" style="left:24.5px;top:833px;width:1px;height:17px;background:#999"></div><svg style="left:4px;top:833px" width="18" height="17" viewBox="0 0 18 17"><g transform="translate(0,0) scale(0.8)" fill="#3a3a3a"><path d="M5.5,14 Q5,20 11,20.5 Q16,20.5 16,17 Q15.5,15 12.5,15.5 Q10,16.5 9.5,15 Q9.5,13 13,12 Q16.5,10.5 15,8.5 Q13,7 9.5,8.5 Q6,10 5.5,14 Z"/><ellipse cx="3.6" cy="10.8" rx="0.9" ry="1.5" transform="rotate(-25 3.6 10.8)"/><ellipse cx="6.6" cy="8.6" rx="1.1" ry="1.8" transform="rotate(-15 6.6 8.6)"/><ellipse cx="10" cy="7" rx="1.3" ry="1.9" transform="rotate(-5 10 7)"/><path d="M13,6.5 Q13.5,4 17,4 Q20,4.5 21,6.5 Q19,5.5 17,6.3 Q15,7.5 13,6.5 Z"/></g></svg><svg style="left:29px;top:835px" width="16" height="15" viewBox="0 0 16 15"><g transform="scale(0.8)"><path d="M1,3 H7 L9,5 H19 V17 H1 Z" fill="#5f8fd0" stroke="#2f5f9f" stroke-width="0.8"/><path d="M1,7 H19 V17 H1 Z" fill="#8ab4e8" stroke="#2f5f9f" stroke-width="0.8"/><path d="M7,10 H9 M11,10 H13 M7,14 H9 M11,14 H13 M7,10 V14 M13,10 V14" stroke="#2f5f9f" stroke-width="0.9"/></g></svg><svg style="left:46px;top:835px" width="16" height="15" viewBox="0 0 16 15"><g transform="scale(0.8)"><rect x="1" y="2" width="18" height="15" rx="1.5" fill="#3c3c3c" stroke="#202020"/><rect x="3" y="4" width="14" height="10" fill="#4a4a4a"/><path d="M4,6 L7,8 L4,10 M8,11 H11" stroke="#eee" stroke-width="1" fill="none"/><rect x="3" y="15" width="2" height="1" fill="#8f8"/></g></svg><svg style="left:65px;top:835px" width="15" height="15" viewBox="0 0 15 15"><g transform="scale(0.8)"><rect x="2" y="1" width="15" height="17" rx="2" fill="#d8d8d8" stroke="#808080"/><rect x="4" y="3.5" width="11" height="6" fill="#c0c0c0" stroke="#909090" stroke-width="0.8"/><rect x="4" y="10.5" width="11" height="6" fill="#c0c0c0" stroke="#909090" stroke-width="0.8"/><rect x="8" y="6" width="3" height="1.3" fill="#555"/><rect x="8" y="13" width="3" height="1.3" fill="#555"/></g></svg><svg style="left:83px;top:835px" width="15" height="15" viewBox="0 0 15 15"><g transform="scale(0.8)"><rect x="2" y="1" width="15" height="18" rx="1.5" fill="#505050" stroke="#303030"/><rect x="4" y="3" width="11" height="3" fill="#9ee070"/><g fill="#c8c8c8"><rect x="4" y="8.0" width="2" height="1.6"/><rect x="4" y="10.7" width="2" height="1.6"/><rect x="4" y="13.4" width="2" height="1.6"/><rect x="4" y="16.1" width="2" height="1.6"/><rect x="7" y="8.0" width="2" height="1.6"/><rect x="7" y="10.7" width="2" height="1.6"/><rect x="7" y="13.4" width="2" height="1.6"/><rect x="7" y="16.1" width="2" height="1.6"/><rect x="10" y="8.0" width="2" height="1.6"/><rect x="10" y="10.7" width="2" height="1.6"/><rect x="10" y="13.4" width="2" height="1.6"/><rect x="10" y="16.1" width="2" height="1.6"/><rect x="13" y="8.0" width="2" height="1.6"/><rect x="13" y="10.7" width="2" height="1.6"/><rect x="13" y="13.4" width="2" height="1.6"/><rect x="13" y="16.1" width="2" height="1.6"/></g></g></svg><svg style="left:100px;top:834px" width="16" height="16" viewBox="0 0 16 16"><g transform="scale(0.85)"><rect x="1" y="1" width="17" height="17" fill="#fff" stroke="#0a7a0a" stroke-width="2"/><path d="M4,4 L15,15 M15,4 L4,15" stroke="#0a7a0a" stroke-width="3"/><path d="M5,10 H14" stroke="#0a7a0a" stroke-width="1.5"/></g></svg><svg style="left:118px;top:834px" width="16" height="16" viewBox="0 0 16 16"><g transform="scale(0.85)"><rect x="1" y="1" width="17" height="17" fill="#fff" stroke="#0a1a9a" stroke-width="2"/><text x="3" y="15" font-family="Liberation Sans" font-weight="bold" font-style="italic" font-size="13" fill="#0a1a9a">W</text></g></svg><svg style="left:135px;top:834px" width="17" height="17" viewBox="0 0 17 17"><g transform="scale(0.95)"><defs><radialGradient id="gg95" cx="0.4" cy="0.35" r="0.7"><stop offset="0" stop-color="#f4f8ff"/><stop offset="0.6" stop-color="#c8d4ea"/><stop offset="1" stop-color="#9aa8c8"/></radialGradient></defs><circle cx="9" cy="9" r="8.5" fill="url(#gg95)"/></g></svg><svg style="left:163px;top:835px" width="13" height="13" viewBox="0 0 13 13"><circle cx="6.5" cy="6.5" r="6" fill="#b8b8b8" stroke="#909090"/><path d="M3,4 L6.5,9 L10,4" fill="none" stroke="#fff" stroke-width="1.5"/></svg><div class="a" style="left:181.5px;top:834.5px;font-size:10.6px;line-height:13.6px;color:#3a3a3a;letter-spacing:0.25px">[02 -&nbsp; Niente Di Nuovo.mp3]</div><svg style="left:331px;top:835px" width="13" height="13" viewBox="0 0 13 13"><path d="M1,5 L6,2 L12,5 L11,11 L6,12 L2,11 Z" fill="#c01818"/><path d="M4,4 L9,9 M9,4 L5,8" stroke="#f0d020" stroke-width="1.2"/></svg><div class="a" style="left:349px;top:834.5px;font-size:10.6px;line-height:13.6px;color:#3a3a3a;letter-spacing:0.3px">CAD</div><div class="a" style="left:494.5px;top:834px;width:167px;height:16px;background:#dcdcdc;border:1px solid #c4c4c4;border-radius:2px"></div><svg style="left:498px;top:835px" width="13" height="13" viewBox="0 0 13 13"><path d="M1,12 L3,1 L12,1 Z" fill="#fff" stroke="#222" stroke-width="1"/><path d="M4,2 H8 L6,6 Z M8,2 H11 L9,5 Z" fill="#b01010"/></svg><div class="a" style="left:516px;top:834.5px;font-size:10.6px;line-height:13.6px;color:#3a3a3a;letter-spacing:0.2px">LTspice XVII - bokarev_07.fft</div><svg style="left:1103px;top:835px" width="18" height="14" viewBox="0 0 18 14"><rect x="1" y="1" width="16" height="12" rx="1" fill="#6a9ad8" stroke="#3a6aa8"/><rect x="4" y="1.5" width="10" height="4" fill="#fff"/><rect x="4" y="8" width="10" height="5" fill="#2a4a78"/><rect x="6" y="9" width="4" height="3" fill="#ddd"/></svg><svg style="left:1129px;top:834px" width="17" height="16" viewBox="0 0 17 16"><rect x="0" y="0" width="17" height="16" fill="#000"/><path d="M2,3 L5,13 L8,3" stroke="#10c010" stroke-width="1.8" fill="none"/><path d="M9,7 V4 H13 V7" stroke="#1a9a1a" stroke-width="1.4" fill="none"/><path d="M15,9 H11 V13 H15" stroke="#e01010" stroke-width="1.4" fill="none"/></svg><svg style="left:1149px;top:834px" width="15" height="17" viewBox="0 0 15 17"><g transform="scale(0.95)"><ellipse cx="7.5" cy="8.5" rx="7" ry="8" fill="#3a6ab8"/><path d="M4.5,5.5 L10,11 L7.5,13.5 V3.5 L10,6 L4.5,11.5" stroke="#fff" stroke-width="1.2" fill="none"/></g></svg><svg style="left:1168px;top:834px" width="15" height="17" viewBox="0 0 15 17"><g transform="scale(0.95)"><path d="M7.5,1 Q11,6 13.5,10 Q14,16 7.5,16 Q1,16 1.5,10 Q4,6 7.5,1 Z" fill="#3a78c8"/><ellipse cx="7.5" cy="11" rx="4" ry="3" fill="#a0c8f0"/></g></svg><svg style="left:1184px;top:835px" width="19" height="14" viewBox="0 0 19 14"><rect width="19" height="14" fill="#fff"/><rect x="0" y="0.00" width="19" height="1.08" fill="#d02020"/><rect x="0" y="2.15" width="19" height="1.08" fill="#d02020"/><rect x="0" y="4.31" width="19" height="1.08" fill="#d02020"/><rect x="0" y="6.46" width="19" height="1.08" fill="#d02020"/><rect x="0" y="8.62" width="19" height="1.08" fill="#d02020"/><rect x="0" y="10.77" width="19" height="1.08" fill="#d02020"/><rect x="0" y="12.92" width="19" height="1.08" fill="#d02020"/><rect width="8.6" height="7.5" fill="#3a3a8a"/></svg><svg style="left:1205px;top:835px" width="14" height="15" viewBox="0 0 14 15"><g transform="scale(0.95)"><path d="M1,5 H4 L8,1 V14 L4,10 H1 Z" fill="#909090" stroke="#606060" stroke-width="0.8"/><path d="M10,5 Q12,7.5 10,10 M11.5,3 Q15,7.5 11.5,12" stroke="#6a8ac8" fill="none"/></g></svg><svg style="left:1226px;top:835px" width="9" height="14" viewBox="0 0 9 14"><path d="M1,1 H8 Q8,7 4.5,7 Q1,7 1,1 Z" fill="#f0f0f0" stroke="#909090" stroke-width="0.6"/><path d="M1.5,3.5 H7.5 Q7,6.5 4.5,6.5 Q2,6.5 1.5,3.5 Z" fill="#c01818"/><path d="M4.5,7 V12 M2,13 H7" stroke="#a0a0a0" stroke-width="1.2"/></svg><svg style="left:1239px;top:834px" width="19" height="16" viewBox="0 0 19 16"><g transform="scale(0.95)"><rect x="1" y="3" width="10" height="10" fill="#505a30" stroke="#303020"/><rect x="3" y="5" width="6" height="6" fill="#8a9a60"/><path d="M0,5 H1 M0,8 H1 M0,11 H1 M11,5 H12 M11,8 H12 M11,11 H12 M3,2 V3 M6,2 V3 M9,2 V3 M3,13 V14 M6,13 V14 M9,13 V14" stroke="#e0c040"/><rect x="13" y="1" width="5" height="14" rx="1" fill="#e8e8e8" stroke="#606060"/><rect x="14" y="7" width="3" height="7" fill="#30c030"/></g></svg><div class="a" style="left:1258px;top:834.5px;font-size:10.6px;line-height:13.6px;color:#3a3a3a;letter-spacing:0.05px">2,60GHz</div><svg style="left:1303px;top:836px" width="12" height="12" viewBox="0 0 12 12"><circle cx="6" cy="6" r="5.5" fill="#d0d0d0" stroke="#b0b0b0"/><circle cx="4" cy="5" r="1.5" fill="#c0c0c0"/></svg><div class="a" style="left:1316px;top:834.5px;font-size:10.6px;line-height:13.6px;color:#3a3a3a;letter-spacing:0.2px">-2 °C</div><div class="a" style="left:1350px;top:834.5px;font-size:10.6px;line-height:13.6px;color:#3a3a3a;letter-spacing:0.15px">Пт, 26 мар, 04:41</div><div class="a" style="left:0;top:873px;width:1440px;height:3px;background:#303030"></div><div class="a" style="left:0;top:876px;width:1440px;height:1px;background:#ececec"></div><div class="a" style="left:0;top:877px;width:1440px;height:23px;background:#e8e8e6"></div><div class="a" style="left:29px;top:876px;width:1.3px;height:24px;background:#333"></div><svg style="left:2px;top:876px" width="24" height="24" viewBox="0 0 24 24"><g transform="translate(0,0) scale(1.08)" fill="#3a3a3a"><path d="M5.5,14 Q5,20 11,20.5 Q16,20.5 16,17 Q15.5,15 12.5,15.5 Q10,16.5 9.5,15 Q9.5,13 13,12 Q16.5,10.5 15,8.5 Q13,7 9.5,8.5 Q6,10 5.5,14 Z"/><ellipse cx="3.6" cy="10.8" rx="0.9" ry="1.5" transform="rotate(-25 3.6 10.8)"/><ellipse cx="6.6" cy="8.6" rx="1.1" ry="1.8" transform="rotate(-15 6.6 8.6)"/><ellipse cx="10" cy="7" rx="1.3" ry="1.9" transform="rotate(-5 10 7)"/><path d="M13,6.5 Q13.5,4 17,4 Q20,4.5 21,6.5 Q19,5.5 17,6.3 Q15,7.5 13,6.5 Z"/></g></svg><svg style="left:35px;top:879px" width="21" height="20" viewBox="0 0 21 20"><g transform="scale(1.05)"><path d="M1,3 H7 L9,5 H19 V17 H1 Z" fill="#5f8fd0" stroke="#2f5f9f" stroke-width="0.8"/><path d="M1,7 H19 V17 H1 Z" fill="#8ab4e8" stroke="#2f5f9f" stroke-width="0.8"/><path d="M7,10 H9 M11,10 H13 M7,14 H9 M11,14 H13 M7,10 V14 M13,10 V14" stroke="#2f5f9f" stroke-width="0.9"/></g></svg><svg style="left:60px;top:879px" width="21" height="20" viewBox="0 0 21 20"><g transform="scale(1.05)"><rect x="1" y="2" width="18" height="15" rx="1.5" fill="#3c3c3c" stroke="#202020"/><rect x="3" y="4" width="14" height="10" fill="#4a4a4a"/><path d="M4,6 L7,8 L4,10 M8,11 H11" stroke="#eee" stroke-width="1" fill="none"/><rect x="3" y="15" width="2" height="1" fill="#8f8"/></g></svg><svg style="left:85px;top:878px" width="20" height="20" viewBox="0 0 20 20"><g transform="scale(1.05)"><rect x="2" y="1" width="15" height="17" rx="2" fill="#d8d8d8" stroke="#808080"/><rect x="4" y="3.5" width="11" height="6" fill="#c0c0c0" stroke="#909090" stroke-width="0.8"/><rect x="4" y="10.5" width="11" height="6" fill="#c0c0c0" stroke="#909090" stroke-width="0.8"/><rect x="8" y="6" width="3" height="1.3" fill="#555"/><rect x="8" y="13" width="3" height="1.3" fill="#555"/></g></svg><svg style="left:109px;top:877px" width="20" height="21" viewBox="0 0 20 21"><g transform="scale(1.05)"><rect x="2" y="1" width="15" height="18" rx="1.5" fill="#505050" stroke="#303030"/><rect x="4" y="3" width="11" height="3" fill="#9ee070"/><g fill="#c8c8c8"><rect x="4" y="8.0" width="2" height="1.6"/><rect x="4" y="10.7" width="2" height="1.6"/><rect x="4" y="13.4" width="2" height="1.6"/><rect x="4" y="16.1" width="2" height="1.6"/><rect x="7" y="8.0" width="2" height="1.6"/><rect x="7" y="10.7" width="2" height="1.6"/><rect x="7" y="13.4" width="2" height="1.6"/><rect x="7" y="16.1" width="2" height="1.6"/><rect x="10" y="8.0" width="2" height="1.6"/><rect x="10" y="10.7" width="2" height="1.6"/><rect x="10" y="13.4" width="2" height="1.6"/><rect x="10" y="16.1" width="2" height="1.6"/><rect x="13" y="8.0" width="2" height="1.6"/><rect x="13" y="10.7" width="2" height="1.6"/><rect x="13" y="13.4" width="2" height="1.6"/><rect x="13" y="16.1" width="2" height="1.6"/></g></g></svg><svg style="left:132px;top:878px" width="21" height="21" viewBox="0 0 21 21"><g transform="scale(1.08)"><rect x="1" y="1" width="17" height="17" fill="#fff" stroke="#0a7a0a" stroke-width="2"/><path d="M4,4 L15,15 M15,4 L4,15" stroke="#0a7a0a" stroke-width="3"/><path d="M5,10 H14" stroke="#0a7a0a" stroke-width="1.5"/></g></svg><svg style="left:156px;top:878px" width="21" height="21" viewBox="0 0 21 21"><g transform="scale(1.08)"><rect x="1" y="1" width="17" height="17" fill="#fff" stroke="#0a1a9a" stroke-width="2"/><text x="3" y="15" font-family="Liberation Sans" font-weight="bold" font-style="italic" font-size="13" fill="#0a1a9a">W</text></g></svg><svg style="left:178px;top:877px" width="22" height="22" viewBox="0 0 22 22"><g transform="scale(1.2)"><defs><radialGradient id="gg120" cx="0.4" cy="0.35" r="0.7"><stop offset="0" stop-color="#f4f8ff"/><stop offset="0.6" stop-color="#c8d4ea"/><stop offset="1" stop-color="#9aa8c8"/></radialGradient></defs><circle cx="9" cy="9" r="8.5" fill="url(#gg120)"/></g></svg><div class="a" style="left:212.5px;top:877px;width:187px;height:22px;background:#d8d8d8;border:1px solid #bcbcbc;border-radius:3px"></div><div class="a" style="left:217px;top:880px;width:16px;height:16px;background:#fff;border-radius:2px"></div><svg style="left:217px;top:880px" width="16" height="16" viewBox="0 0 16 16"><path d="M2,3 L5,13 L8,3" stroke="#e01010" stroke-width="2" fill="none"/><path d="M9,8 V5 H13 V8" stroke="#10a010" stroke-width="1.6" fill="none"/><path d="M14,10 H10 V14 H14" stroke="#1040e0" stroke-width="1.6" fill="none"/></svg><div class="a" style="left:241px;top:879.5px;font-size:14px;line-height:17px;color:#333;letter-spacing:0.45px">yes - VNC Viewer</div><svg style="left:405px;top:880px" width="17" height="17" viewBox="0 0 17 17"><g transform="scale(0.9)"><defs><radialGradient id="gg90" cx="0.4" cy="0.35" r="0.7"><stop offset="0" stop-color="#f4f8ff"/><stop offset="0.6" stop-color="#c8d4ea"/><stop offset="1" stop-color="#9aa8c8"/></radialGradient></defs><circle cx="9" cy="9" r="8.5" fill="url(#gg90)"/></g></svg><div class="a" style="left:429px;top:879.5px;font-size:14px;line-height:17px;color:#333;letter-spacing:0.2px">Германиевые УНЧ | ...</div><svg style="left:594px;top:880px" width="17" height="16" viewBox="0 0 17 16"><g transform="scale(0.85)"><path d="M1,3 H7 L9,5 H19 V17 H1 Z" fill="#5f8fd0" stroke="#2f5f9f" stroke-width="0.8"/><path d="M1,7 H19 V17 H1 Z" fill="#8ab4e8" stroke="#2f5f9f" stroke-width="0.8"/><path d="M7,10 H9 M11,10 H13 M7,14 H9 M11,14 H13 M7,10 V14 M13,10 V14" stroke="#2f5f9f" stroke-width="0.9"/></g></svg><div class="a" style="left:619px;top:879.5px;font-size:14px;line-height:17px;color:#333;letter-spacing:0.5px">11</div><svg style="left:783px;top:879px" width="18" height="17" viewBox="0 0 18 17"><ellipse cx="9" cy="10" rx="8" ry="6" fill="#5a5a50"/><ellipse cx="7" cy="9" rx="2.2" ry="2" fill="#fff"/><ellipse cx="12" cy="9" rx="2.2" ry="2" fill="#fff"/><circle cx="7.5" cy="9" r="1" fill="#000"/><circle cx="12.5" cy="9" r="1" fill="#000"/><path d="M3,5 L1,1 L6,4 M14,4 L17,1 L15,6" fill="#5a5a50"/></svg><div class="a" style="left:807px;top:879.5px;font-size:14px;line-height:17px;color:#333;letter-spacing:0.3px">Графический редак...</div><svg style="left:968px;top:877px" width="24" height="22" viewBox="0 0 24 22"><rect x="0" y="0" width="24" height="22" rx="2" fill="#e0e0e0"/><path d="M2,4 H9 L11,6 H22 V19 H2 Z" fill="#5f8fd0" stroke="#2f5f9f" stroke-width="0.8"/><path d="M2,8 H22 V19 H2 Z" fill="#8ab4e8" stroke="#2f5f9f" stroke-width="0.8"/><rect x="8" y="15" width="8" height="3" fill="#555"/><path d="M18,20 L23,15 V20 Z" fill="#20d020"/></svg><svg style="left:1005px;top:878px" width="19" height="21" viewBox="0 0 19 21"><g transform="scale(1.2)"><ellipse cx="7.5" cy="8.5" rx="7" ry="8" fill="#3a6ab8"/><path d="M4.5,5.5 L10,11 L7.5,13.5 V3.5 L10,6 L4.5,11.5" stroke="#fff" stroke-width="1.2" fill="none"/></g></svg><svg style="left:1030px;top:878px" width="19" height="21" viewBox="0 0 19 21"><g transform="scale(1.2)"><path d="M7.5,1 Q11,6 13.5,10 Q14,16 7.5,16 Q1,16 1.5,10 Q4,6 7.5,1 Z" fill="#3a78c8"/><ellipse cx="7.5" cy="11" rx="4" ry="3" fill="#a0c8f0"/></g></svg><svg style="left:1052px;top:877px" width="24" height="23" viewBox="0 0 24 23"><rect width="24" height="23" fill="#fff"/><rect x="0" y="0.00" width="24" height="1.77" fill="#d02020"/><rect x="0" y="3.54" width="24" height="1.77" fill="#d02020"/><rect x="0" y="7.08" width="24" height="1.77" fill="#d02020"/><rect x="0" y="10.62" width="24" height="1.77" fill="#d02020"/><rect x="0" y="14.15" width="24" height="1.77" fill="#d02020"/><rect x="0" y="17.69" width="24" height="1.77" fill="#d02020"/><rect x="0" y="21.23" width="24" height="1.77" fill="#d02020"/><rect width="10.8" height="12.4" fill="#3a3a8a"/></svg><svg style="left:1078px;top:879px" width="18" height="19" viewBox="0 0 18 19"><g transform="scale(1.25)"><path d="M1,5 H4 L8,1 V14 L4,10 H1 Z" fill="#909090" stroke="#606060" stroke-width="0.8"/><path d="M10,5 Q12,7.5 10,10 M11.5,3 Q15,7.5 11.5,12" stroke="#6a8ac8" fill="none"/></g></svg><svg style="left:1105px;top:880px" width="20" height="18" viewBox="0 0 20 18"><g fill="#3a5a98" stroke="#20386a" stroke-width="0.6"><rect x="1" y="12" width="3.5" height="5"/><rect x="5.5" y="9" width="3.5" height="8"/><rect x="10" y="5" width="3.5" height="12"/><rect x="14.5" y="1" width="3.5" height="16"/></g></svg><svg style="left:1129px;top:878px" width="22" height="21" viewBox="0 0 22 21"><rect x="1" y="3" width="12" height="14" rx="1" fill="#e8e8e8" stroke="#808080"/><rect x="4" y="1" width="6" height="2" fill="#909090"/><path d="M8,5 L4,11 H7 L5,15 L10,9 H7 Z" fill="#e0a020"/><path d="M10,13 H19 V18 Q19,20 16,20 H13 Q10,20 10,18 Z M12,11 V13 M17,11 V13" fill="#d8d8d8" stroke="#707070"/></svg><svg style="left:1158px;top:879px" width="10" height="19" viewBox="0 0 10 19"><path d="M1,1 H9 Q9,9 5,9 Q1,9 1,1 Z" fill="#f0f0f0" stroke="#909090" stroke-width="0.6"/><path d="M1.5,4 H8.5 Q8,8.5 5,8.5 Q2,8.5 1.5,4 Z" fill="#c01818"/><path d="M5,9 V16 M2,17.5 H8" stroke="#a0a0a0" stroke-width="1.4"/></svg><svg style="left:1175px;top:878px" width="24" height="21" viewBox="0 0 24 21"><rect x="1" y="4" width="13" height="13" fill="#505a30" stroke="#303020"/><rect x="4" y="7" width="7" height="7" fill="#8a9a60"/><path d="M0,6 H1 M0,9 H1 M0,12 H1 M0,15 H1 M14,6 H15 M14,9 H15 M14,12 H15 M14,15 H15 M3,3 V4 M6,3 V4 M9,3 V4 M12,3 V4 M3,17 V18 M6,17 V18 M9,17 V18 M12,17 V18" stroke="#e0c040"/><rect x="16" y="1" width="7" height="19" rx="1" fill="#f4f4f4" stroke="#606060"/><rect x="17" y="10" width="5" height="9" fill="#7a7ad0"/></svg><div class="a" style="left:1203px;top:879.5px;font-size:14px;line-height:17px;color:#333;letter-spacing:0.3px">840 MHz</div><svg style="left:1260px;top:879px" width="17" height="17" viewBox="0 0 17 17"><circle cx="8.5" cy="8.5" r="8" fill="#d8d8d8" stroke="#b0b0b0"/><circle cx="6" cy="7" r="2" fill="#c4c4c4"/><circle cx="11" cy="11" r="1.5" fill="#c4c4c4"/></svg><div class="a" style="left:1278px;top:879.5px;font-size:14px;line-height:17px;color:#333;letter-spacing:0.4px">-2 °C</div><div class="a" style="left:1323px;top:879.5px;font-size:14px;line-height:17px;color:#333;letter-spacing:0.25px">Пт, 26 мар, 04:41</div></body></html>
